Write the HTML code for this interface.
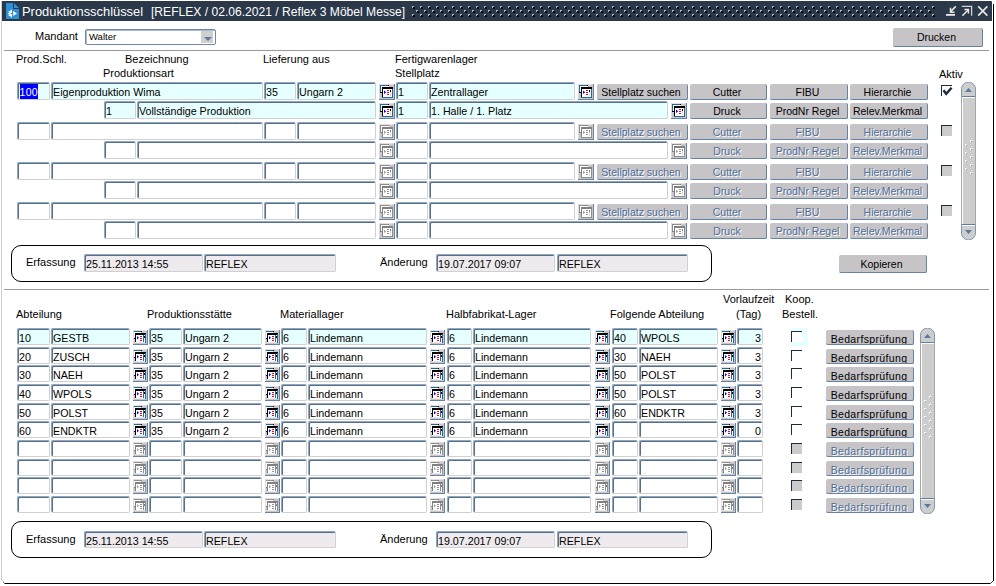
<!DOCTYPE html><html><head><meta charset="utf-8"><style>
html,body{margin:0;padding:0;background:#fff;width:996px;height:586px;overflow:hidden;position:relative;font-family:"Liberation Sans",sans-serif;font-size:10.5px;color:#000}
.a,.f,.b,.t,.ic{position:absolute}
.t{white-space:pre;line-height:12px}
.f{box-sizing:border-box;padding-top:2px;box-shadow:inset 1px 1px 0 #55708e;border-top:1px solid #93a6ba;border-left:1px solid #93a6ba;border-right:1px solid #d0d0d0;border-bottom:1px solid #d0d0d0;border-radius:2px;white-space:pre;overflow:hidden;font-size:10.7px}
.b{background:#c7c4c8;border-right:1px solid #6584a4;border-bottom:1px solid #6584a4;border-radius:2px;text-align:center;white-space:pre;overflow:hidden;font-size:10.5px}
.b.d{color:#4d6d97;text-shadow:1px 1px 0 #fff}
</style></head><body>

<div class="a" style="left:1px;top:1px;width:1px;height:579px;background:#cfcfcf"></div>
<div class="a" style="left:993px;top:4px;width:1px;height:577px;background:#000"></div>
<div class="a" style="left:5px;top:583px;width:985px;height:1px;background:#000"></div>
<svg class="ic" style="left:0;top:575px" width="996" height="11" shape-rendering="crispEdges"><rect x="2" y="5" width="1" height="1" fill="#d8d8d8"/><rect x="3" y="6" width="1" height="1" fill="#b8c0c8"/><rect x="3" y="7" width="1" height="1" fill="#5a7898"/><rect x="4" y="8" width="1" height="1" fill="#5a7898"/><rect x="992" y="6" width="1" height="1" fill="#203040"/><rect x="991" y="7" width="1" height="1" fill="#203040"/><rect x="990" y="8" width="1" height="1" fill="#4a6a90"/></svg>
<div class="a" style="left:2px;top:1px;width:990px;height:20px;background:#2a384a;border-top-right-radius:1px"></div>
<svg class="ic" style="left:0;top:0" width="996" height="22" shape-rendering="crispEdges"><rect x="412" y="6" width="2" height="2" fill="#9fb0c2"/><rect x="413" y="7" width="2" height="2" fill="#000"/><rect x="412" y="6" width="2" height="1" fill="#a8b8c8"/><rect x="412" y="6" width="1" height="2" fill="#a8b8c8"/><rect x="412" y="14" width="2" height="2" fill="#9fb0c2"/><rect x="413" y="15" width="2" height="2" fill="#000"/><rect x="412" y="14" width="2" height="1" fill="#a8b8c8"/><rect x="412" y="14" width="1" height="2" fill="#a8b8c8"/><rect x="416" y="10" width="2" height="2" fill="#9fb0c2"/><rect x="417" y="11" width="2" height="2" fill="#000"/><rect x="416" y="10" width="2" height="1" fill="#a8b8c8"/><rect x="416" y="10" width="1" height="2" fill="#a8b8c8"/><rect x="420" y="6" width="2" height="2" fill="#9fb0c2"/><rect x="421" y="7" width="2" height="2" fill="#000"/><rect x="420" y="6" width="2" height="1" fill="#a8b8c8"/><rect x="420" y="6" width="1" height="2" fill="#a8b8c8"/><rect x="420" y="14" width="2" height="2" fill="#9fb0c2"/><rect x="421" y="15" width="2" height="2" fill="#000"/><rect x="420" y="14" width="2" height="1" fill="#a8b8c8"/><rect x="420" y="14" width="1" height="2" fill="#a8b8c8"/><rect x="424" y="10" width="2" height="2" fill="#9fb0c2"/><rect x="425" y="11" width="2" height="2" fill="#000"/><rect x="424" y="10" width="2" height="1" fill="#a8b8c8"/><rect x="424" y="10" width="1" height="2" fill="#a8b8c8"/><rect x="428" y="6" width="2" height="2" fill="#9fb0c2"/><rect x="429" y="7" width="2" height="2" fill="#000"/><rect x="428" y="6" width="2" height="1" fill="#a8b8c8"/><rect x="428" y="6" width="1" height="2" fill="#a8b8c8"/><rect x="428" y="14" width="2" height="2" fill="#9fb0c2"/><rect x="429" y="15" width="2" height="2" fill="#000"/><rect x="428" y="14" width="2" height="1" fill="#a8b8c8"/><rect x="428" y="14" width="1" height="2" fill="#a8b8c8"/><rect x="432" y="10" width="2" height="2" fill="#9fb0c2"/><rect x="433" y="11" width="2" height="2" fill="#000"/><rect x="432" y="10" width="2" height="1" fill="#a8b8c8"/><rect x="432" y="10" width="1" height="2" fill="#a8b8c8"/><rect x="436" y="6" width="2" height="2" fill="#9fb0c2"/><rect x="437" y="7" width="2" height="2" fill="#000"/><rect x="436" y="6" width="2" height="1" fill="#a8b8c8"/><rect x="436" y="6" width="1" height="2" fill="#a8b8c8"/><rect x="436" y="14" width="2" height="2" fill="#9fb0c2"/><rect x="437" y="15" width="2" height="2" fill="#000"/><rect x="436" y="14" width="2" height="1" fill="#a8b8c8"/><rect x="436" y="14" width="1" height="2" fill="#a8b8c8"/><rect x="440" y="10" width="2" height="2" fill="#9fb0c2"/><rect x="441" y="11" width="2" height="2" fill="#000"/><rect x="440" y="10" width="2" height="1" fill="#a8b8c8"/><rect x="440" y="10" width="1" height="2" fill="#a8b8c8"/><rect x="444" y="6" width="2" height="2" fill="#9fb0c2"/><rect x="445" y="7" width="2" height="2" fill="#000"/><rect x="444" y="6" width="2" height="1" fill="#a8b8c8"/><rect x="444" y="6" width="1" height="2" fill="#a8b8c8"/><rect x="444" y="14" width="2" height="2" fill="#9fb0c2"/><rect x="445" y="15" width="2" height="2" fill="#000"/><rect x="444" y="14" width="2" height="1" fill="#a8b8c8"/><rect x="444" y="14" width="1" height="2" fill="#a8b8c8"/><rect x="448" y="10" width="2" height="2" fill="#9fb0c2"/><rect x="449" y="11" width="2" height="2" fill="#000"/><rect x="448" y="10" width="2" height="1" fill="#a8b8c8"/><rect x="448" y="10" width="1" height="2" fill="#a8b8c8"/><rect x="452" y="6" width="2" height="2" fill="#9fb0c2"/><rect x="453" y="7" width="2" height="2" fill="#000"/><rect x="452" y="6" width="2" height="1" fill="#a8b8c8"/><rect x="452" y="6" width="1" height="2" fill="#a8b8c8"/><rect x="452" y="14" width="2" height="2" fill="#9fb0c2"/><rect x="453" y="15" width="2" height="2" fill="#000"/><rect x="452" y="14" width="2" height="1" fill="#a8b8c8"/><rect x="452" y="14" width="1" height="2" fill="#a8b8c8"/><rect x="456" y="10" width="2" height="2" fill="#9fb0c2"/><rect x="457" y="11" width="2" height="2" fill="#000"/><rect x="456" y="10" width="2" height="1" fill="#a8b8c8"/><rect x="456" y="10" width="1" height="2" fill="#a8b8c8"/><rect x="460" y="6" width="2" height="2" fill="#9fb0c2"/><rect x="461" y="7" width="2" height="2" fill="#000"/><rect x="460" y="6" width="2" height="1" fill="#a8b8c8"/><rect x="460" y="6" width="1" height="2" fill="#a8b8c8"/><rect x="460" y="14" width="2" height="2" fill="#9fb0c2"/><rect x="461" y="15" width="2" height="2" fill="#000"/><rect x="460" y="14" width="2" height="1" fill="#a8b8c8"/><rect x="460" y="14" width="1" height="2" fill="#a8b8c8"/><rect x="464" y="10" width="2" height="2" fill="#9fb0c2"/><rect x="465" y="11" width="2" height="2" fill="#000"/><rect x="464" y="10" width="2" height="1" fill="#a8b8c8"/><rect x="464" y="10" width="1" height="2" fill="#a8b8c8"/><rect x="468" y="6" width="2" height="2" fill="#9fb0c2"/><rect x="469" y="7" width="2" height="2" fill="#000"/><rect x="468" y="6" width="2" height="1" fill="#a8b8c8"/><rect x="468" y="6" width="1" height="2" fill="#a8b8c8"/><rect x="468" y="14" width="2" height="2" fill="#9fb0c2"/><rect x="469" y="15" width="2" height="2" fill="#000"/><rect x="468" y="14" width="2" height="1" fill="#a8b8c8"/><rect x="468" y="14" width="1" height="2" fill="#a8b8c8"/><rect x="472" y="10" width="2" height="2" fill="#9fb0c2"/><rect x="473" y="11" width="2" height="2" fill="#000"/><rect x="472" y="10" width="2" height="1" fill="#a8b8c8"/><rect x="472" y="10" width="1" height="2" fill="#a8b8c8"/><rect x="476" y="6" width="2" height="2" fill="#9fb0c2"/><rect x="477" y="7" width="2" height="2" fill="#000"/><rect x="476" y="6" width="2" height="1" fill="#a8b8c8"/><rect x="476" y="6" width="1" height="2" fill="#a8b8c8"/><rect x="476" y="14" width="2" height="2" fill="#9fb0c2"/><rect x="477" y="15" width="2" height="2" fill="#000"/><rect x="476" y="14" width="2" height="1" fill="#a8b8c8"/><rect x="476" y="14" width="1" height="2" fill="#a8b8c8"/><rect x="480" y="10" width="2" height="2" fill="#9fb0c2"/><rect x="481" y="11" width="2" height="2" fill="#000"/><rect x="480" y="10" width="2" height="1" fill="#a8b8c8"/><rect x="480" y="10" width="1" height="2" fill="#a8b8c8"/><rect x="484" y="6" width="2" height="2" fill="#9fb0c2"/><rect x="485" y="7" width="2" height="2" fill="#000"/><rect x="484" y="6" width="2" height="1" fill="#a8b8c8"/><rect x="484" y="6" width="1" height="2" fill="#a8b8c8"/><rect x="484" y="14" width="2" height="2" fill="#9fb0c2"/><rect x="485" y="15" width="2" height="2" fill="#000"/><rect x="484" y="14" width="2" height="1" fill="#a8b8c8"/><rect x="484" y="14" width="1" height="2" fill="#a8b8c8"/><rect x="488" y="10" width="2" height="2" fill="#9fb0c2"/><rect x="489" y="11" width="2" height="2" fill="#000"/><rect x="488" y="10" width="2" height="1" fill="#a8b8c8"/><rect x="488" y="10" width="1" height="2" fill="#a8b8c8"/><rect x="492" y="6" width="2" height="2" fill="#9fb0c2"/><rect x="493" y="7" width="2" height="2" fill="#000"/><rect x="492" y="6" width="2" height="1" fill="#a8b8c8"/><rect x="492" y="6" width="1" height="2" fill="#a8b8c8"/><rect x="492" y="14" width="2" height="2" fill="#9fb0c2"/><rect x="493" y="15" width="2" height="2" fill="#000"/><rect x="492" y="14" width="2" height="1" fill="#a8b8c8"/><rect x="492" y="14" width="1" height="2" fill="#a8b8c8"/><rect x="496" y="10" width="2" height="2" fill="#9fb0c2"/><rect x="497" y="11" width="2" height="2" fill="#000"/><rect x="496" y="10" width="2" height="1" fill="#a8b8c8"/><rect x="496" y="10" width="1" height="2" fill="#a8b8c8"/><rect x="500" y="6" width="2" height="2" fill="#9fb0c2"/><rect x="501" y="7" width="2" height="2" fill="#000"/><rect x="500" y="6" width="2" height="1" fill="#a8b8c8"/><rect x="500" y="6" width="1" height="2" fill="#a8b8c8"/><rect x="500" y="14" width="2" height="2" fill="#9fb0c2"/><rect x="501" y="15" width="2" height="2" fill="#000"/><rect x="500" y="14" width="2" height="1" fill="#a8b8c8"/><rect x="500" y="14" width="1" height="2" fill="#a8b8c8"/><rect x="504" y="10" width="2" height="2" fill="#9fb0c2"/><rect x="505" y="11" width="2" height="2" fill="#000"/><rect x="504" y="10" width="2" height="1" fill="#a8b8c8"/><rect x="504" y="10" width="1" height="2" fill="#a8b8c8"/><rect x="508" y="6" width="2" height="2" fill="#9fb0c2"/><rect x="509" y="7" width="2" height="2" fill="#000"/><rect x="508" y="6" width="2" height="1" fill="#a8b8c8"/><rect x="508" y="6" width="1" height="2" fill="#a8b8c8"/><rect x="508" y="14" width="2" height="2" fill="#9fb0c2"/><rect x="509" y="15" width="2" height="2" fill="#000"/><rect x="508" y="14" width="2" height="1" fill="#a8b8c8"/><rect x="508" y="14" width="1" height="2" fill="#a8b8c8"/><rect x="512" y="10" width="2" height="2" fill="#9fb0c2"/><rect x="513" y="11" width="2" height="2" fill="#000"/><rect x="512" y="10" width="2" height="1" fill="#a8b8c8"/><rect x="512" y="10" width="1" height="2" fill="#a8b8c8"/><rect x="516" y="6" width="2" height="2" fill="#9fb0c2"/><rect x="517" y="7" width="2" height="2" fill="#000"/><rect x="516" y="6" width="2" height="1" fill="#a8b8c8"/><rect x="516" y="6" width="1" height="2" fill="#a8b8c8"/><rect x="516" y="14" width="2" height="2" fill="#9fb0c2"/><rect x="517" y="15" width="2" height="2" fill="#000"/><rect x="516" y="14" width="2" height="1" fill="#a8b8c8"/><rect x="516" y="14" width="1" height="2" fill="#a8b8c8"/><rect x="520" y="10" width="2" height="2" fill="#9fb0c2"/><rect x="521" y="11" width="2" height="2" fill="#000"/><rect x="520" y="10" width="2" height="1" fill="#a8b8c8"/><rect x="520" y="10" width="1" height="2" fill="#a8b8c8"/><rect x="524" y="6" width="2" height="2" fill="#9fb0c2"/><rect x="525" y="7" width="2" height="2" fill="#000"/><rect x="524" y="6" width="2" height="1" fill="#a8b8c8"/><rect x="524" y="6" width="1" height="2" fill="#a8b8c8"/><rect x="524" y="14" width="2" height="2" fill="#9fb0c2"/><rect x="525" y="15" width="2" height="2" fill="#000"/><rect x="524" y="14" width="2" height="1" fill="#a8b8c8"/><rect x="524" y="14" width="1" height="2" fill="#a8b8c8"/><rect x="528" y="10" width="2" height="2" fill="#9fb0c2"/><rect x="529" y="11" width="2" height="2" fill="#000"/><rect x="528" y="10" width="2" height="1" fill="#a8b8c8"/><rect x="528" y="10" width="1" height="2" fill="#a8b8c8"/><rect x="532" y="6" width="2" height="2" fill="#9fb0c2"/><rect x="533" y="7" width="2" height="2" fill="#000"/><rect x="532" y="6" width="2" height="1" fill="#a8b8c8"/><rect x="532" y="6" width="1" height="2" fill="#a8b8c8"/><rect x="532" y="14" width="2" height="2" fill="#9fb0c2"/><rect x="533" y="15" width="2" height="2" fill="#000"/><rect x="532" y="14" width="2" height="1" fill="#a8b8c8"/><rect x="532" y="14" width="1" height="2" fill="#a8b8c8"/><rect x="536" y="10" width="2" height="2" fill="#9fb0c2"/><rect x="537" y="11" width="2" height="2" fill="#000"/><rect x="536" y="10" width="2" height="1" fill="#a8b8c8"/><rect x="536" y="10" width="1" height="2" fill="#a8b8c8"/><rect x="540" y="6" width="2" height="2" fill="#9fb0c2"/><rect x="541" y="7" width="2" height="2" fill="#000"/><rect x="540" y="6" width="2" height="1" fill="#a8b8c8"/><rect x="540" y="6" width="1" height="2" fill="#a8b8c8"/><rect x="540" y="14" width="2" height="2" fill="#9fb0c2"/><rect x="541" y="15" width="2" height="2" fill="#000"/><rect x="540" y="14" width="2" height="1" fill="#a8b8c8"/><rect x="540" y="14" width="1" height="2" fill="#a8b8c8"/><rect x="544" y="10" width="2" height="2" fill="#9fb0c2"/><rect x="545" y="11" width="2" height="2" fill="#000"/><rect x="544" y="10" width="2" height="1" fill="#a8b8c8"/><rect x="544" y="10" width="1" height="2" fill="#a8b8c8"/><rect x="548" y="6" width="2" height="2" fill="#9fb0c2"/><rect x="549" y="7" width="2" height="2" fill="#000"/><rect x="548" y="6" width="2" height="1" fill="#a8b8c8"/><rect x="548" y="6" width="1" height="2" fill="#a8b8c8"/><rect x="548" y="14" width="2" height="2" fill="#9fb0c2"/><rect x="549" y="15" width="2" height="2" fill="#000"/><rect x="548" y="14" width="2" height="1" fill="#a8b8c8"/><rect x="548" y="14" width="1" height="2" fill="#a8b8c8"/><rect x="552" y="10" width="2" height="2" fill="#9fb0c2"/><rect x="553" y="11" width="2" height="2" fill="#000"/><rect x="552" y="10" width="2" height="1" fill="#a8b8c8"/><rect x="552" y="10" width="1" height="2" fill="#a8b8c8"/><rect x="556" y="6" width="2" height="2" fill="#9fb0c2"/><rect x="557" y="7" width="2" height="2" fill="#000"/><rect x="556" y="6" width="2" height="1" fill="#a8b8c8"/><rect x="556" y="6" width="1" height="2" fill="#a8b8c8"/><rect x="556" y="14" width="2" height="2" fill="#9fb0c2"/><rect x="557" y="15" width="2" height="2" fill="#000"/><rect x="556" y="14" width="2" height="1" fill="#a8b8c8"/><rect x="556" y="14" width="1" height="2" fill="#a8b8c8"/><rect x="560" y="10" width="2" height="2" fill="#9fb0c2"/><rect x="561" y="11" width="2" height="2" fill="#000"/><rect x="560" y="10" width="2" height="1" fill="#a8b8c8"/><rect x="560" y="10" width="1" height="2" fill="#a8b8c8"/><rect x="564" y="6" width="2" height="2" fill="#9fb0c2"/><rect x="565" y="7" width="2" height="2" fill="#000"/><rect x="564" y="6" width="2" height="1" fill="#a8b8c8"/><rect x="564" y="6" width="1" height="2" fill="#a8b8c8"/><rect x="564" y="14" width="2" height="2" fill="#9fb0c2"/><rect x="565" y="15" width="2" height="2" fill="#000"/><rect x="564" y="14" width="2" height="1" fill="#a8b8c8"/><rect x="564" y="14" width="1" height="2" fill="#a8b8c8"/><rect x="568" y="10" width="2" height="2" fill="#9fb0c2"/><rect x="569" y="11" width="2" height="2" fill="#000"/><rect x="568" y="10" width="2" height="1" fill="#a8b8c8"/><rect x="568" y="10" width="1" height="2" fill="#a8b8c8"/><rect x="572" y="6" width="2" height="2" fill="#9fb0c2"/><rect x="573" y="7" width="2" height="2" fill="#000"/><rect x="572" y="6" width="2" height="1" fill="#a8b8c8"/><rect x="572" y="6" width="1" height="2" fill="#a8b8c8"/><rect x="572" y="14" width="2" height="2" fill="#9fb0c2"/><rect x="573" y="15" width="2" height="2" fill="#000"/><rect x="572" y="14" width="2" height="1" fill="#a8b8c8"/><rect x="572" y="14" width="1" height="2" fill="#a8b8c8"/><rect x="576" y="10" width="2" height="2" fill="#9fb0c2"/><rect x="577" y="11" width="2" height="2" fill="#000"/><rect x="576" y="10" width="2" height="1" fill="#a8b8c8"/><rect x="576" y="10" width="1" height="2" fill="#a8b8c8"/><rect x="580" y="6" width="2" height="2" fill="#9fb0c2"/><rect x="581" y="7" width="2" height="2" fill="#000"/><rect x="580" y="6" width="2" height="1" fill="#a8b8c8"/><rect x="580" y="6" width="1" height="2" fill="#a8b8c8"/><rect x="580" y="14" width="2" height="2" fill="#9fb0c2"/><rect x="581" y="15" width="2" height="2" fill="#000"/><rect x="580" y="14" width="2" height="1" fill="#a8b8c8"/><rect x="580" y="14" width="1" height="2" fill="#a8b8c8"/><rect x="584" y="10" width="2" height="2" fill="#9fb0c2"/><rect x="585" y="11" width="2" height="2" fill="#000"/><rect x="584" y="10" width="2" height="1" fill="#a8b8c8"/><rect x="584" y="10" width="1" height="2" fill="#a8b8c8"/><rect x="588" y="6" width="2" height="2" fill="#9fb0c2"/><rect x="589" y="7" width="2" height="2" fill="#000"/><rect x="588" y="6" width="2" height="1" fill="#a8b8c8"/><rect x="588" y="6" width="1" height="2" fill="#a8b8c8"/><rect x="588" y="14" width="2" height="2" fill="#9fb0c2"/><rect x="589" y="15" width="2" height="2" fill="#000"/><rect x="588" y="14" width="2" height="1" fill="#a8b8c8"/><rect x="588" y="14" width="1" height="2" fill="#a8b8c8"/><rect x="592" y="10" width="2" height="2" fill="#9fb0c2"/><rect x="593" y="11" width="2" height="2" fill="#000"/><rect x="592" y="10" width="2" height="1" fill="#a8b8c8"/><rect x="592" y="10" width="1" height="2" fill="#a8b8c8"/><rect x="596" y="6" width="2" height="2" fill="#9fb0c2"/><rect x="597" y="7" width="2" height="2" fill="#000"/><rect x="596" y="6" width="2" height="1" fill="#a8b8c8"/><rect x="596" y="6" width="1" height="2" fill="#a8b8c8"/><rect x="596" y="14" width="2" height="2" fill="#9fb0c2"/><rect x="597" y="15" width="2" height="2" fill="#000"/><rect x="596" y="14" width="2" height="1" fill="#a8b8c8"/><rect x="596" y="14" width="1" height="2" fill="#a8b8c8"/><rect x="600" y="10" width="2" height="2" fill="#9fb0c2"/><rect x="601" y="11" width="2" height="2" fill="#000"/><rect x="600" y="10" width="2" height="1" fill="#a8b8c8"/><rect x="600" y="10" width="1" height="2" fill="#a8b8c8"/><rect x="604" y="6" width="2" height="2" fill="#9fb0c2"/><rect x="605" y="7" width="2" height="2" fill="#000"/><rect x="604" y="6" width="2" height="1" fill="#a8b8c8"/><rect x="604" y="6" width="1" height="2" fill="#a8b8c8"/><rect x="604" y="14" width="2" height="2" fill="#9fb0c2"/><rect x="605" y="15" width="2" height="2" fill="#000"/><rect x="604" y="14" width="2" height="1" fill="#a8b8c8"/><rect x="604" y="14" width="1" height="2" fill="#a8b8c8"/><rect x="608" y="10" width="2" height="2" fill="#9fb0c2"/><rect x="609" y="11" width="2" height="2" fill="#000"/><rect x="608" y="10" width="2" height="1" fill="#a8b8c8"/><rect x="608" y="10" width="1" height="2" fill="#a8b8c8"/><rect x="612" y="6" width="2" height="2" fill="#9fb0c2"/><rect x="613" y="7" width="2" height="2" fill="#000"/><rect x="612" y="6" width="2" height="1" fill="#a8b8c8"/><rect x="612" y="6" width="1" height="2" fill="#a8b8c8"/><rect x="612" y="14" width="2" height="2" fill="#9fb0c2"/><rect x="613" y="15" width="2" height="2" fill="#000"/><rect x="612" y="14" width="2" height="1" fill="#a8b8c8"/><rect x="612" y="14" width="1" height="2" fill="#a8b8c8"/><rect x="616" y="10" width="2" height="2" fill="#9fb0c2"/><rect x="617" y="11" width="2" height="2" fill="#000"/><rect x="616" y="10" width="2" height="1" fill="#a8b8c8"/><rect x="616" y="10" width="1" height="2" fill="#a8b8c8"/><rect x="620" y="6" width="2" height="2" fill="#9fb0c2"/><rect x="621" y="7" width="2" height="2" fill="#000"/><rect x="620" y="6" width="2" height="1" fill="#a8b8c8"/><rect x="620" y="6" width="1" height="2" fill="#a8b8c8"/><rect x="620" y="14" width="2" height="2" fill="#9fb0c2"/><rect x="621" y="15" width="2" height="2" fill="#000"/><rect x="620" y="14" width="2" height="1" fill="#a8b8c8"/><rect x="620" y="14" width="1" height="2" fill="#a8b8c8"/><rect x="624" y="10" width="2" height="2" fill="#9fb0c2"/><rect x="625" y="11" width="2" height="2" fill="#000"/><rect x="624" y="10" width="2" height="1" fill="#a8b8c8"/><rect x="624" y="10" width="1" height="2" fill="#a8b8c8"/><rect x="628" y="6" width="2" height="2" fill="#9fb0c2"/><rect x="629" y="7" width="2" height="2" fill="#000"/><rect x="628" y="6" width="2" height="1" fill="#a8b8c8"/><rect x="628" y="6" width="1" height="2" fill="#a8b8c8"/><rect x="628" y="14" width="2" height="2" fill="#9fb0c2"/><rect x="629" y="15" width="2" height="2" fill="#000"/><rect x="628" y="14" width="2" height="1" fill="#a8b8c8"/><rect x="628" y="14" width="1" height="2" fill="#a8b8c8"/><rect x="632" y="10" width="2" height="2" fill="#9fb0c2"/><rect x="633" y="11" width="2" height="2" fill="#000"/><rect x="632" y="10" width="2" height="1" fill="#a8b8c8"/><rect x="632" y="10" width="1" height="2" fill="#a8b8c8"/><rect x="636" y="6" width="2" height="2" fill="#9fb0c2"/><rect x="637" y="7" width="2" height="2" fill="#000"/><rect x="636" y="6" width="2" height="1" fill="#a8b8c8"/><rect x="636" y="6" width="1" height="2" fill="#a8b8c8"/><rect x="636" y="14" width="2" height="2" fill="#9fb0c2"/><rect x="637" y="15" width="2" height="2" fill="#000"/><rect x="636" y="14" width="2" height="1" fill="#a8b8c8"/><rect x="636" y="14" width="1" height="2" fill="#a8b8c8"/><rect x="640" y="10" width="2" height="2" fill="#9fb0c2"/><rect x="641" y="11" width="2" height="2" fill="#000"/><rect x="640" y="10" width="2" height="1" fill="#a8b8c8"/><rect x="640" y="10" width="1" height="2" fill="#a8b8c8"/><rect x="644" y="6" width="2" height="2" fill="#9fb0c2"/><rect x="645" y="7" width="2" height="2" fill="#000"/><rect x="644" y="6" width="2" height="1" fill="#a8b8c8"/><rect x="644" y="6" width="1" height="2" fill="#a8b8c8"/><rect x="644" y="14" width="2" height="2" fill="#9fb0c2"/><rect x="645" y="15" width="2" height="2" fill="#000"/><rect x="644" y="14" width="2" height="1" fill="#a8b8c8"/><rect x="644" y="14" width="1" height="2" fill="#a8b8c8"/><rect x="648" y="10" width="2" height="2" fill="#9fb0c2"/><rect x="649" y="11" width="2" height="2" fill="#000"/><rect x="648" y="10" width="2" height="1" fill="#a8b8c8"/><rect x="648" y="10" width="1" height="2" fill="#a8b8c8"/><rect x="652" y="6" width="2" height="2" fill="#9fb0c2"/><rect x="653" y="7" width="2" height="2" fill="#000"/><rect x="652" y="6" width="2" height="1" fill="#a8b8c8"/><rect x="652" y="6" width="1" height="2" fill="#a8b8c8"/><rect x="652" y="14" width="2" height="2" fill="#9fb0c2"/><rect x="653" y="15" width="2" height="2" fill="#000"/><rect x="652" y="14" width="2" height="1" fill="#a8b8c8"/><rect x="652" y="14" width="1" height="2" fill="#a8b8c8"/><rect x="656" y="10" width="2" height="2" fill="#9fb0c2"/><rect x="657" y="11" width="2" height="2" fill="#000"/><rect x="656" y="10" width="2" height="1" fill="#a8b8c8"/><rect x="656" y="10" width="1" height="2" fill="#a8b8c8"/><rect x="660" y="6" width="2" height="2" fill="#9fb0c2"/><rect x="661" y="7" width="2" height="2" fill="#000"/><rect x="660" y="6" width="2" height="1" fill="#a8b8c8"/><rect x="660" y="6" width="1" height="2" fill="#a8b8c8"/><rect x="660" y="14" width="2" height="2" fill="#9fb0c2"/><rect x="661" y="15" width="2" height="2" fill="#000"/><rect x="660" y="14" width="2" height="1" fill="#a8b8c8"/><rect x="660" y="14" width="1" height="2" fill="#a8b8c8"/><rect x="664" y="10" width="2" height="2" fill="#9fb0c2"/><rect x="665" y="11" width="2" height="2" fill="#000"/><rect x="664" y="10" width="2" height="1" fill="#a8b8c8"/><rect x="664" y="10" width="1" height="2" fill="#a8b8c8"/><rect x="668" y="6" width="2" height="2" fill="#9fb0c2"/><rect x="669" y="7" width="2" height="2" fill="#000"/><rect x="668" y="6" width="2" height="1" fill="#a8b8c8"/><rect x="668" y="6" width="1" height="2" fill="#a8b8c8"/><rect x="668" y="14" width="2" height="2" fill="#9fb0c2"/><rect x="669" y="15" width="2" height="2" fill="#000"/><rect x="668" y="14" width="2" height="1" fill="#a8b8c8"/><rect x="668" y="14" width="1" height="2" fill="#a8b8c8"/><rect x="672" y="10" width="2" height="2" fill="#9fb0c2"/><rect x="673" y="11" width="2" height="2" fill="#000"/><rect x="672" y="10" width="2" height="1" fill="#a8b8c8"/><rect x="672" y="10" width="1" height="2" fill="#a8b8c8"/><rect x="676" y="6" width="2" height="2" fill="#9fb0c2"/><rect x="677" y="7" width="2" height="2" fill="#000"/><rect x="676" y="6" width="2" height="1" fill="#a8b8c8"/><rect x="676" y="6" width="1" height="2" fill="#a8b8c8"/><rect x="676" y="14" width="2" height="2" fill="#9fb0c2"/><rect x="677" y="15" width="2" height="2" fill="#000"/><rect x="676" y="14" width="2" height="1" fill="#a8b8c8"/><rect x="676" y="14" width="1" height="2" fill="#a8b8c8"/><rect x="680" y="10" width="2" height="2" fill="#9fb0c2"/><rect x="681" y="11" width="2" height="2" fill="#000"/><rect x="680" y="10" width="2" height="1" fill="#a8b8c8"/><rect x="680" y="10" width="1" height="2" fill="#a8b8c8"/><rect x="684" y="6" width="2" height="2" fill="#9fb0c2"/><rect x="685" y="7" width="2" height="2" fill="#000"/><rect x="684" y="6" width="2" height="1" fill="#a8b8c8"/><rect x="684" y="6" width="1" height="2" fill="#a8b8c8"/><rect x="684" y="14" width="2" height="2" fill="#9fb0c2"/><rect x="685" y="15" width="2" height="2" fill="#000"/><rect x="684" y="14" width="2" height="1" fill="#a8b8c8"/><rect x="684" y="14" width="1" height="2" fill="#a8b8c8"/><rect x="688" y="10" width="2" height="2" fill="#9fb0c2"/><rect x="689" y="11" width="2" height="2" fill="#000"/><rect x="688" y="10" width="2" height="1" fill="#a8b8c8"/><rect x="688" y="10" width="1" height="2" fill="#a8b8c8"/><rect x="692" y="6" width="2" height="2" fill="#9fb0c2"/><rect x="693" y="7" width="2" height="2" fill="#000"/><rect x="692" y="6" width="2" height="1" fill="#a8b8c8"/><rect x="692" y="6" width="1" height="2" fill="#a8b8c8"/><rect x="692" y="14" width="2" height="2" fill="#9fb0c2"/><rect x="693" y="15" width="2" height="2" fill="#000"/><rect x="692" y="14" width="2" height="1" fill="#a8b8c8"/><rect x="692" y="14" width="1" height="2" fill="#a8b8c8"/><rect x="696" y="10" width="2" height="2" fill="#9fb0c2"/><rect x="697" y="11" width="2" height="2" fill="#000"/><rect x="696" y="10" width="2" height="1" fill="#a8b8c8"/><rect x="696" y="10" width="1" height="2" fill="#a8b8c8"/><rect x="700" y="6" width="2" height="2" fill="#9fb0c2"/><rect x="701" y="7" width="2" height="2" fill="#000"/><rect x="700" y="6" width="2" height="1" fill="#a8b8c8"/><rect x="700" y="6" width="1" height="2" fill="#a8b8c8"/><rect x="700" y="14" width="2" height="2" fill="#9fb0c2"/><rect x="701" y="15" width="2" height="2" fill="#000"/><rect x="700" y="14" width="2" height="1" fill="#a8b8c8"/><rect x="700" y="14" width="1" height="2" fill="#a8b8c8"/><rect x="704" y="10" width="2" height="2" fill="#9fb0c2"/><rect x="705" y="11" width="2" height="2" fill="#000"/><rect x="704" y="10" width="2" height="1" fill="#a8b8c8"/><rect x="704" y="10" width="1" height="2" fill="#a8b8c8"/><rect x="708" y="6" width="2" height="2" fill="#9fb0c2"/><rect x="709" y="7" width="2" height="2" fill="#000"/><rect x="708" y="6" width="2" height="1" fill="#a8b8c8"/><rect x="708" y="6" width="1" height="2" fill="#a8b8c8"/><rect x="708" y="14" width="2" height="2" fill="#9fb0c2"/><rect x="709" y="15" width="2" height="2" fill="#000"/><rect x="708" y="14" width="2" height="1" fill="#a8b8c8"/><rect x="708" y="14" width="1" height="2" fill="#a8b8c8"/><rect x="712" y="10" width="2" height="2" fill="#9fb0c2"/><rect x="713" y="11" width="2" height="2" fill="#000"/><rect x="712" y="10" width="2" height="1" fill="#a8b8c8"/><rect x="712" y="10" width="1" height="2" fill="#a8b8c8"/><rect x="716" y="6" width="2" height="2" fill="#9fb0c2"/><rect x="717" y="7" width="2" height="2" fill="#000"/><rect x="716" y="6" width="2" height="1" fill="#a8b8c8"/><rect x="716" y="6" width="1" height="2" fill="#a8b8c8"/><rect x="716" y="14" width="2" height="2" fill="#9fb0c2"/><rect x="717" y="15" width="2" height="2" fill="#000"/><rect x="716" y="14" width="2" height="1" fill="#a8b8c8"/><rect x="716" y="14" width="1" height="2" fill="#a8b8c8"/><rect x="720" y="10" width="2" height="2" fill="#9fb0c2"/><rect x="721" y="11" width="2" height="2" fill="#000"/><rect x="720" y="10" width="2" height="1" fill="#a8b8c8"/><rect x="720" y="10" width="1" height="2" fill="#a8b8c8"/><rect x="724" y="6" width="2" height="2" fill="#9fb0c2"/><rect x="725" y="7" width="2" height="2" fill="#000"/><rect x="724" y="6" width="2" height="1" fill="#a8b8c8"/><rect x="724" y="6" width="1" height="2" fill="#a8b8c8"/><rect x="724" y="14" width="2" height="2" fill="#9fb0c2"/><rect x="725" y="15" width="2" height="2" fill="#000"/><rect x="724" y="14" width="2" height="1" fill="#a8b8c8"/><rect x="724" y="14" width="1" height="2" fill="#a8b8c8"/><rect x="728" y="10" width="2" height="2" fill="#9fb0c2"/><rect x="729" y="11" width="2" height="2" fill="#000"/><rect x="728" y="10" width="2" height="1" fill="#a8b8c8"/><rect x="728" y="10" width="1" height="2" fill="#a8b8c8"/><rect x="732" y="6" width="2" height="2" fill="#9fb0c2"/><rect x="733" y="7" width="2" height="2" fill="#000"/><rect x="732" y="6" width="2" height="1" fill="#a8b8c8"/><rect x="732" y="6" width="1" height="2" fill="#a8b8c8"/><rect x="732" y="14" width="2" height="2" fill="#9fb0c2"/><rect x="733" y="15" width="2" height="2" fill="#000"/><rect x="732" y="14" width="2" height="1" fill="#a8b8c8"/><rect x="732" y="14" width="1" height="2" fill="#a8b8c8"/><rect x="736" y="10" width="2" height="2" fill="#9fb0c2"/><rect x="737" y="11" width="2" height="2" fill="#000"/><rect x="736" y="10" width="2" height="1" fill="#a8b8c8"/><rect x="736" y="10" width="1" height="2" fill="#a8b8c8"/><rect x="740" y="6" width="2" height="2" fill="#9fb0c2"/><rect x="741" y="7" width="2" height="2" fill="#000"/><rect x="740" y="6" width="2" height="1" fill="#a8b8c8"/><rect x="740" y="6" width="1" height="2" fill="#a8b8c8"/><rect x="740" y="14" width="2" height="2" fill="#9fb0c2"/><rect x="741" y="15" width="2" height="2" fill="#000"/><rect x="740" y="14" width="2" height="1" fill="#a8b8c8"/><rect x="740" y="14" width="1" height="2" fill="#a8b8c8"/><rect x="744" y="10" width="2" height="2" fill="#9fb0c2"/><rect x="745" y="11" width="2" height="2" fill="#000"/><rect x="744" y="10" width="2" height="1" fill="#a8b8c8"/><rect x="744" y="10" width="1" height="2" fill="#a8b8c8"/><rect x="748" y="6" width="2" height="2" fill="#9fb0c2"/><rect x="749" y="7" width="2" height="2" fill="#000"/><rect x="748" y="6" width="2" height="1" fill="#a8b8c8"/><rect x="748" y="6" width="1" height="2" fill="#a8b8c8"/><rect x="748" y="14" width="2" height="2" fill="#9fb0c2"/><rect x="749" y="15" width="2" height="2" fill="#000"/><rect x="748" y="14" width="2" height="1" fill="#a8b8c8"/><rect x="748" y="14" width="1" height="2" fill="#a8b8c8"/><rect x="752" y="10" width="2" height="2" fill="#9fb0c2"/><rect x="753" y="11" width="2" height="2" fill="#000"/><rect x="752" y="10" width="2" height="1" fill="#a8b8c8"/><rect x="752" y="10" width="1" height="2" fill="#a8b8c8"/><rect x="756" y="6" width="2" height="2" fill="#9fb0c2"/><rect x="757" y="7" width="2" height="2" fill="#000"/><rect x="756" y="6" width="2" height="1" fill="#a8b8c8"/><rect x="756" y="6" width="1" height="2" fill="#a8b8c8"/><rect x="756" y="14" width="2" height="2" fill="#9fb0c2"/><rect x="757" y="15" width="2" height="2" fill="#000"/><rect x="756" y="14" width="2" height="1" fill="#a8b8c8"/><rect x="756" y="14" width="1" height="2" fill="#a8b8c8"/><rect x="760" y="10" width="2" height="2" fill="#9fb0c2"/><rect x="761" y="11" width="2" height="2" fill="#000"/><rect x="760" y="10" width="2" height="1" fill="#a8b8c8"/><rect x="760" y="10" width="1" height="2" fill="#a8b8c8"/><rect x="764" y="6" width="2" height="2" fill="#9fb0c2"/><rect x="765" y="7" width="2" height="2" fill="#000"/><rect x="764" y="6" width="2" height="1" fill="#a8b8c8"/><rect x="764" y="6" width="1" height="2" fill="#a8b8c8"/><rect x="764" y="14" width="2" height="2" fill="#9fb0c2"/><rect x="765" y="15" width="2" height="2" fill="#000"/><rect x="764" y="14" width="2" height="1" fill="#a8b8c8"/><rect x="764" y="14" width="1" height="2" fill="#a8b8c8"/><rect x="768" y="10" width="2" height="2" fill="#9fb0c2"/><rect x="769" y="11" width="2" height="2" fill="#000"/><rect x="768" y="10" width="2" height="1" fill="#a8b8c8"/><rect x="768" y="10" width="1" height="2" fill="#a8b8c8"/><rect x="772" y="6" width="2" height="2" fill="#9fb0c2"/><rect x="773" y="7" width="2" height="2" fill="#000"/><rect x="772" y="6" width="2" height="1" fill="#a8b8c8"/><rect x="772" y="6" width="1" height="2" fill="#a8b8c8"/><rect x="772" y="14" width="2" height="2" fill="#9fb0c2"/><rect x="773" y="15" width="2" height="2" fill="#000"/><rect x="772" y="14" width="2" height="1" fill="#a8b8c8"/><rect x="772" y="14" width="1" height="2" fill="#a8b8c8"/><rect x="776" y="10" width="2" height="2" fill="#9fb0c2"/><rect x="777" y="11" width="2" height="2" fill="#000"/><rect x="776" y="10" width="2" height="1" fill="#a8b8c8"/><rect x="776" y="10" width="1" height="2" fill="#a8b8c8"/><rect x="780" y="6" width="2" height="2" fill="#9fb0c2"/><rect x="781" y="7" width="2" height="2" fill="#000"/><rect x="780" y="6" width="2" height="1" fill="#a8b8c8"/><rect x="780" y="6" width="1" height="2" fill="#a8b8c8"/><rect x="780" y="14" width="2" height="2" fill="#9fb0c2"/><rect x="781" y="15" width="2" height="2" fill="#000"/><rect x="780" y="14" width="2" height="1" fill="#a8b8c8"/><rect x="780" y="14" width="1" height="2" fill="#a8b8c8"/><rect x="784" y="10" width="2" height="2" fill="#9fb0c2"/><rect x="785" y="11" width="2" height="2" fill="#000"/><rect x="784" y="10" width="2" height="1" fill="#a8b8c8"/><rect x="784" y="10" width="1" height="2" fill="#a8b8c8"/><rect x="788" y="6" width="2" height="2" fill="#9fb0c2"/><rect x="789" y="7" width="2" height="2" fill="#000"/><rect x="788" y="6" width="2" height="1" fill="#a8b8c8"/><rect x="788" y="6" width="1" height="2" fill="#a8b8c8"/><rect x="788" y="14" width="2" height="2" fill="#9fb0c2"/><rect x="789" y="15" width="2" height="2" fill="#000"/><rect x="788" y="14" width="2" height="1" fill="#a8b8c8"/><rect x="788" y="14" width="1" height="2" fill="#a8b8c8"/><rect x="792" y="10" width="2" height="2" fill="#9fb0c2"/><rect x="793" y="11" width="2" height="2" fill="#000"/><rect x="792" y="10" width="2" height="1" fill="#a8b8c8"/><rect x="792" y="10" width="1" height="2" fill="#a8b8c8"/><rect x="796" y="6" width="2" height="2" fill="#9fb0c2"/><rect x="797" y="7" width="2" height="2" fill="#000"/><rect x="796" y="6" width="2" height="1" fill="#a8b8c8"/><rect x="796" y="6" width="1" height="2" fill="#a8b8c8"/><rect x="796" y="14" width="2" height="2" fill="#9fb0c2"/><rect x="797" y="15" width="2" height="2" fill="#000"/><rect x="796" y="14" width="2" height="1" fill="#a8b8c8"/><rect x="796" y="14" width="1" height="2" fill="#a8b8c8"/><rect x="800" y="10" width="2" height="2" fill="#9fb0c2"/><rect x="801" y="11" width="2" height="2" fill="#000"/><rect x="800" y="10" width="2" height="1" fill="#a8b8c8"/><rect x="800" y="10" width="1" height="2" fill="#a8b8c8"/><rect x="804" y="6" width="2" height="2" fill="#9fb0c2"/><rect x="805" y="7" width="2" height="2" fill="#000"/><rect x="804" y="6" width="2" height="1" fill="#a8b8c8"/><rect x="804" y="6" width="1" height="2" fill="#a8b8c8"/><rect x="804" y="14" width="2" height="2" fill="#9fb0c2"/><rect x="805" y="15" width="2" height="2" fill="#000"/><rect x="804" y="14" width="2" height="1" fill="#a8b8c8"/><rect x="804" y="14" width="1" height="2" fill="#a8b8c8"/><rect x="808" y="10" width="2" height="2" fill="#9fb0c2"/><rect x="809" y="11" width="2" height="2" fill="#000"/><rect x="808" y="10" width="2" height="1" fill="#a8b8c8"/><rect x="808" y="10" width="1" height="2" fill="#a8b8c8"/><rect x="812" y="6" width="2" height="2" fill="#9fb0c2"/><rect x="813" y="7" width="2" height="2" fill="#000"/><rect x="812" y="6" width="2" height="1" fill="#a8b8c8"/><rect x="812" y="6" width="1" height="2" fill="#a8b8c8"/><rect x="812" y="14" width="2" height="2" fill="#9fb0c2"/><rect x="813" y="15" width="2" height="2" fill="#000"/><rect x="812" y="14" width="2" height="1" fill="#a8b8c8"/><rect x="812" y="14" width="1" height="2" fill="#a8b8c8"/><rect x="816" y="10" width="2" height="2" fill="#9fb0c2"/><rect x="817" y="11" width="2" height="2" fill="#000"/><rect x="816" y="10" width="2" height="1" fill="#a8b8c8"/><rect x="816" y="10" width="1" height="2" fill="#a8b8c8"/><rect x="820" y="6" width="2" height="2" fill="#9fb0c2"/><rect x="821" y="7" width="2" height="2" fill="#000"/><rect x="820" y="6" width="2" height="1" fill="#a8b8c8"/><rect x="820" y="6" width="1" height="2" fill="#a8b8c8"/><rect x="820" y="14" width="2" height="2" fill="#9fb0c2"/><rect x="821" y="15" width="2" height="2" fill="#000"/><rect x="820" y="14" width="2" height="1" fill="#a8b8c8"/><rect x="820" y="14" width="1" height="2" fill="#a8b8c8"/><rect x="824" y="10" width="2" height="2" fill="#9fb0c2"/><rect x="825" y="11" width="2" height="2" fill="#000"/><rect x="824" y="10" width="2" height="1" fill="#a8b8c8"/><rect x="824" y="10" width="1" height="2" fill="#a8b8c8"/><rect x="828" y="6" width="2" height="2" fill="#9fb0c2"/><rect x="829" y="7" width="2" height="2" fill="#000"/><rect x="828" y="6" width="2" height="1" fill="#a8b8c8"/><rect x="828" y="6" width="1" height="2" fill="#a8b8c8"/><rect x="828" y="14" width="2" height="2" fill="#9fb0c2"/><rect x="829" y="15" width="2" height="2" fill="#000"/><rect x="828" y="14" width="2" height="1" fill="#a8b8c8"/><rect x="828" y="14" width="1" height="2" fill="#a8b8c8"/><rect x="832" y="10" width="2" height="2" fill="#9fb0c2"/><rect x="833" y="11" width="2" height="2" fill="#000"/><rect x="832" y="10" width="2" height="1" fill="#a8b8c8"/><rect x="832" y="10" width="1" height="2" fill="#a8b8c8"/><rect x="836" y="6" width="2" height="2" fill="#9fb0c2"/><rect x="837" y="7" width="2" height="2" fill="#000"/><rect x="836" y="6" width="2" height="1" fill="#a8b8c8"/><rect x="836" y="6" width="1" height="2" fill="#a8b8c8"/><rect x="836" y="14" width="2" height="2" fill="#9fb0c2"/><rect x="837" y="15" width="2" height="2" fill="#000"/><rect x="836" y="14" width="2" height="1" fill="#a8b8c8"/><rect x="836" y="14" width="1" height="2" fill="#a8b8c8"/><rect x="840" y="10" width="2" height="2" fill="#9fb0c2"/><rect x="841" y="11" width="2" height="2" fill="#000"/><rect x="840" y="10" width="2" height="1" fill="#a8b8c8"/><rect x="840" y="10" width="1" height="2" fill="#a8b8c8"/><rect x="844" y="6" width="2" height="2" fill="#9fb0c2"/><rect x="845" y="7" width="2" height="2" fill="#000"/><rect x="844" y="6" width="2" height="1" fill="#a8b8c8"/><rect x="844" y="6" width="1" height="2" fill="#a8b8c8"/><rect x="844" y="14" width="2" height="2" fill="#9fb0c2"/><rect x="845" y="15" width="2" height="2" fill="#000"/><rect x="844" y="14" width="2" height="1" fill="#a8b8c8"/><rect x="844" y="14" width="1" height="2" fill="#a8b8c8"/><rect x="848" y="10" width="2" height="2" fill="#9fb0c2"/><rect x="849" y="11" width="2" height="2" fill="#000"/><rect x="848" y="10" width="2" height="1" fill="#a8b8c8"/><rect x="848" y="10" width="1" height="2" fill="#a8b8c8"/><rect x="852" y="6" width="2" height="2" fill="#9fb0c2"/><rect x="853" y="7" width="2" height="2" fill="#000"/><rect x="852" y="6" width="2" height="1" fill="#a8b8c8"/><rect x="852" y="6" width="1" height="2" fill="#a8b8c8"/><rect x="852" y="14" width="2" height="2" fill="#9fb0c2"/><rect x="853" y="15" width="2" height="2" fill="#000"/><rect x="852" y="14" width="2" height="1" fill="#a8b8c8"/><rect x="852" y="14" width="1" height="2" fill="#a8b8c8"/><rect x="856" y="10" width="2" height="2" fill="#9fb0c2"/><rect x="857" y="11" width="2" height="2" fill="#000"/><rect x="856" y="10" width="2" height="1" fill="#a8b8c8"/><rect x="856" y="10" width="1" height="2" fill="#a8b8c8"/><rect x="860" y="6" width="2" height="2" fill="#9fb0c2"/><rect x="861" y="7" width="2" height="2" fill="#000"/><rect x="860" y="6" width="2" height="1" fill="#a8b8c8"/><rect x="860" y="6" width="1" height="2" fill="#a8b8c8"/><rect x="860" y="14" width="2" height="2" fill="#9fb0c2"/><rect x="861" y="15" width="2" height="2" fill="#000"/><rect x="860" y="14" width="2" height="1" fill="#a8b8c8"/><rect x="860" y="14" width="1" height="2" fill="#a8b8c8"/><rect x="864" y="10" width="2" height="2" fill="#9fb0c2"/><rect x="865" y="11" width="2" height="2" fill="#000"/><rect x="864" y="10" width="2" height="1" fill="#a8b8c8"/><rect x="864" y="10" width="1" height="2" fill="#a8b8c8"/><rect x="868" y="6" width="2" height="2" fill="#9fb0c2"/><rect x="869" y="7" width="2" height="2" fill="#000"/><rect x="868" y="6" width="2" height="1" fill="#a8b8c8"/><rect x="868" y="6" width="1" height="2" fill="#a8b8c8"/><rect x="868" y="14" width="2" height="2" fill="#9fb0c2"/><rect x="869" y="15" width="2" height="2" fill="#000"/><rect x="868" y="14" width="2" height="1" fill="#a8b8c8"/><rect x="868" y="14" width="1" height="2" fill="#a8b8c8"/><rect x="872" y="10" width="2" height="2" fill="#9fb0c2"/><rect x="873" y="11" width="2" height="2" fill="#000"/><rect x="872" y="10" width="2" height="1" fill="#a8b8c8"/><rect x="872" y="10" width="1" height="2" fill="#a8b8c8"/><rect x="876" y="6" width="2" height="2" fill="#9fb0c2"/><rect x="877" y="7" width="2" height="2" fill="#000"/><rect x="876" y="6" width="2" height="1" fill="#a8b8c8"/><rect x="876" y="6" width="1" height="2" fill="#a8b8c8"/><rect x="876" y="14" width="2" height="2" fill="#9fb0c2"/><rect x="877" y="15" width="2" height="2" fill="#000"/><rect x="876" y="14" width="2" height="1" fill="#a8b8c8"/><rect x="876" y="14" width="1" height="2" fill="#a8b8c8"/><rect x="880" y="10" width="2" height="2" fill="#9fb0c2"/><rect x="881" y="11" width="2" height="2" fill="#000"/><rect x="880" y="10" width="2" height="1" fill="#a8b8c8"/><rect x="880" y="10" width="1" height="2" fill="#a8b8c8"/><rect x="884" y="6" width="2" height="2" fill="#9fb0c2"/><rect x="885" y="7" width="2" height="2" fill="#000"/><rect x="884" y="6" width="2" height="1" fill="#a8b8c8"/><rect x="884" y="6" width="1" height="2" fill="#a8b8c8"/><rect x="884" y="14" width="2" height="2" fill="#9fb0c2"/><rect x="885" y="15" width="2" height="2" fill="#000"/><rect x="884" y="14" width="2" height="1" fill="#a8b8c8"/><rect x="884" y="14" width="1" height="2" fill="#a8b8c8"/><rect x="888" y="10" width="2" height="2" fill="#9fb0c2"/><rect x="889" y="11" width="2" height="2" fill="#000"/><rect x="888" y="10" width="2" height="1" fill="#a8b8c8"/><rect x="888" y="10" width="1" height="2" fill="#a8b8c8"/><rect x="892" y="6" width="2" height="2" fill="#9fb0c2"/><rect x="893" y="7" width="2" height="2" fill="#000"/><rect x="892" y="6" width="2" height="1" fill="#a8b8c8"/><rect x="892" y="6" width="1" height="2" fill="#a8b8c8"/><rect x="892" y="14" width="2" height="2" fill="#9fb0c2"/><rect x="893" y="15" width="2" height="2" fill="#000"/><rect x="892" y="14" width="2" height="1" fill="#a8b8c8"/><rect x="892" y="14" width="1" height="2" fill="#a8b8c8"/><rect x="896" y="10" width="2" height="2" fill="#9fb0c2"/><rect x="897" y="11" width="2" height="2" fill="#000"/><rect x="896" y="10" width="2" height="1" fill="#a8b8c8"/><rect x="896" y="10" width="1" height="2" fill="#a8b8c8"/><rect x="900" y="6" width="2" height="2" fill="#9fb0c2"/><rect x="901" y="7" width="2" height="2" fill="#000"/><rect x="900" y="6" width="2" height="1" fill="#a8b8c8"/><rect x="900" y="6" width="1" height="2" fill="#a8b8c8"/><rect x="900" y="14" width="2" height="2" fill="#9fb0c2"/><rect x="901" y="15" width="2" height="2" fill="#000"/><rect x="900" y="14" width="2" height="1" fill="#a8b8c8"/><rect x="900" y="14" width="1" height="2" fill="#a8b8c8"/><rect x="904" y="10" width="2" height="2" fill="#9fb0c2"/><rect x="905" y="11" width="2" height="2" fill="#000"/><rect x="904" y="10" width="2" height="1" fill="#a8b8c8"/><rect x="904" y="10" width="1" height="2" fill="#a8b8c8"/><rect x="908" y="6" width="2" height="2" fill="#9fb0c2"/><rect x="909" y="7" width="2" height="2" fill="#000"/><rect x="908" y="6" width="2" height="1" fill="#a8b8c8"/><rect x="908" y="6" width="1" height="2" fill="#a8b8c8"/><rect x="908" y="14" width="2" height="2" fill="#9fb0c2"/><rect x="909" y="15" width="2" height="2" fill="#000"/><rect x="908" y="14" width="2" height="1" fill="#a8b8c8"/><rect x="908" y="14" width="1" height="2" fill="#a8b8c8"/><rect x="912" y="10" width="2" height="2" fill="#9fb0c2"/><rect x="913" y="11" width="2" height="2" fill="#000"/><rect x="912" y="10" width="2" height="1" fill="#a8b8c8"/><rect x="912" y="10" width="1" height="2" fill="#a8b8c8"/><rect x="916" y="6" width="2" height="2" fill="#9fb0c2"/><rect x="917" y="7" width="2" height="2" fill="#000"/><rect x="916" y="6" width="2" height="1" fill="#a8b8c8"/><rect x="916" y="6" width="1" height="2" fill="#a8b8c8"/><rect x="916" y="14" width="2" height="2" fill="#9fb0c2"/><rect x="917" y="15" width="2" height="2" fill="#000"/><rect x="916" y="14" width="2" height="1" fill="#a8b8c8"/><rect x="916" y="14" width="1" height="2" fill="#a8b8c8"/><rect x="920" y="10" width="2" height="2" fill="#9fb0c2"/><rect x="921" y="11" width="2" height="2" fill="#000"/><rect x="920" y="10" width="2" height="1" fill="#a8b8c8"/><rect x="920" y="10" width="1" height="2" fill="#a8b8c8"/><rect x="924" y="6" width="2" height="2" fill="#9fb0c2"/><rect x="925" y="7" width="2" height="2" fill="#000"/><rect x="924" y="6" width="2" height="1" fill="#a8b8c8"/><rect x="924" y="6" width="1" height="2" fill="#a8b8c8"/><rect x="924" y="14" width="2" height="2" fill="#9fb0c2"/><rect x="925" y="15" width="2" height="2" fill="#000"/><rect x="924" y="14" width="2" height="1" fill="#a8b8c8"/><rect x="924" y="14" width="1" height="2" fill="#a8b8c8"/><rect x="928" y="10" width="2" height="2" fill="#9fb0c2"/><rect x="929" y="11" width="2" height="2" fill="#000"/><rect x="928" y="10" width="2" height="1" fill="#a8b8c8"/><rect x="928" y="10" width="1" height="2" fill="#a8b8c8"/><rect x="932" y="6" width="2" height="2" fill="#9fb0c2"/><rect x="933" y="7" width="2" height="2" fill="#000"/><rect x="932" y="6" width="2" height="1" fill="#a8b8c8"/><rect x="932" y="6" width="1" height="2" fill="#a8b8c8"/><rect x="932" y="14" width="2" height="2" fill="#9fb0c2"/><rect x="933" y="15" width="2" height="2" fill="#000"/><rect x="932" y="14" width="2" height="1" fill="#a8b8c8"/><rect x="932" y="14" width="1" height="2" fill="#a8b8c8"/></svg>
<svg class="ic" style="left:4px;top:1px" width="18" height="20" viewBox="0 0 18 20">
<path d="M2 2 H9 V8 H15 V18 H2 Z" fill="#2e90d8"/>
<polygon points="10,2 15,7 10,7" fill="#2e90d8"/>
<path d="M8 9.8 A2.7 2.7 0 0 0 8 15.2 Z" fill="#fff"/>
<rect x="4" y="12" width="2" height="1.2" fill="#fff"/>
<rect x="6.6" y="8.8" width="1.4" height="1.6" fill="#fff"/><rect x="6.6" y="14.6" width="1.4" height="1.6" fill="#fff"/>
<path d="M4.8 10.2 L6 11 M4.8 14.8 L6 14" stroke="#fff" stroke-width="1.2"/>
<circle cx="7.3" cy="12.5" r="0.8" fill="#2e90d8"/>
<polygon points="9.2,10 13,12.5 9.2,15" fill="#fff"/>
</svg>
<div class="t" style="left:22px;top:5px;font-size:12.9px;color:#fff;line-height:14px">Produktionsschlüssel</div>
<div class="t" style="left:151px;top:5px;font-size:12.1px;color:#fff;line-height:14px">[REFLEX / 02.06.2021 / Reflex 3 Möbel Messe]</div>
<svg class="ic" style="left:944px;top:4px" width="46" height="14" viewBox="0 0 46 14">
<rect x="2" y="10" width="9" height="1.8" fill="#ece8e4"/>
<path d="M11.8 2.4 L6.6 7.6" stroke="#ece8e4" stroke-width="1.5" fill="none"/>
<path d="M6.5 3.8 V8.3 H10.5" stroke="#ece8e4" stroke-width="1.5" fill="none"/>
<path d="M17.8 2.4 H27.6 V11.8" stroke="#d8d4d0" stroke-width="1.3" fill="none"/>
<path d="M18.4 11.8 L24 6" stroke="#ece8e4" stroke-width="1.5" fill="none"/>
<path d="M20.4 5.4 H24.4 V9.6" stroke="#ece8e4" stroke-width="1.5" fill="none"/>
<path d="M34.2 2.4 L43.4 11.6 M43.4 2.4 L34.2 11.6" stroke="#ece8e4" stroke-width="1.6"/>
</svg>
<div class="t" style="left:35px;top:29.7px;font-size:11px;color:#000;">Mandant</div>
<div class="a" style="left:85px;top:29px;width:129px;height:14px;border:1px solid #7088a8;border-radius:2px;box-shadow:inset 1px 1px 0 #aabbd0;background:#fff"></div>
<div class="t" style="left:89px;top:31px;font-size:9.5px;line-height:11px">Walter</div>
<div class="a" style="left:201px;top:31px;width:12px;height:12px;background:#cfcfcf"></div>
<svg class="ic" style="left:204px;top:37px" width="9" height="5"><polygon points="0,0 8,0 4,4" fill="#5b7aa0"/></svg>
<div class="b" style="left:893px;top:28px;width:87px;padding-right:2px;height:18px;line-height:18px;">Drucken</div>
<div class="a" style="left:4px;top:50px;width:985px;height:1px;background:#9a9a9a"></div>
<div class="t" style="left:16px;top:52.7px;font-size:11px;color:#000;">Prod.Schl.</div>
<div class="t" style="left:125px;top:52.7px;font-size:11px;color:#000;">Bezeichnung</div>
<div class="t" style="left:103px;top:66.7px;font-size:11px;color:#000;">Produktionsart</div>
<div class="t" style="left:263px;top:52.7px;font-size:11px;color:#000;">Lieferung aus</div>
<div class="t" style="left:395px;top:52.7px;font-size:11px;color:#000;">Fertigwarenlager</div>
<div class="t" style="left:395px;top:66.7px;font-size:11px;color:#000;">Stellplatz</div>
<div class="t" style="left:939px;top:67.7px;font-size:11px;color:#000;">Aktiv</div>
<div class="f" style="left:17px;top:82px;width:33px;height:18px;background:#e6ffff;line-height:15px;padding-left:1px;"></div>
<div class="f" style="left:51px;top:82px;width:212px;height:18px;background:#e6ffff;line-height:15px;padding-left:1px;">Eigenproduktion Wima</div>
<div class="f" style="left:264px;top:82px;width:32px;height:18px;background:#e6ffff;line-height:15px;padding-left:1px;">35</div>
<div class="f" style="left:297px;top:82px;width:79px;height:18px;background:#e6ffff;line-height:15px;padding-left:1px;">Ungarn 2</div>
<svg class="ic" style="left:379px;top:84px" width="16" height="16" viewBox="0 0 16 16" shape-rendering="crispEdges">
<rect x="0" y="0" width="16" height="16" rx="1" fill="#c9c5c9"/>
<rect x="0" y="0" width="16" height="1" fill="#e6dede"/><rect x="0" y="0" width="1" height="16" fill="#e0dada"/>
<rect x="15" y="0" width="1" height="16" fill="#6584a4"/><rect x="0" y="15" width="16" height="1" fill="#6584a4"/>
<rect x="2" y="2" width="8" height="7" fill="#fff"/><rect x="1" y="1" width="9" height="1" fill="#1d6b9c"/><rect x="9" y="1" width="1" height="1" fill="#000"/>
<rect x="1" y="1" width="1" height="8" fill="#1d6b9c"/><rect x="1" y="8" width="2" height="1" fill="#000"/>
<rect x="3" y="3" width="11" height="2" fill="#000"/>
<rect x="3" y="5" width="1" height="8" fill="#000"/>
<rect x="3" y="13" width="11" height="1" fill="#1d6b9c"/>
<rect x="13" y="5" width="1" height="8" fill="#1d6b9c"/>
<rect x="4" y="5" width="9" height="8" fill="#fff"/>
<polygon points="5,6.5 7.2,8.2 5,10" fill="#0000ff" shape-rendering="auto"/>
<rect x="8" y="6" width="2" height="1" fill="#ff0000"/><rect x="8" y="8" width="2" height="1" fill="#ff0000"/><rect x="8" y="10" width="2" height="1" fill="#ff0000"/>
<rect x="11" y="6" width="1" height="2" fill="#000"/><rect x="11" y="8" width="1" height="4" fill="#d8d8d8"/>
</svg>
<div class="f" style="left:396px;top:82px;width:32px;height:18px;background:#e6ffff;line-height:15px;padding-left:1px;">1</div>
<div class="f" style="left:429px;top:82px;width:146px;height:18px;background:#e6ffff;line-height:15px;padding-left:1px;">Zentrallager</div>
<svg class="ic" style="left:578px;top:84px" width="16" height="16" viewBox="0 0 16 16" shape-rendering="crispEdges">
<rect x="0" y="0" width="16" height="16" rx="1" fill="#c9c5c9"/>
<rect x="0" y="0" width="16" height="1" fill="#e6dede"/><rect x="0" y="0" width="1" height="16" fill="#e0dada"/>
<rect x="15" y="0" width="1" height="16" fill="#6584a4"/><rect x="0" y="15" width="16" height="1" fill="#6584a4"/>
<rect x="2" y="2" width="8" height="7" fill="#fff"/><rect x="1" y="1" width="9" height="1" fill="#1d6b9c"/><rect x="9" y="1" width="1" height="1" fill="#000"/>
<rect x="1" y="1" width="1" height="8" fill="#1d6b9c"/><rect x="1" y="8" width="2" height="1" fill="#000"/>
<rect x="3" y="3" width="11" height="2" fill="#000"/>
<rect x="3" y="5" width="1" height="8" fill="#000"/>
<rect x="3" y="13" width="11" height="1" fill="#1d6b9c"/>
<rect x="13" y="5" width="1" height="8" fill="#1d6b9c"/>
<rect x="4" y="5" width="9" height="8" fill="#fff"/>
<polygon points="5,6.5 7.2,8.2 5,10" fill="#0000ff" shape-rendering="auto"/>
<rect x="8" y="6" width="2" height="1" fill="#ff0000"/><rect x="8" y="8" width="2" height="1" fill="#ff0000"/><rect x="8" y="10" width="2" height="1" fill="#ff0000"/>
<rect x="11" y="6" width="1" height="2" fill="#000"/><rect x="11" y="8" width="1" height="4" fill="#d8d8d8"/>
</svg>
<div class="b" style="left:597px;top:84px;width:88px;padding-right:2px;height:15px;line-height:17px;">Stellplatz suchen</div>
<div class="b" style="left:690px;top:84px;width:74px;padding-right:2px;height:15px;line-height:17px;">Cutter</div>
<div class="b" style="left:770px;top:84px;width:75px;padding-right:2px;height:15px;line-height:17px;">FIBU</div>
<div class="b" style="left:850px;top:84px;width:75px;padding-right:2px;height:15px;line-height:17px;">Hierarchie</div>
<div class="a" style="left:941px;top:85px;width:10px;height:10px;border-left:1px solid #1c2b40;border-top:1px solid #1c2b40;background:transparent"></div>
<svg class="ic" style="left:942px;top:86px" width="12" height="11" viewBox="0 0 12 11"><path d="M1.5 4.2 L4.2 7.8 L9.6 1.8" stroke="#1c2b40" stroke-width="2.4" fill="none"/></svg>
<div class="f" style="left:104px;top:101px;width:32px;height:18px;background:#e6ffff;line-height:15px;padding-left:1px;">1</div>
<div class="f" style="left:137px;top:101px;width:239px;height:18px;background:#e6ffff;line-height:15px;padding-left:1px;">Vollständige Produktion</div>
<svg class="ic" style="left:379px;top:103px" width="16" height="16" viewBox="0 0 16 16" shape-rendering="crispEdges">
<rect x="0" y="0" width="16" height="16" rx="1" fill="#c9c5c9"/>
<rect x="0" y="0" width="16" height="1" fill="#e6dede"/><rect x="0" y="0" width="1" height="16" fill="#e0dada"/>
<rect x="15" y="0" width="1" height="16" fill="#6584a4"/><rect x="0" y="15" width="16" height="1" fill="#6584a4"/>
<rect x="2" y="2" width="8" height="7" fill="#fff"/><rect x="1" y="1" width="9" height="1" fill="#1d6b9c"/><rect x="9" y="1" width="1" height="1" fill="#000"/>
<rect x="1" y="1" width="1" height="8" fill="#1d6b9c"/><rect x="1" y="8" width="2" height="1" fill="#000"/>
<rect x="3" y="3" width="11" height="2" fill="#000"/>
<rect x="3" y="5" width="1" height="8" fill="#000"/>
<rect x="3" y="13" width="11" height="1" fill="#1d6b9c"/>
<rect x="13" y="5" width="1" height="8" fill="#1d6b9c"/>
<rect x="4" y="5" width="9" height="8" fill="#fff"/>
<polygon points="5,6.5 7.2,8.2 5,10" fill="#0000ff" shape-rendering="auto"/>
<rect x="8" y="6" width="2" height="1" fill="#ff0000"/><rect x="8" y="8" width="2" height="1" fill="#ff0000"/><rect x="8" y="10" width="2" height="1" fill="#ff0000"/>
<rect x="11" y="6" width="1" height="2" fill="#000"/><rect x="11" y="8" width="1" height="4" fill="#d8d8d8"/>
</svg>
<div class="f" style="left:396px;top:101px;width:32px;height:18px;background:#e6ffff;line-height:15px;padding-left:1px;">1</div>
<div class="f" style="left:429px;top:101px;width:239px;height:18px;background:#e6ffff;line-height:15px;padding-left:1px;">1. Halle / 1. Platz</div>
<svg class="ic" style="left:671px;top:103px" width="16" height="16" viewBox="0 0 16 16" shape-rendering="crispEdges">
<rect x="0" y="0" width="16" height="16" rx="1" fill="#c9c5c9"/>
<rect x="0" y="0" width="16" height="1" fill="#e6dede"/><rect x="0" y="0" width="1" height="16" fill="#e0dada"/>
<rect x="15" y="0" width="1" height="16" fill="#6584a4"/><rect x="0" y="15" width="16" height="1" fill="#6584a4"/>
<rect x="2" y="2" width="8" height="7" fill="#fff"/><rect x="1" y="1" width="9" height="1" fill="#1d6b9c"/><rect x="9" y="1" width="1" height="1" fill="#000"/>
<rect x="1" y="1" width="1" height="8" fill="#1d6b9c"/><rect x="1" y="8" width="2" height="1" fill="#000"/>
<rect x="3" y="3" width="11" height="2" fill="#000"/>
<rect x="3" y="5" width="1" height="8" fill="#000"/>
<rect x="3" y="13" width="11" height="1" fill="#1d6b9c"/>
<rect x="13" y="5" width="1" height="8" fill="#1d6b9c"/>
<rect x="4" y="5" width="9" height="8" fill="#fff"/>
<polygon points="5,6.5 7.2,8.2 5,10" fill="#0000ff" shape-rendering="auto"/>
<rect x="8" y="6" width="2" height="1" fill="#ff0000"/><rect x="8" y="8" width="2" height="1" fill="#ff0000"/><rect x="8" y="10" width="2" height="1" fill="#ff0000"/>
<rect x="11" y="6" width="1" height="2" fill="#000"/><rect x="11" y="8" width="1" height="4" fill="#d8d8d8"/>
</svg>
<div class="b" style="left:690px;top:103px;width:74px;padding-right:2px;height:15px;line-height:17px;">Druck</div>
<div class="b" style="left:770px;top:103px;width:75px;padding-right:2px;height:15px;line-height:17px;">ProdNr Regel</div>
<div class="b" style="left:850px;top:103px;width:75px;padding-right:2px;height:15px;line-height:17px;">Relev.Merkmal</div>
<div class="f" style="left:17px;top:122px;width:33px;height:18px;background:#fff;line-height:15px;padding-left:1px;"></div>
<div class="f" style="left:51px;top:122px;width:212px;height:18px;background:#fff;line-height:15px;padding-left:1px;"></div>
<div class="f" style="left:264px;top:122px;width:32px;height:18px;background:#fff;line-height:15px;padding-left:1px;"></div>
<div class="f" style="left:297px;top:122px;width:79px;height:18px;background:#fff;line-height:15px;padding-left:1px;"></div>
<svg class="ic" style="left:379px;top:124px" width="16" height="16" viewBox="0 0 16 16" shape-rendering="crispEdges">
<rect x="0" y="0" width="16" height="16" rx="1" fill="#c9c5c9"/>
<rect x="0" y="0" width="16" height="1" fill="#e6dede"/><rect x="0" y="0" width="1" height="16" fill="#e0dada"/>
<rect x="15" y="0" width="1" height="16" fill="#6584a4"/><rect x="0" y="15" width="16" height="1" fill="#6584a4"/>
<rect x="2" y="2" width="8" height="7" fill="#fff"/><rect x="1" y="1" width="9" height="1" fill="#8e8e8e"/><rect x="9" y="1" width="1" height="1" fill="#808080"/>
<rect x="1" y="1" width="1" height="8" fill="#8e8e8e"/><rect x="1" y="8" width="2" height="1" fill="#808080"/>
<rect x="3" y="3" width="11" height="2" fill="#808080"/>
<rect x="3" y="5" width="1" height="8" fill="#808080"/>
<rect x="3" y="13" width="11" height="1" fill="#8e8e8e"/>
<rect x="13" y="5" width="1" height="8" fill="#8e8e8e"/>
<rect x="4" y="5" width="9" height="8" fill="#fff"/>
<polygon points="5,6.5 7.2,8.2 5,10" fill="#a0a0a0" shape-rendering="auto"/>
<rect x="8" y="6" width="2" height="1" fill="#909090"/><rect x="8" y="8" width="2" height="1" fill="#909090"/><rect x="8" y="10" width="2" height="1" fill="#909090"/>
<rect x="11" y="6" width="1" height="2" fill="#808080"/><rect x="11" y="8" width="1" height="4" fill="#d8d8d8"/>
</svg>
<div class="f" style="left:396px;top:122px;width:32px;height:18px;background:#fff;line-height:15px;padding-left:1px;"></div>
<div class="f" style="left:429px;top:122px;width:146px;height:18px;background:#fff;line-height:15px;padding-left:1px;"></div>
<svg class="ic" style="left:578px;top:124px" width="16" height="16" viewBox="0 0 16 16" shape-rendering="crispEdges">
<rect x="0" y="0" width="16" height="16" rx="1" fill="#c9c5c9"/>
<rect x="0" y="0" width="16" height="1" fill="#e6dede"/><rect x="0" y="0" width="1" height="16" fill="#e0dada"/>
<rect x="15" y="0" width="1" height="16" fill="#6584a4"/><rect x="0" y="15" width="16" height="1" fill="#6584a4"/>
<rect x="2" y="2" width="8" height="7" fill="#fff"/><rect x="1" y="1" width="9" height="1" fill="#8e8e8e"/><rect x="9" y="1" width="1" height="1" fill="#808080"/>
<rect x="1" y="1" width="1" height="8" fill="#8e8e8e"/><rect x="1" y="8" width="2" height="1" fill="#808080"/>
<rect x="3" y="3" width="11" height="2" fill="#808080"/>
<rect x="3" y="5" width="1" height="8" fill="#808080"/>
<rect x="3" y="13" width="11" height="1" fill="#8e8e8e"/>
<rect x="13" y="5" width="1" height="8" fill="#8e8e8e"/>
<rect x="4" y="5" width="9" height="8" fill="#fff"/>
<polygon points="5,6.5 7.2,8.2 5,10" fill="#a0a0a0" shape-rendering="auto"/>
<rect x="8" y="6" width="2" height="1" fill="#909090"/><rect x="8" y="8" width="2" height="1" fill="#909090"/><rect x="8" y="10" width="2" height="1" fill="#909090"/>
<rect x="11" y="6" width="1" height="2" fill="#808080"/><rect x="11" y="8" width="1" height="4" fill="#d8d8d8"/>
</svg>
<div class="b d" style="left:597px;top:124px;width:88px;padding-right:2px;height:15px;line-height:17px;">Stellplatz suchen</div>
<div class="b d" style="left:690px;top:124px;width:74px;padding-right:2px;height:15px;line-height:17px;">Cutter</div>
<div class="b d" style="left:770px;top:124px;width:75px;padding-right:2px;height:15px;line-height:17px;">FIBU</div>
<div class="b d" style="left:850px;top:124px;width:75px;padding-right:2px;height:15px;line-height:17px;">Hierarchie</div>
<div class="a" style="left:941px;top:125px;width:10px;height:10px;border-left:1px solid #1c2b40;border-top:1px solid #1c2b40;background:#cbcbcb"></div>
<div class="f" style="left:104px;top:141px;width:32px;height:18px;background:#fff;line-height:15px;padding-left:1px;"></div>
<div class="f" style="left:137px;top:141px;width:239px;height:18px;background:#fff;line-height:15px;padding-left:1px;"></div>
<svg class="ic" style="left:379px;top:143px" width="16" height="16" viewBox="0 0 16 16" shape-rendering="crispEdges">
<rect x="0" y="0" width="16" height="16" rx="1" fill="#c9c5c9"/>
<rect x="0" y="0" width="16" height="1" fill="#e6dede"/><rect x="0" y="0" width="1" height="16" fill="#e0dada"/>
<rect x="15" y="0" width="1" height="16" fill="#6584a4"/><rect x="0" y="15" width="16" height="1" fill="#6584a4"/>
<rect x="2" y="2" width="8" height="7" fill="#fff"/><rect x="1" y="1" width="9" height="1" fill="#8e8e8e"/><rect x="9" y="1" width="1" height="1" fill="#808080"/>
<rect x="1" y="1" width="1" height="8" fill="#8e8e8e"/><rect x="1" y="8" width="2" height="1" fill="#808080"/>
<rect x="3" y="3" width="11" height="2" fill="#808080"/>
<rect x="3" y="5" width="1" height="8" fill="#808080"/>
<rect x="3" y="13" width="11" height="1" fill="#8e8e8e"/>
<rect x="13" y="5" width="1" height="8" fill="#8e8e8e"/>
<rect x="4" y="5" width="9" height="8" fill="#fff"/>
<polygon points="5,6.5 7.2,8.2 5,10" fill="#a0a0a0" shape-rendering="auto"/>
<rect x="8" y="6" width="2" height="1" fill="#909090"/><rect x="8" y="8" width="2" height="1" fill="#909090"/><rect x="8" y="10" width="2" height="1" fill="#909090"/>
<rect x="11" y="6" width="1" height="2" fill="#808080"/><rect x="11" y="8" width="1" height="4" fill="#d8d8d8"/>
</svg>
<div class="f" style="left:396px;top:141px;width:32px;height:18px;background:#fff;line-height:15px;padding-left:1px;"></div>
<div class="f" style="left:429px;top:141px;width:239px;height:18px;background:#fff;line-height:15px;padding-left:1px;"></div>
<svg class="ic" style="left:671px;top:143px" width="16" height="16" viewBox="0 0 16 16" shape-rendering="crispEdges">
<rect x="0" y="0" width="16" height="16" rx="1" fill="#c9c5c9"/>
<rect x="0" y="0" width="16" height="1" fill="#e6dede"/><rect x="0" y="0" width="1" height="16" fill="#e0dada"/>
<rect x="15" y="0" width="1" height="16" fill="#6584a4"/><rect x="0" y="15" width="16" height="1" fill="#6584a4"/>
<rect x="2" y="2" width="8" height="7" fill="#fff"/><rect x="1" y="1" width="9" height="1" fill="#8e8e8e"/><rect x="9" y="1" width="1" height="1" fill="#808080"/>
<rect x="1" y="1" width="1" height="8" fill="#8e8e8e"/><rect x="1" y="8" width="2" height="1" fill="#808080"/>
<rect x="3" y="3" width="11" height="2" fill="#808080"/>
<rect x="3" y="5" width="1" height="8" fill="#808080"/>
<rect x="3" y="13" width="11" height="1" fill="#8e8e8e"/>
<rect x="13" y="5" width="1" height="8" fill="#8e8e8e"/>
<rect x="4" y="5" width="9" height="8" fill="#fff"/>
<polygon points="5,6.5 7.2,8.2 5,10" fill="#a0a0a0" shape-rendering="auto"/>
<rect x="8" y="6" width="2" height="1" fill="#909090"/><rect x="8" y="8" width="2" height="1" fill="#909090"/><rect x="8" y="10" width="2" height="1" fill="#909090"/>
<rect x="11" y="6" width="1" height="2" fill="#808080"/><rect x="11" y="8" width="1" height="4" fill="#d8d8d8"/>
</svg>
<div class="b d" style="left:690px;top:143px;width:74px;padding-right:2px;height:15px;line-height:17px;">Druck</div>
<div class="b d" style="left:770px;top:143px;width:75px;padding-right:2px;height:15px;line-height:17px;">ProdNr Regel</div>
<div class="b d" style="left:850px;top:143px;width:75px;padding-right:2px;height:15px;line-height:17px;">Relev.Merkmal</div>
<div class="f" style="left:17px;top:162px;width:33px;height:18px;background:#fff;line-height:15px;padding-left:1px;"></div>
<div class="f" style="left:51px;top:162px;width:212px;height:18px;background:#fff;line-height:15px;padding-left:1px;"></div>
<div class="f" style="left:264px;top:162px;width:32px;height:18px;background:#fff;line-height:15px;padding-left:1px;"></div>
<div class="f" style="left:297px;top:162px;width:79px;height:18px;background:#fff;line-height:15px;padding-left:1px;"></div>
<svg class="ic" style="left:379px;top:164px" width="16" height="16" viewBox="0 0 16 16" shape-rendering="crispEdges">
<rect x="0" y="0" width="16" height="16" rx="1" fill="#c9c5c9"/>
<rect x="0" y="0" width="16" height="1" fill="#e6dede"/><rect x="0" y="0" width="1" height="16" fill="#e0dada"/>
<rect x="15" y="0" width="1" height="16" fill="#6584a4"/><rect x="0" y="15" width="16" height="1" fill="#6584a4"/>
<rect x="2" y="2" width="8" height="7" fill="#fff"/><rect x="1" y="1" width="9" height="1" fill="#8e8e8e"/><rect x="9" y="1" width="1" height="1" fill="#808080"/>
<rect x="1" y="1" width="1" height="8" fill="#8e8e8e"/><rect x="1" y="8" width="2" height="1" fill="#808080"/>
<rect x="3" y="3" width="11" height="2" fill="#808080"/>
<rect x="3" y="5" width="1" height="8" fill="#808080"/>
<rect x="3" y="13" width="11" height="1" fill="#8e8e8e"/>
<rect x="13" y="5" width="1" height="8" fill="#8e8e8e"/>
<rect x="4" y="5" width="9" height="8" fill="#fff"/>
<polygon points="5,6.5 7.2,8.2 5,10" fill="#a0a0a0" shape-rendering="auto"/>
<rect x="8" y="6" width="2" height="1" fill="#909090"/><rect x="8" y="8" width="2" height="1" fill="#909090"/><rect x="8" y="10" width="2" height="1" fill="#909090"/>
<rect x="11" y="6" width="1" height="2" fill="#808080"/><rect x="11" y="8" width="1" height="4" fill="#d8d8d8"/>
</svg>
<div class="f" style="left:396px;top:162px;width:32px;height:18px;background:#fff;line-height:15px;padding-left:1px;"></div>
<div class="f" style="left:429px;top:162px;width:146px;height:18px;background:#fff;line-height:15px;padding-left:1px;"></div>
<svg class="ic" style="left:578px;top:164px" width="16" height="16" viewBox="0 0 16 16" shape-rendering="crispEdges">
<rect x="0" y="0" width="16" height="16" rx="1" fill="#c9c5c9"/>
<rect x="0" y="0" width="16" height="1" fill="#e6dede"/><rect x="0" y="0" width="1" height="16" fill="#e0dada"/>
<rect x="15" y="0" width="1" height="16" fill="#6584a4"/><rect x="0" y="15" width="16" height="1" fill="#6584a4"/>
<rect x="2" y="2" width="8" height="7" fill="#fff"/><rect x="1" y="1" width="9" height="1" fill="#8e8e8e"/><rect x="9" y="1" width="1" height="1" fill="#808080"/>
<rect x="1" y="1" width="1" height="8" fill="#8e8e8e"/><rect x="1" y="8" width="2" height="1" fill="#808080"/>
<rect x="3" y="3" width="11" height="2" fill="#808080"/>
<rect x="3" y="5" width="1" height="8" fill="#808080"/>
<rect x="3" y="13" width="11" height="1" fill="#8e8e8e"/>
<rect x="13" y="5" width="1" height="8" fill="#8e8e8e"/>
<rect x="4" y="5" width="9" height="8" fill="#fff"/>
<polygon points="5,6.5 7.2,8.2 5,10" fill="#a0a0a0" shape-rendering="auto"/>
<rect x="8" y="6" width="2" height="1" fill="#909090"/><rect x="8" y="8" width="2" height="1" fill="#909090"/><rect x="8" y="10" width="2" height="1" fill="#909090"/>
<rect x="11" y="6" width="1" height="2" fill="#808080"/><rect x="11" y="8" width="1" height="4" fill="#d8d8d8"/>
</svg>
<div class="b d" style="left:597px;top:164px;width:88px;padding-right:2px;height:15px;line-height:17px;">Stellplatz suchen</div>
<div class="b d" style="left:690px;top:164px;width:74px;padding-right:2px;height:15px;line-height:17px;">Cutter</div>
<div class="b d" style="left:770px;top:164px;width:75px;padding-right:2px;height:15px;line-height:17px;">FIBU</div>
<div class="b d" style="left:850px;top:164px;width:75px;padding-right:2px;height:15px;line-height:17px;">Hierarchie</div>
<div class="a" style="left:941px;top:165px;width:10px;height:10px;border-left:1px solid #1c2b40;border-top:1px solid #1c2b40;background:#cbcbcb"></div>
<div class="f" style="left:104px;top:181px;width:32px;height:18px;background:#fff;line-height:15px;padding-left:1px;"></div>
<div class="f" style="left:137px;top:181px;width:239px;height:18px;background:#fff;line-height:15px;padding-left:1px;"></div>
<svg class="ic" style="left:379px;top:183px" width="16" height="16" viewBox="0 0 16 16" shape-rendering="crispEdges">
<rect x="0" y="0" width="16" height="16" rx="1" fill="#c9c5c9"/>
<rect x="0" y="0" width="16" height="1" fill="#e6dede"/><rect x="0" y="0" width="1" height="16" fill="#e0dada"/>
<rect x="15" y="0" width="1" height="16" fill="#6584a4"/><rect x="0" y="15" width="16" height="1" fill="#6584a4"/>
<rect x="2" y="2" width="8" height="7" fill="#fff"/><rect x="1" y="1" width="9" height="1" fill="#8e8e8e"/><rect x="9" y="1" width="1" height="1" fill="#808080"/>
<rect x="1" y="1" width="1" height="8" fill="#8e8e8e"/><rect x="1" y="8" width="2" height="1" fill="#808080"/>
<rect x="3" y="3" width="11" height="2" fill="#808080"/>
<rect x="3" y="5" width="1" height="8" fill="#808080"/>
<rect x="3" y="13" width="11" height="1" fill="#8e8e8e"/>
<rect x="13" y="5" width="1" height="8" fill="#8e8e8e"/>
<rect x="4" y="5" width="9" height="8" fill="#fff"/>
<polygon points="5,6.5 7.2,8.2 5,10" fill="#a0a0a0" shape-rendering="auto"/>
<rect x="8" y="6" width="2" height="1" fill="#909090"/><rect x="8" y="8" width="2" height="1" fill="#909090"/><rect x="8" y="10" width="2" height="1" fill="#909090"/>
<rect x="11" y="6" width="1" height="2" fill="#808080"/><rect x="11" y="8" width="1" height="4" fill="#d8d8d8"/>
</svg>
<div class="f" style="left:396px;top:181px;width:32px;height:18px;background:#fff;line-height:15px;padding-left:1px;"></div>
<div class="f" style="left:429px;top:181px;width:239px;height:18px;background:#fff;line-height:15px;padding-left:1px;"></div>
<svg class="ic" style="left:671px;top:183px" width="16" height="16" viewBox="0 0 16 16" shape-rendering="crispEdges">
<rect x="0" y="0" width="16" height="16" rx="1" fill="#c9c5c9"/>
<rect x="0" y="0" width="16" height="1" fill="#e6dede"/><rect x="0" y="0" width="1" height="16" fill="#e0dada"/>
<rect x="15" y="0" width="1" height="16" fill="#6584a4"/><rect x="0" y="15" width="16" height="1" fill="#6584a4"/>
<rect x="2" y="2" width="8" height="7" fill="#fff"/><rect x="1" y="1" width="9" height="1" fill="#8e8e8e"/><rect x="9" y="1" width="1" height="1" fill="#808080"/>
<rect x="1" y="1" width="1" height="8" fill="#8e8e8e"/><rect x="1" y="8" width="2" height="1" fill="#808080"/>
<rect x="3" y="3" width="11" height="2" fill="#808080"/>
<rect x="3" y="5" width="1" height="8" fill="#808080"/>
<rect x="3" y="13" width="11" height="1" fill="#8e8e8e"/>
<rect x="13" y="5" width="1" height="8" fill="#8e8e8e"/>
<rect x="4" y="5" width="9" height="8" fill="#fff"/>
<polygon points="5,6.5 7.2,8.2 5,10" fill="#a0a0a0" shape-rendering="auto"/>
<rect x="8" y="6" width="2" height="1" fill="#909090"/><rect x="8" y="8" width="2" height="1" fill="#909090"/><rect x="8" y="10" width="2" height="1" fill="#909090"/>
<rect x="11" y="6" width="1" height="2" fill="#808080"/><rect x="11" y="8" width="1" height="4" fill="#d8d8d8"/>
</svg>
<div class="b d" style="left:690px;top:183px;width:74px;padding-right:2px;height:15px;line-height:17px;">Druck</div>
<div class="b d" style="left:770px;top:183px;width:75px;padding-right:2px;height:15px;line-height:17px;">ProdNr Regel</div>
<div class="b d" style="left:850px;top:183px;width:75px;padding-right:2px;height:15px;line-height:17px;">Relev.Merkmal</div>
<div class="f" style="left:17px;top:202px;width:33px;height:18px;background:#fff;line-height:15px;padding-left:1px;"></div>
<div class="f" style="left:51px;top:202px;width:212px;height:18px;background:#fff;line-height:15px;padding-left:1px;"></div>
<div class="f" style="left:264px;top:202px;width:32px;height:18px;background:#fff;line-height:15px;padding-left:1px;"></div>
<div class="f" style="left:297px;top:202px;width:79px;height:18px;background:#fff;line-height:15px;padding-left:1px;"></div>
<svg class="ic" style="left:379px;top:204px" width="16" height="16" viewBox="0 0 16 16" shape-rendering="crispEdges">
<rect x="0" y="0" width="16" height="16" rx="1" fill="#c9c5c9"/>
<rect x="0" y="0" width="16" height="1" fill="#e6dede"/><rect x="0" y="0" width="1" height="16" fill="#e0dada"/>
<rect x="15" y="0" width="1" height="16" fill="#6584a4"/><rect x="0" y="15" width="16" height="1" fill="#6584a4"/>
<rect x="2" y="2" width="8" height="7" fill="#fff"/><rect x="1" y="1" width="9" height="1" fill="#8e8e8e"/><rect x="9" y="1" width="1" height="1" fill="#808080"/>
<rect x="1" y="1" width="1" height="8" fill="#8e8e8e"/><rect x="1" y="8" width="2" height="1" fill="#808080"/>
<rect x="3" y="3" width="11" height="2" fill="#808080"/>
<rect x="3" y="5" width="1" height="8" fill="#808080"/>
<rect x="3" y="13" width="11" height="1" fill="#8e8e8e"/>
<rect x="13" y="5" width="1" height="8" fill="#8e8e8e"/>
<rect x="4" y="5" width="9" height="8" fill="#fff"/>
<polygon points="5,6.5 7.2,8.2 5,10" fill="#a0a0a0" shape-rendering="auto"/>
<rect x="8" y="6" width="2" height="1" fill="#909090"/><rect x="8" y="8" width="2" height="1" fill="#909090"/><rect x="8" y="10" width="2" height="1" fill="#909090"/>
<rect x="11" y="6" width="1" height="2" fill="#808080"/><rect x="11" y="8" width="1" height="4" fill="#d8d8d8"/>
</svg>
<div class="f" style="left:396px;top:202px;width:32px;height:18px;background:#fff;line-height:15px;padding-left:1px;"></div>
<div class="f" style="left:429px;top:202px;width:146px;height:18px;background:#fff;line-height:15px;padding-left:1px;"></div>
<svg class="ic" style="left:578px;top:204px" width="16" height="16" viewBox="0 0 16 16" shape-rendering="crispEdges">
<rect x="0" y="0" width="16" height="16" rx="1" fill="#c9c5c9"/>
<rect x="0" y="0" width="16" height="1" fill="#e6dede"/><rect x="0" y="0" width="1" height="16" fill="#e0dada"/>
<rect x="15" y="0" width="1" height="16" fill="#6584a4"/><rect x="0" y="15" width="16" height="1" fill="#6584a4"/>
<rect x="2" y="2" width="8" height="7" fill="#fff"/><rect x="1" y="1" width="9" height="1" fill="#8e8e8e"/><rect x="9" y="1" width="1" height="1" fill="#808080"/>
<rect x="1" y="1" width="1" height="8" fill="#8e8e8e"/><rect x="1" y="8" width="2" height="1" fill="#808080"/>
<rect x="3" y="3" width="11" height="2" fill="#808080"/>
<rect x="3" y="5" width="1" height="8" fill="#808080"/>
<rect x="3" y="13" width="11" height="1" fill="#8e8e8e"/>
<rect x="13" y="5" width="1" height="8" fill="#8e8e8e"/>
<rect x="4" y="5" width="9" height="8" fill="#fff"/>
<polygon points="5,6.5 7.2,8.2 5,10" fill="#a0a0a0" shape-rendering="auto"/>
<rect x="8" y="6" width="2" height="1" fill="#909090"/><rect x="8" y="8" width="2" height="1" fill="#909090"/><rect x="8" y="10" width="2" height="1" fill="#909090"/>
<rect x="11" y="6" width="1" height="2" fill="#808080"/><rect x="11" y="8" width="1" height="4" fill="#d8d8d8"/>
</svg>
<div class="b d" style="left:597px;top:204px;width:88px;padding-right:2px;height:15px;line-height:17px;">Stellplatz suchen</div>
<div class="b d" style="left:690px;top:204px;width:74px;padding-right:2px;height:15px;line-height:17px;">Cutter</div>
<div class="b d" style="left:770px;top:204px;width:75px;padding-right:2px;height:15px;line-height:17px;">FIBU</div>
<div class="b d" style="left:850px;top:204px;width:75px;padding-right:2px;height:15px;line-height:17px;">Hierarchie</div>
<div class="a" style="left:941px;top:205px;width:10px;height:10px;border-left:1px solid #1c2b40;border-top:1px solid #1c2b40;background:#cbcbcb"></div>
<div class="f" style="left:104px;top:221px;width:32px;height:18px;background:#fff;line-height:15px;padding-left:1px;"></div>
<div class="f" style="left:137px;top:221px;width:239px;height:18px;background:#fff;line-height:15px;padding-left:1px;"></div>
<svg class="ic" style="left:379px;top:223px" width="16" height="16" viewBox="0 0 16 16" shape-rendering="crispEdges">
<rect x="0" y="0" width="16" height="16" rx="1" fill="#c9c5c9"/>
<rect x="0" y="0" width="16" height="1" fill="#e6dede"/><rect x="0" y="0" width="1" height="16" fill="#e0dada"/>
<rect x="15" y="0" width="1" height="16" fill="#6584a4"/><rect x="0" y="15" width="16" height="1" fill="#6584a4"/>
<rect x="2" y="2" width="8" height="7" fill="#fff"/><rect x="1" y="1" width="9" height="1" fill="#8e8e8e"/><rect x="9" y="1" width="1" height="1" fill="#808080"/>
<rect x="1" y="1" width="1" height="8" fill="#8e8e8e"/><rect x="1" y="8" width="2" height="1" fill="#808080"/>
<rect x="3" y="3" width="11" height="2" fill="#808080"/>
<rect x="3" y="5" width="1" height="8" fill="#808080"/>
<rect x="3" y="13" width="11" height="1" fill="#8e8e8e"/>
<rect x="13" y="5" width="1" height="8" fill="#8e8e8e"/>
<rect x="4" y="5" width="9" height="8" fill="#fff"/>
<polygon points="5,6.5 7.2,8.2 5,10" fill="#a0a0a0" shape-rendering="auto"/>
<rect x="8" y="6" width="2" height="1" fill="#909090"/><rect x="8" y="8" width="2" height="1" fill="#909090"/><rect x="8" y="10" width="2" height="1" fill="#909090"/>
<rect x="11" y="6" width="1" height="2" fill="#808080"/><rect x="11" y="8" width="1" height="4" fill="#d8d8d8"/>
</svg>
<div class="f" style="left:396px;top:221px;width:32px;height:18px;background:#fff;line-height:15px;padding-left:1px;"></div>
<div class="f" style="left:429px;top:221px;width:239px;height:18px;background:#fff;line-height:15px;padding-left:1px;"></div>
<svg class="ic" style="left:671px;top:223px" width="16" height="16" viewBox="0 0 16 16" shape-rendering="crispEdges">
<rect x="0" y="0" width="16" height="16" rx="1" fill="#c9c5c9"/>
<rect x="0" y="0" width="16" height="1" fill="#e6dede"/><rect x="0" y="0" width="1" height="16" fill="#e0dada"/>
<rect x="15" y="0" width="1" height="16" fill="#6584a4"/><rect x="0" y="15" width="16" height="1" fill="#6584a4"/>
<rect x="2" y="2" width="8" height="7" fill="#fff"/><rect x="1" y="1" width="9" height="1" fill="#8e8e8e"/><rect x="9" y="1" width="1" height="1" fill="#808080"/>
<rect x="1" y="1" width="1" height="8" fill="#8e8e8e"/><rect x="1" y="8" width="2" height="1" fill="#808080"/>
<rect x="3" y="3" width="11" height="2" fill="#808080"/>
<rect x="3" y="5" width="1" height="8" fill="#808080"/>
<rect x="3" y="13" width="11" height="1" fill="#8e8e8e"/>
<rect x="13" y="5" width="1" height="8" fill="#8e8e8e"/>
<rect x="4" y="5" width="9" height="8" fill="#fff"/>
<polygon points="5,6.5 7.2,8.2 5,10" fill="#a0a0a0" shape-rendering="auto"/>
<rect x="8" y="6" width="2" height="1" fill="#909090"/><rect x="8" y="8" width="2" height="1" fill="#909090"/><rect x="8" y="10" width="2" height="1" fill="#909090"/>
<rect x="11" y="6" width="1" height="2" fill="#808080"/><rect x="11" y="8" width="1" height="4" fill="#d8d8d8"/>
</svg>
<div class="b d" style="left:690px;top:223px;width:74px;padding-right:2px;height:15px;line-height:17px;">Druck</div>
<div class="b d" style="left:770px;top:223px;width:75px;padding-right:2px;height:15px;line-height:17px;">ProdNr Regel</div>
<div class="b d" style="left:850px;top:223px;width:75px;padding-right:2px;height:15px;line-height:17px;">Relev.Merkmal</div>
<div class="a" style="left:20px;top:84px;width:18px;height:15px;background:#0000ff"></div>
<div class="t" style="left:19.5px;top:86px;color:#fff;line-height:12px;letter-spacing:0.3px">100</div>
<svg class="ic" style="left:961px;top:82px" width="15" height="158" viewBox="0 0 15 158" shape-rendering="crispEdges">
<rect x="0" y="8" width="15" height="142" fill="#cdcdcd"/>
<rect x="0" y="8" width="1" height="142" fill="#a6a6a6"/><rect x="1" y="8" width="1" height="142" fill="#fff"/>
<rect x="14" y="8" width="1" height="142" fill="#a6a6a6"/>
<path d="M0.5 14.5 V7 A7 7 0 0 1 14.5 7 V14.5 Z" fill="#cdcdcd" stroke="#7f98b4" stroke-width="1" shape-rendering="auto"/>
<rect x="1" y="14" width="13" height="1" fill="#5f7fa2"/><rect x="1" y="15" width="13" height="1" fill="#fff"/>
<polygon points="4,10 11,10 7.5,6" fill="#5b7aa0" shape-rendering="auto"/>
<path d="M0.5 142.5 V151 A7 7 0 0 0 14.5 151 V142.5 Z" fill="#cdcdcd" stroke="#7f98b4" stroke-width="1" shape-rendering="auto"/>
<rect x="1" y="142" width="13" height="1" fill="#5f7fa2"/><rect x="1" y="143" width="13" height="1" fill="#fff"/>
<polygon points="4,148 11,148 7.5,152" fill="#5b7aa0" shape-rendering="auto"/>

<rect x="9" y="58" width="2" height="2" fill="#fff"/><rect x="10" y="59" width="1" height="1" fill="#6f8cab"/>
<rect x="9" y="66" width="2" height="2" fill="#fff"/><rect x="10" y="67" width="1" height="1" fill="#6f8cab"/>
<rect x="9" y="74" width="2" height="2" fill="#fff"/><rect x="10" y="75" width="1" height="1" fill="#6f8cab"/>
<rect x="9" y="82" width="2" height="2" fill="#fff"/><rect x="10" y="83" width="1" height="1" fill="#6f8cab"/>
<rect x="9" y="90" width="2" height="2" fill="#fff"/><rect x="10" y="91" width="1" height="1" fill="#6f8cab"/>
<rect x="4" y="62" width="2" height="2" fill="#fff"/><rect x="5" y="63" width="1" height="1" fill="#6f8cab"/>
<rect x="4" y="70" width="2" height="2" fill="#fff"/><rect x="5" y="71" width="1" height="1" fill="#6f8cab"/>
<rect x="4" y="78" width="2" height="2" fill="#fff"/><rect x="5" y="79" width="1" height="1" fill="#6f8cab"/>
<rect x="4" y="86" width="2" height="2" fill="#fff"/><rect x="5" y="87" width="1" height="1" fill="#6f8cab"/>
</svg>
<div class="a" style="left:11px;top:245px;width:699px;height:35px;border:1px solid #000;border-radius:10px"></div>
<div class="t" style="left:26px;top:255.7px;font-size:11px;color:#000;">Erfassung</div>
<div class="f" style="left:84px;top:254px;width:119px;height:18px;background:#eeeaee;line-height:15px;padding-left:1px;">25.11.2013 14:55</div>
<div class="f" style="left:204px;top:254px;width:132px;height:18px;background:#eeeaee;line-height:15px;padding-left:1px;">REFLEX</div>
<div class="t" style="left:380px;top:255.7px;font-size:11px;color:#000;">Änderung</div>
<div class="f" style="left:436px;top:254px;width:119px;height:18px;background:#eeeaee;line-height:15px;padding-left:1px;">19.07.2017 09:07</div>
<div class="f" style="left:557px;top:254px;width:131px;height:18px;background:#eeeaee;line-height:15px;padding-left:1px;">REFLEX</div>
<div class="b" style="left:839px;top:255px;width:85px;padding-right:2px;height:17px;line-height:19px;">Kopieren</div>
<div class="a" style="left:4px;top:289px;width:985px;height:1px;background:#9a9a9a"></div>
<div class="t" style="left:16px;top:307.7px;font-size:11px;color:#000;">Abteilung</div>
<div class="t" style="left:147px;top:307.7px;font-size:11px;color:#000;">Produktionsstätte</div>
<div class="t" style="left:280px;top:307.7px;font-size:11px;color:#000;">Materiallager</div>
<div class="t" style="left:446px;top:307.7px;font-size:11px;color:#000;">Halbfabrikat-Lager</div>
<div class="t" style="left:610px;top:307.7px;font-size:11px;color:#000;">Folgende Abteilung</div>
<div class="t" style="left:723px;top:292.7px;font-size:11px;color:#000;">Vorlaufzeit</div>
<div class="t" style="left:736px;top:307.7px;font-size:11px;color:#000;">(Tag)</div>
<div class="t" style="left:785px;top:292.7px;font-size:11px;color:#000;">Koop.</div>
<div class="t" style="left:782px;top:307.7px;font-size:11px;color:#000;">Bestell.</div>
<div class="f" style="left:17px;top:328px;width:33px;height:17px;background:#e6ffff;line-height:14px;padding-left:1px;">10</div>
<div class="f" style="left:51px;top:328px;width:79px;height:17px;background:#e6ffff;line-height:14px;padding-left:1px;">GESTB</div>
<svg class="ic" style="left:133px;top:330px" width="15" height="15" viewBox="0 0 15 15" shape-rendering="crispEdges">
<rect x="0" y="0" width="15" height="15" rx="1" fill="#c9c5c9"/>
<rect x="0" y="0" width="15" height="1" fill="#e6dede"/><rect x="0" y="0" width="1" height="15" fill="#e0dada"/>
<rect x="14" y="0" width="1" height="15" fill="#6584a4"/><rect x="0" y="14" width="15" height="1" fill="#6584a4"/>
<rect x="1" y="2" width="7" height="6" fill="#fff"/><rect x="1" y="1" width="7" height="1" fill="#1d6b9c"/><rect x="8" y="1" width="1" height="1" fill="#000"/>
<rect x="1" y="8" width="2" height="1" fill="#000"/>
<rect x="2" y="3" width="11" height="2" fill="#000"/>
<rect x="2" y="5" width="1" height="7" fill="#000"/>
<rect x="3" y="5" width="7" height="7" fill="#fff"/>
<rect x="2" y="12" width="11" height="1" fill="#e8e8e8"/>
<polygon points="4,6 6,7.8 4,9.6" fill="#0000ff" shape-rendering="auto"/>
<rect x="7" y="6" width="2" height="1" fill="#ff0000"/><rect x="7" y="8" width="2" height="1" fill="#ff0000"/><rect x="7" y="10" width="2" height="1" fill="#ff0000"/>
<rect x="10" y="5" width="1" height="7" fill="#1d6b9c"/><rect x="11" y="5" width="1" height="7" fill="#fff"/><rect x="11" y="6" width="1" height="2" fill="#000"/>
<rect x="12" y="4" width="1" height="9" fill="#1d6b9c"/>
</svg>
<div class="f" style="left:149px;top:328px;width:33px;height:17px;background:#e6ffff;line-height:14px;padding-left:1px;">35</div>
<div class="f" style="left:183px;top:328px;width:79px;height:17px;background:#e6ffff;line-height:14px;padding-left:1px;">Ungarn 2</div>
<svg class="ic" style="left:265px;top:330px" width="15" height="15" viewBox="0 0 15 15" shape-rendering="crispEdges">
<rect x="0" y="0" width="15" height="15" rx="1" fill="#c9c5c9"/>
<rect x="0" y="0" width="15" height="1" fill="#e6dede"/><rect x="0" y="0" width="1" height="15" fill="#e0dada"/>
<rect x="14" y="0" width="1" height="15" fill="#6584a4"/><rect x="0" y="14" width="15" height="1" fill="#6584a4"/>
<rect x="1" y="2" width="7" height="6" fill="#fff"/><rect x="1" y="1" width="7" height="1" fill="#1d6b9c"/><rect x="8" y="1" width="1" height="1" fill="#000"/>
<rect x="1" y="8" width="2" height="1" fill="#000"/>
<rect x="2" y="3" width="11" height="2" fill="#000"/>
<rect x="2" y="5" width="1" height="7" fill="#000"/>
<rect x="3" y="5" width="7" height="7" fill="#fff"/>
<rect x="2" y="12" width="11" height="1" fill="#e8e8e8"/>
<polygon points="4,6 6,7.8 4,9.6" fill="#0000ff" shape-rendering="auto"/>
<rect x="7" y="6" width="2" height="1" fill="#ff0000"/><rect x="7" y="8" width="2" height="1" fill="#ff0000"/><rect x="7" y="10" width="2" height="1" fill="#ff0000"/>
<rect x="10" y="5" width="1" height="7" fill="#1d6b9c"/><rect x="11" y="5" width="1" height="7" fill="#fff"/><rect x="11" y="6" width="1" height="2" fill="#000"/>
<rect x="12" y="4" width="1" height="9" fill="#1d6b9c"/>
</svg>
<div class="f" style="left:281px;top:328px;width:26px;height:17px;background:#e6ffff;line-height:14px;padding-left:1px;">6</div>
<div class="f" style="left:308px;top:328px;width:119px;height:17px;background:#e6ffff;line-height:14px;padding-left:1px;">Lindemann</div>
<svg class="ic" style="left:430px;top:330px" width="15" height="15" viewBox="0 0 15 15" shape-rendering="crispEdges">
<rect x="0" y="0" width="15" height="15" rx="1" fill="#c9c5c9"/>
<rect x="0" y="0" width="15" height="1" fill="#e6dede"/><rect x="0" y="0" width="1" height="15" fill="#e0dada"/>
<rect x="14" y="0" width="1" height="15" fill="#6584a4"/><rect x="0" y="14" width="15" height="1" fill="#6584a4"/>
<rect x="1" y="2" width="7" height="6" fill="#fff"/><rect x="1" y="1" width="7" height="1" fill="#1d6b9c"/><rect x="8" y="1" width="1" height="1" fill="#000"/>
<rect x="1" y="8" width="2" height="1" fill="#000"/>
<rect x="2" y="3" width="11" height="2" fill="#000"/>
<rect x="2" y="5" width="1" height="7" fill="#000"/>
<rect x="3" y="5" width="7" height="7" fill="#fff"/>
<rect x="2" y="12" width="11" height="1" fill="#e8e8e8"/>
<polygon points="4,6 6,7.8 4,9.6" fill="#0000ff" shape-rendering="auto"/>
<rect x="7" y="6" width="2" height="1" fill="#ff0000"/><rect x="7" y="8" width="2" height="1" fill="#ff0000"/><rect x="7" y="10" width="2" height="1" fill="#ff0000"/>
<rect x="10" y="5" width="1" height="7" fill="#1d6b9c"/><rect x="11" y="5" width="1" height="7" fill="#fff"/><rect x="11" y="6" width="1" height="2" fill="#000"/>
<rect x="12" y="4" width="1" height="9" fill="#1d6b9c"/>
</svg>
<div class="f" style="left:447px;top:328px;width:25px;height:17px;background:#e6ffff;line-height:14px;padding-left:1px;">6</div>
<div class="f" style="left:473px;top:328px;width:118px;height:17px;background:#e6ffff;line-height:14px;padding-left:1px;">Lindemann</div>
<svg class="ic" style="left:595px;top:330px" width="15" height="15" viewBox="0 0 15 15" shape-rendering="crispEdges">
<rect x="0" y="0" width="15" height="15" rx="1" fill="#c9c5c9"/>
<rect x="0" y="0" width="15" height="1" fill="#e6dede"/><rect x="0" y="0" width="1" height="15" fill="#e0dada"/>
<rect x="14" y="0" width="1" height="15" fill="#6584a4"/><rect x="0" y="14" width="15" height="1" fill="#6584a4"/>
<rect x="1" y="2" width="7" height="6" fill="#fff"/><rect x="1" y="1" width="7" height="1" fill="#1d6b9c"/><rect x="8" y="1" width="1" height="1" fill="#000"/>
<rect x="1" y="8" width="2" height="1" fill="#000"/>
<rect x="2" y="3" width="11" height="2" fill="#000"/>
<rect x="2" y="5" width="1" height="7" fill="#000"/>
<rect x="3" y="5" width="7" height="7" fill="#fff"/>
<rect x="2" y="12" width="11" height="1" fill="#e8e8e8"/>
<polygon points="4,6 6,7.8 4,9.6" fill="#0000ff" shape-rendering="auto"/>
<rect x="7" y="6" width="2" height="1" fill="#ff0000"/><rect x="7" y="8" width="2" height="1" fill="#ff0000"/><rect x="7" y="10" width="2" height="1" fill="#ff0000"/>
<rect x="10" y="5" width="1" height="7" fill="#1d6b9c"/><rect x="11" y="5" width="1" height="7" fill="#fff"/><rect x="11" y="6" width="1" height="2" fill="#000"/>
<rect x="12" y="4" width="1" height="9" fill="#1d6b9c"/>
</svg>
<div class="f" style="left:612px;top:328px;width:26px;height:17px;background:#e6ffff;line-height:14px;padding-left:1px;">40</div>
<div class="f" style="left:639px;top:328px;width:79px;height:17px;background:#e6ffff;line-height:14px;padding-left:1px;">WPOLS</div>
<svg class="ic" style="left:721px;top:330px" width="15" height="15" viewBox="0 0 15 15" shape-rendering="crispEdges">
<rect x="0" y="0" width="15" height="15" rx="1" fill="#c9c5c9"/>
<rect x="0" y="0" width="15" height="1" fill="#e6dede"/><rect x="0" y="0" width="1" height="15" fill="#e0dada"/>
<rect x="14" y="0" width="1" height="15" fill="#6584a4"/><rect x="0" y="14" width="15" height="1" fill="#6584a4"/>
<rect x="1" y="2" width="7" height="6" fill="#fff"/><rect x="1" y="1" width="7" height="1" fill="#1d6b9c"/><rect x="8" y="1" width="1" height="1" fill="#000"/>
<rect x="1" y="8" width="2" height="1" fill="#000"/>
<rect x="2" y="3" width="11" height="2" fill="#000"/>
<rect x="2" y="5" width="1" height="7" fill="#000"/>
<rect x="3" y="5" width="7" height="7" fill="#fff"/>
<rect x="2" y="12" width="11" height="1" fill="#e8e8e8"/>
<polygon points="4,6 6,7.8 4,9.6" fill="#0000ff" shape-rendering="auto"/>
<rect x="7" y="6" width="2" height="1" fill="#ff0000"/><rect x="7" y="8" width="2" height="1" fill="#ff0000"/><rect x="7" y="10" width="2" height="1" fill="#ff0000"/>
<rect x="10" y="5" width="1" height="7" fill="#1d6b9c"/><rect x="11" y="5" width="1" height="7" fill="#fff"/><rect x="11" y="6" width="1" height="2" fill="#000"/>
<rect x="12" y="4" width="1" height="9" fill="#1d6b9c"/>
</svg>
<div class="f" style="left:737px;top:328px;width:26px;height:17px;background:#e6ffff;line-height:14px;text-align:right;padding-right:1px;">3</div>
<div class="a" style="left:791px;top:328px;width:17px;height:18px;background:#e6ffff"></div><div class="a" style="left:791px;top:331px;width:12px;height:11px;background:#fff"></div>
<div class="a" style="left:791px;top:331px;width:10px;height:10px;border-left:1px solid #1c2b40;border-top:1px solid #1c2b40;background:transparent"></div>
<div class="b" style="left:826px;top:330px;width:85px;padding-right:2px;height:14px;line-height:18px;letter-spacing:0.35px;text-indent:1px">Bedarfsprüfung</div>
<div class="f" style="left:17px;top:347px;width:33px;height:17px;background:#fff;line-height:14px;padding-left:1px;">20</div>
<div class="f" style="left:51px;top:347px;width:79px;height:17px;background:#fff;line-height:14px;padding-left:1px;">ZUSCH</div>
<svg class="ic" style="left:133px;top:349px" width="15" height="15" viewBox="0 0 15 15" shape-rendering="crispEdges">
<rect x="0" y="0" width="15" height="15" rx="1" fill="#c9c5c9"/>
<rect x="0" y="0" width="15" height="1" fill="#e6dede"/><rect x="0" y="0" width="1" height="15" fill="#e0dada"/>
<rect x="14" y="0" width="1" height="15" fill="#6584a4"/><rect x="0" y="14" width="15" height="1" fill="#6584a4"/>
<rect x="1" y="2" width="7" height="6" fill="#fff"/><rect x="1" y="1" width="7" height="1" fill="#1d6b9c"/><rect x="8" y="1" width="1" height="1" fill="#000"/>
<rect x="1" y="8" width="2" height="1" fill="#000"/>
<rect x="2" y="3" width="11" height="2" fill="#000"/>
<rect x="2" y="5" width="1" height="7" fill="#000"/>
<rect x="3" y="5" width="7" height="7" fill="#fff"/>
<rect x="2" y="12" width="11" height="1" fill="#e8e8e8"/>
<polygon points="4,6 6,7.8 4,9.6" fill="#0000ff" shape-rendering="auto"/>
<rect x="7" y="6" width="2" height="1" fill="#ff0000"/><rect x="7" y="8" width="2" height="1" fill="#ff0000"/><rect x="7" y="10" width="2" height="1" fill="#ff0000"/>
<rect x="10" y="5" width="1" height="7" fill="#1d6b9c"/><rect x="11" y="5" width="1" height="7" fill="#fff"/><rect x="11" y="6" width="1" height="2" fill="#000"/>
<rect x="12" y="4" width="1" height="9" fill="#1d6b9c"/>
</svg>
<div class="f" style="left:149px;top:347px;width:33px;height:17px;background:#fff;line-height:14px;padding-left:1px;">35</div>
<div class="f" style="left:183px;top:347px;width:79px;height:17px;background:#fff;line-height:14px;padding-left:1px;">Ungarn 2</div>
<svg class="ic" style="left:265px;top:349px" width="15" height="15" viewBox="0 0 15 15" shape-rendering="crispEdges">
<rect x="0" y="0" width="15" height="15" rx="1" fill="#c9c5c9"/>
<rect x="0" y="0" width="15" height="1" fill="#e6dede"/><rect x="0" y="0" width="1" height="15" fill="#e0dada"/>
<rect x="14" y="0" width="1" height="15" fill="#6584a4"/><rect x="0" y="14" width="15" height="1" fill="#6584a4"/>
<rect x="1" y="2" width="7" height="6" fill="#fff"/><rect x="1" y="1" width="7" height="1" fill="#1d6b9c"/><rect x="8" y="1" width="1" height="1" fill="#000"/>
<rect x="1" y="8" width="2" height="1" fill="#000"/>
<rect x="2" y="3" width="11" height="2" fill="#000"/>
<rect x="2" y="5" width="1" height="7" fill="#000"/>
<rect x="3" y="5" width="7" height="7" fill="#fff"/>
<rect x="2" y="12" width="11" height="1" fill="#e8e8e8"/>
<polygon points="4,6 6,7.8 4,9.6" fill="#0000ff" shape-rendering="auto"/>
<rect x="7" y="6" width="2" height="1" fill="#ff0000"/><rect x="7" y="8" width="2" height="1" fill="#ff0000"/><rect x="7" y="10" width="2" height="1" fill="#ff0000"/>
<rect x="10" y="5" width="1" height="7" fill="#1d6b9c"/><rect x="11" y="5" width="1" height="7" fill="#fff"/><rect x="11" y="6" width="1" height="2" fill="#000"/>
<rect x="12" y="4" width="1" height="9" fill="#1d6b9c"/>
</svg>
<div class="f" style="left:281px;top:347px;width:26px;height:17px;background:#fff;line-height:14px;padding-left:1px;">6</div>
<div class="f" style="left:308px;top:347px;width:119px;height:17px;background:#fff;line-height:14px;padding-left:1px;">Lindemann</div>
<svg class="ic" style="left:430px;top:349px" width="15" height="15" viewBox="0 0 15 15" shape-rendering="crispEdges">
<rect x="0" y="0" width="15" height="15" rx="1" fill="#c9c5c9"/>
<rect x="0" y="0" width="15" height="1" fill="#e6dede"/><rect x="0" y="0" width="1" height="15" fill="#e0dada"/>
<rect x="14" y="0" width="1" height="15" fill="#6584a4"/><rect x="0" y="14" width="15" height="1" fill="#6584a4"/>
<rect x="1" y="2" width="7" height="6" fill="#fff"/><rect x="1" y="1" width="7" height="1" fill="#1d6b9c"/><rect x="8" y="1" width="1" height="1" fill="#000"/>
<rect x="1" y="8" width="2" height="1" fill="#000"/>
<rect x="2" y="3" width="11" height="2" fill="#000"/>
<rect x="2" y="5" width="1" height="7" fill="#000"/>
<rect x="3" y="5" width="7" height="7" fill="#fff"/>
<rect x="2" y="12" width="11" height="1" fill="#e8e8e8"/>
<polygon points="4,6 6,7.8 4,9.6" fill="#0000ff" shape-rendering="auto"/>
<rect x="7" y="6" width="2" height="1" fill="#ff0000"/><rect x="7" y="8" width="2" height="1" fill="#ff0000"/><rect x="7" y="10" width="2" height="1" fill="#ff0000"/>
<rect x="10" y="5" width="1" height="7" fill="#1d6b9c"/><rect x="11" y="5" width="1" height="7" fill="#fff"/><rect x="11" y="6" width="1" height="2" fill="#000"/>
<rect x="12" y="4" width="1" height="9" fill="#1d6b9c"/>
</svg>
<div class="f" style="left:447px;top:347px;width:25px;height:17px;background:#fff;line-height:14px;padding-left:1px;">6</div>
<div class="f" style="left:473px;top:347px;width:118px;height:17px;background:#fff;line-height:14px;padding-left:1px;">Lindemann</div>
<svg class="ic" style="left:595px;top:349px" width="15" height="15" viewBox="0 0 15 15" shape-rendering="crispEdges">
<rect x="0" y="0" width="15" height="15" rx="1" fill="#c9c5c9"/>
<rect x="0" y="0" width="15" height="1" fill="#e6dede"/><rect x="0" y="0" width="1" height="15" fill="#e0dada"/>
<rect x="14" y="0" width="1" height="15" fill="#6584a4"/><rect x="0" y="14" width="15" height="1" fill="#6584a4"/>
<rect x="1" y="2" width="7" height="6" fill="#fff"/><rect x="1" y="1" width="7" height="1" fill="#1d6b9c"/><rect x="8" y="1" width="1" height="1" fill="#000"/>
<rect x="1" y="8" width="2" height="1" fill="#000"/>
<rect x="2" y="3" width="11" height="2" fill="#000"/>
<rect x="2" y="5" width="1" height="7" fill="#000"/>
<rect x="3" y="5" width="7" height="7" fill="#fff"/>
<rect x="2" y="12" width="11" height="1" fill="#e8e8e8"/>
<polygon points="4,6 6,7.8 4,9.6" fill="#0000ff" shape-rendering="auto"/>
<rect x="7" y="6" width="2" height="1" fill="#ff0000"/><rect x="7" y="8" width="2" height="1" fill="#ff0000"/><rect x="7" y="10" width="2" height="1" fill="#ff0000"/>
<rect x="10" y="5" width="1" height="7" fill="#1d6b9c"/><rect x="11" y="5" width="1" height="7" fill="#fff"/><rect x="11" y="6" width="1" height="2" fill="#000"/>
<rect x="12" y="4" width="1" height="9" fill="#1d6b9c"/>
</svg>
<div class="f" style="left:612px;top:347px;width:26px;height:17px;background:#fff;line-height:14px;padding-left:1px;">30</div>
<div class="f" style="left:639px;top:347px;width:79px;height:17px;background:#fff;line-height:14px;padding-left:1px;">NAEH</div>
<svg class="ic" style="left:721px;top:349px" width="15" height="15" viewBox="0 0 15 15" shape-rendering="crispEdges">
<rect x="0" y="0" width="15" height="15" rx="1" fill="#c9c5c9"/>
<rect x="0" y="0" width="15" height="1" fill="#e6dede"/><rect x="0" y="0" width="1" height="15" fill="#e0dada"/>
<rect x="14" y="0" width="1" height="15" fill="#6584a4"/><rect x="0" y="14" width="15" height="1" fill="#6584a4"/>
<rect x="1" y="2" width="7" height="6" fill="#fff"/><rect x="1" y="1" width="7" height="1" fill="#1d6b9c"/><rect x="8" y="1" width="1" height="1" fill="#000"/>
<rect x="1" y="8" width="2" height="1" fill="#000"/>
<rect x="2" y="3" width="11" height="2" fill="#000"/>
<rect x="2" y="5" width="1" height="7" fill="#000"/>
<rect x="3" y="5" width="7" height="7" fill="#fff"/>
<rect x="2" y="12" width="11" height="1" fill="#e8e8e8"/>
<polygon points="4,6 6,7.8 4,9.6" fill="#0000ff" shape-rendering="auto"/>
<rect x="7" y="6" width="2" height="1" fill="#ff0000"/><rect x="7" y="8" width="2" height="1" fill="#ff0000"/><rect x="7" y="10" width="2" height="1" fill="#ff0000"/>
<rect x="10" y="5" width="1" height="7" fill="#1d6b9c"/><rect x="11" y="5" width="1" height="7" fill="#fff"/><rect x="11" y="6" width="1" height="2" fill="#000"/>
<rect x="12" y="4" width="1" height="9" fill="#1d6b9c"/>
</svg>
<div class="f" style="left:737px;top:347px;width:26px;height:17px;background:#fff;line-height:14px;text-align:right;padding-right:1px;">3</div>
<div class="a" style="left:791px;top:350px;width:10px;height:10px;border-left:1px solid #1c2b40;border-top:1px solid #1c2b40;background:transparent"></div>
<div class="b" style="left:826px;top:349px;width:85px;padding-right:2px;height:14px;line-height:18px;letter-spacing:0.35px;text-indent:1px">Bedarfsprüfung</div>
<div class="f" style="left:17px;top:365px;width:33px;height:17px;background:#fff;line-height:14px;padding-left:1px;">30</div>
<div class="f" style="left:51px;top:365px;width:79px;height:17px;background:#fff;line-height:14px;padding-left:1px;">NAEH</div>
<svg class="ic" style="left:133px;top:367px" width="15" height="15" viewBox="0 0 15 15" shape-rendering="crispEdges">
<rect x="0" y="0" width="15" height="15" rx="1" fill="#c9c5c9"/>
<rect x="0" y="0" width="15" height="1" fill="#e6dede"/><rect x="0" y="0" width="1" height="15" fill="#e0dada"/>
<rect x="14" y="0" width="1" height="15" fill="#6584a4"/><rect x="0" y="14" width="15" height="1" fill="#6584a4"/>
<rect x="1" y="2" width="7" height="6" fill="#fff"/><rect x="1" y="1" width="7" height="1" fill="#1d6b9c"/><rect x="8" y="1" width="1" height="1" fill="#000"/>
<rect x="1" y="8" width="2" height="1" fill="#000"/>
<rect x="2" y="3" width="11" height="2" fill="#000"/>
<rect x="2" y="5" width="1" height="7" fill="#000"/>
<rect x="3" y="5" width="7" height="7" fill="#fff"/>
<rect x="2" y="12" width="11" height="1" fill="#e8e8e8"/>
<polygon points="4,6 6,7.8 4,9.6" fill="#0000ff" shape-rendering="auto"/>
<rect x="7" y="6" width="2" height="1" fill="#ff0000"/><rect x="7" y="8" width="2" height="1" fill="#ff0000"/><rect x="7" y="10" width="2" height="1" fill="#ff0000"/>
<rect x="10" y="5" width="1" height="7" fill="#1d6b9c"/><rect x="11" y="5" width="1" height="7" fill="#fff"/><rect x="11" y="6" width="1" height="2" fill="#000"/>
<rect x="12" y="4" width="1" height="9" fill="#1d6b9c"/>
</svg>
<div class="f" style="left:149px;top:365px;width:33px;height:17px;background:#fff;line-height:14px;padding-left:1px;">35</div>
<div class="f" style="left:183px;top:365px;width:79px;height:17px;background:#fff;line-height:14px;padding-left:1px;">Ungarn 2</div>
<svg class="ic" style="left:265px;top:367px" width="15" height="15" viewBox="0 0 15 15" shape-rendering="crispEdges">
<rect x="0" y="0" width="15" height="15" rx="1" fill="#c9c5c9"/>
<rect x="0" y="0" width="15" height="1" fill="#e6dede"/><rect x="0" y="0" width="1" height="15" fill="#e0dada"/>
<rect x="14" y="0" width="1" height="15" fill="#6584a4"/><rect x="0" y="14" width="15" height="1" fill="#6584a4"/>
<rect x="1" y="2" width="7" height="6" fill="#fff"/><rect x="1" y="1" width="7" height="1" fill="#1d6b9c"/><rect x="8" y="1" width="1" height="1" fill="#000"/>
<rect x="1" y="8" width="2" height="1" fill="#000"/>
<rect x="2" y="3" width="11" height="2" fill="#000"/>
<rect x="2" y="5" width="1" height="7" fill="#000"/>
<rect x="3" y="5" width="7" height="7" fill="#fff"/>
<rect x="2" y="12" width="11" height="1" fill="#e8e8e8"/>
<polygon points="4,6 6,7.8 4,9.6" fill="#0000ff" shape-rendering="auto"/>
<rect x="7" y="6" width="2" height="1" fill="#ff0000"/><rect x="7" y="8" width="2" height="1" fill="#ff0000"/><rect x="7" y="10" width="2" height="1" fill="#ff0000"/>
<rect x="10" y="5" width="1" height="7" fill="#1d6b9c"/><rect x="11" y="5" width="1" height="7" fill="#fff"/><rect x="11" y="6" width="1" height="2" fill="#000"/>
<rect x="12" y="4" width="1" height="9" fill="#1d6b9c"/>
</svg>
<div class="f" style="left:281px;top:365px;width:26px;height:17px;background:#fff;line-height:14px;padding-left:1px;">6</div>
<div class="f" style="left:308px;top:365px;width:119px;height:17px;background:#fff;line-height:14px;padding-left:1px;">Lindemann</div>
<svg class="ic" style="left:430px;top:367px" width="15" height="15" viewBox="0 0 15 15" shape-rendering="crispEdges">
<rect x="0" y="0" width="15" height="15" rx="1" fill="#c9c5c9"/>
<rect x="0" y="0" width="15" height="1" fill="#e6dede"/><rect x="0" y="0" width="1" height="15" fill="#e0dada"/>
<rect x="14" y="0" width="1" height="15" fill="#6584a4"/><rect x="0" y="14" width="15" height="1" fill="#6584a4"/>
<rect x="1" y="2" width="7" height="6" fill="#fff"/><rect x="1" y="1" width="7" height="1" fill="#1d6b9c"/><rect x="8" y="1" width="1" height="1" fill="#000"/>
<rect x="1" y="8" width="2" height="1" fill="#000"/>
<rect x="2" y="3" width="11" height="2" fill="#000"/>
<rect x="2" y="5" width="1" height="7" fill="#000"/>
<rect x="3" y="5" width="7" height="7" fill="#fff"/>
<rect x="2" y="12" width="11" height="1" fill="#e8e8e8"/>
<polygon points="4,6 6,7.8 4,9.6" fill="#0000ff" shape-rendering="auto"/>
<rect x="7" y="6" width="2" height="1" fill="#ff0000"/><rect x="7" y="8" width="2" height="1" fill="#ff0000"/><rect x="7" y="10" width="2" height="1" fill="#ff0000"/>
<rect x="10" y="5" width="1" height="7" fill="#1d6b9c"/><rect x="11" y="5" width="1" height="7" fill="#fff"/><rect x="11" y="6" width="1" height="2" fill="#000"/>
<rect x="12" y="4" width="1" height="9" fill="#1d6b9c"/>
</svg>
<div class="f" style="left:447px;top:365px;width:25px;height:17px;background:#fff;line-height:14px;padding-left:1px;">6</div>
<div class="f" style="left:473px;top:365px;width:118px;height:17px;background:#fff;line-height:14px;padding-left:1px;">Lindemann</div>
<svg class="ic" style="left:595px;top:367px" width="15" height="15" viewBox="0 0 15 15" shape-rendering="crispEdges">
<rect x="0" y="0" width="15" height="15" rx="1" fill="#c9c5c9"/>
<rect x="0" y="0" width="15" height="1" fill="#e6dede"/><rect x="0" y="0" width="1" height="15" fill="#e0dada"/>
<rect x="14" y="0" width="1" height="15" fill="#6584a4"/><rect x="0" y="14" width="15" height="1" fill="#6584a4"/>
<rect x="1" y="2" width="7" height="6" fill="#fff"/><rect x="1" y="1" width="7" height="1" fill="#1d6b9c"/><rect x="8" y="1" width="1" height="1" fill="#000"/>
<rect x="1" y="8" width="2" height="1" fill="#000"/>
<rect x="2" y="3" width="11" height="2" fill="#000"/>
<rect x="2" y="5" width="1" height="7" fill="#000"/>
<rect x="3" y="5" width="7" height="7" fill="#fff"/>
<rect x="2" y="12" width="11" height="1" fill="#e8e8e8"/>
<polygon points="4,6 6,7.8 4,9.6" fill="#0000ff" shape-rendering="auto"/>
<rect x="7" y="6" width="2" height="1" fill="#ff0000"/><rect x="7" y="8" width="2" height="1" fill="#ff0000"/><rect x="7" y="10" width="2" height="1" fill="#ff0000"/>
<rect x="10" y="5" width="1" height="7" fill="#1d6b9c"/><rect x="11" y="5" width="1" height="7" fill="#fff"/><rect x="11" y="6" width="1" height="2" fill="#000"/>
<rect x="12" y="4" width="1" height="9" fill="#1d6b9c"/>
</svg>
<div class="f" style="left:612px;top:365px;width:26px;height:17px;background:#fff;line-height:14px;padding-left:1px;">50</div>
<div class="f" style="left:639px;top:365px;width:79px;height:17px;background:#fff;line-height:14px;padding-left:1px;">POLST</div>
<svg class="ic" style="left:721px;top:367px" width="15" height="15" viewBox="0 0 15 15" shape-rendering="crispEdges">
<rect x="0" y="0" width="15" height="15" rx="1" fill="#c9c5c9"/>
<rect x="0" y="0" width="15" height="1" fill="#e6dede"/><rect x="0" y="0" width="1" height="15" fill="#e0dada"/>
<rect x="14" y="0" width="1" height="15" fill="#6584a4"/><rect x="0" y="14" width="15" height="1" fill="#6584a4"/>
<rect x="1" y="2" width="7" height="6" fill="#fff"/><rect x="1" y="1" width="7" height="1" fill="#1d6b9c"/><rect x="8" y="1" width="1" height="1" fill="#000"/>
<rect x="1" y="8" width="2" height="1" fill="#000"/>
<rect x="2" y="3" width="11" height="2" fill="#000"/>
<rect x="2" y="5" width="1" height="7" fill="#000"/>
<rect x="3" y="5" width="7" height="7" fill="#fff"/>
<rect x="2" y="12" width="11" height="1" fill="#e8e8e8"/>
<polygon points="4,6 6,7.8 4,9.6" fill="#0000ff" shape-rendering="auto"/>
<rect x="7" y="6" width="2" height="1" fill="#ff0000"/><rect x="7" y="8" width="2" height="1" fill="#ff0000"/><rect x="7" y="10" width="2" height="1" fill="#ff0000"/>
<rect x="10" y="5" width="1" height="7" fill="#1d6b9c"/><rect x="11" y="5" width="1" height="7" fill="#fff"/><rect x="11" y="6" width="1" height="2" fill="#000"/>
<rect x="12" y="4" width="1" height="9" fill="#1d6b9c"/>
</svg>
<div class="f" style="left:737px;top:365px;width:26px;height:17px;background:#fff;line-height:14px;text-align:right;padding-right:1px;">3</div>
<div class="a" style="left:791px;top:368px;width:10px;height:10px;border-left:1px solid #1c2b40;border-top:1px solid #1c2b40;background:transparent"></div>
<div class="b" style="left:826px;top:367px;width:85px;padding-right:2px;height:14px;line-height:18px;letter-spacing:0.35px;text-indent:1px">Bedarfsprüfung</div>
<div class="f" style="left:17px;top:384px;width:33px;height:17px;background:#fff;line-height:14px;padding-left:1px;">40</div>
<div class="f" style="left:51px;top:384px;width:79px;height:17px;background:#fff;line-height:14px;padding-left:1px;">WPOLS</div>
<svg class="ic" style="left:133px;top:386px" width="15" height="15" viewBox="0 0 15 15" shape-rendering="crispEdges">
<rect x="0" y="0" width="15" height="15" rx="1" fill="#c9c5c9"/>
<rect x="0" y="0" width="15" height="1" fill="#e6dede"/><rect x="0" y="0" width="1" height="15" fill="#e0dada"/>
<rect x="14" y="0" width="1" height="15" fill="#6584a4"/><rect x="0" y="14" width="15" height="1" fill="#6584a4"/>
<rect x="1" y="2" width="7" height="6" fill="#fff"/><rect x="1" y="1" width="7" height="1" fill="#1d6b9c"/><rect x="8" y="1" width="1" height="1" fill="#000"/>
<rect x="1" y="8" width="2" height="1" fill="#000"/>
<rect x="2" y="3" width="11" height="2" fill="#000"/>
<rect x="2" y="5" width="1" height="7" fill="#000"/>
<rect x="3" y="5" width="7" height="7" fill="#fff"/>
<rect x="2" y="12" width="11" height="1" fill="#e8e8e8"/>
<polygon points="4,6 6,7.8 4,9.6" fill="#0000ff" shape-rendering="auto"/>
<rect x="7" y="6" width="2" height="1" fill="#ff0000"/><rect x="7" y="8" width="2" height="1" fill="#ff0000"/><rect x="7" y="10" width="2" height="1" fill="#ff0000"/>
<rect x="10" y="5" width="1" height="7" fill="#1d6b9c"/><rect x="11" y="5" width="1" height="7" fill="#fff"/><rect x="11" y="6" width="1" height="2" fill="#000"/>
<rect x="12" y="4" width="1" height="9" fill="#1d6b9c"/>
</svg>
<div class="f" style="left:149px;top:384px;width:33px;height:17px;background:#fff;line-height:14px;padding-left:1px;">35</div>
<div class="f" style="left:183px;top:384px;width:79px;height:17px;background:#fff;line-height:14px;padding-left:1px;">Ungarn 2</div>
<svg class="ic" style="left:265px;top:386px" width="15" height="15" viewBox="0 0 15 15" shape-rendering="crispEdges">
<rect x="0" y="0" width="15" height="15" rx="1" fill="#c9c5c9"/>
<rect x="0" y="0" width="15" height="1" fill="#e6dede"/><rect x="0" y="0" width="1" height="15" fill="#e0dada"/>
<rect x="14" y="0" width="1" height="15" fill="#6584a4"/><rect x="0" y="14" width="15" height="1" fill="#6584a4"/>
<rect x="1" y="2" width="7" height="6" fill="#fff"/><rect x="1" y="1" width="7" height="1" fill="#1d6b9c"/><rect x="8" y="1" width="1" height="1" fill="#000"/>
<rect x="1" y="8" width="2" height="1" fill="#000"/>
<rect x="2" y="3" width="11" height="2" fill="#000"/>
<rect x="2" y="5" width="1" height="7" fill="#000"/>
<rect x="3" y="5" width="7" height="7" fill="#fff"/>
<rect x="2" y="12" width="11" height="1" fill="#e8e8e8"/>
<polygon points="4,6 6,7.8 4,9.6" fill="#0000ff" shape-rendering="auto"/>
<rect x="7" y="6" width="2" height="1" fill="#ff0000"/><rect x="7" y="8" width="2" height="1" fill="#ff0000"/><rect x="7" y="10" width="2" height="1" fill="#ff0000"/>
<rect x="10" y="5" width="1" height="7" fill="#1d6b9c"/><rect x="11" y="5" width="1" height="7" fill="#fff"/><rect x="11" y="6" width="1" height="2" fill="#000"/>
<rect x="12" y="4" width="1" height="9" fill="#1d6b9c"/>
</svg>
<div class="f" style="left:281px;top:384px;width:26px;height:17px;background:#fff;line-height:14px;padding-left:1px;">6</div>
<div class="f" style="left:308px;top:384px;width:119px;height:17px;background:#fff;line-height:14px;padding-left:1px;">Lindemann</div>
<svg class="ic" style="left:430px;top:386px" width="15" height="15" viewBox="0 0 15 15" shape-rendering="crispEdges">
<rect x="0" y="0" width="15" height="15" rx="1" fill="#c9c5c9"/>
<rect x="0" y="0" width="15" height="1" fill="#e6dede"/><rect x="0" y="0" width="1" height="15" fill="#e0dada"/>
<rect x="14" y="0" width="1" height="15" fill="#6584a4"/><rect x="0" y="14" width="15" height="1" fill="#6584a4"/>
<rect x="1" y="2" width="7" height="6" fill="#fff"/><rect x="1" y="1" width="7" height="1" fill="#1d6b9c"/><rect x="8" y="1" width="1" height="1" fill="#000"/>
<rect x="1" y="8" width="2" height="1" fill="#000"/>
<rect x="2" y="3" width="11" height="2" fill="#000"/>
<rect x="2" y="5" width="1" height="7" fill="#000"/>
<rect x="3" y="5" width="7" height="7" fill="#fff"/>
<rect x="2" y="12" width="11" height="1" fill="#e8e8e8"/>
<polygon points="4,6 6,7.8 4,9.6" fill="#0000ff" shape-rendering="auto"/>
<rect x="7" y="6" width="2" height="1" fill="#ff0000"/><rect x="7" y="8" width="2" height="1" fill="#ff0000"/><rect x="7" y="10" width="2" height="1" fill="#ff0000"/>
<rect x="10" y="5" width="1" height="7" fill="#1d6b9c"/><rect x="11" y="5" width="1" height="7" fill="#fff"/><rect x="11" y="6" width="1" height="2" fill="#000"/>
<rect x="12" y="4" width="1" height="9" fill="#1d6b9c"/>
</svg>
<div class="f" style="left:447px;top:384px;width:25px;height:17px;background:#fff;line-height:14px;padding-left:1px;">6</div>
<div class="f" style="left:473px;top:384px;width:118px;height:17px;background:#fff;line-height:14px;padding-left:1px;">Lindemann</div>
<svg class="ic" style="left:595px;top:386px" width="15" height="15" viewBox="0 0 15 15" shape-rendering="crispEdges">
<rect x="0" y="0" width="15" height="15" rx="1" fill="#c9c5c9"/>
<rect x="0" y="0" width="15" height="1" fill="#e6dede"/><rect x="0" y="0" width="1" height="15" fill="#e0dada"/>
<rect x="14" y="0" width="1" height="15" fill="#6584a4"/><rect x="0" y="14" width="15" height="1" fill="#6584a4"/>
<rect x="1" y="2" width="7" height="6" fill="#fff"/><rect x="1" y="1" width="7" height="1" fill="#1d6b9c"/><rect x="8" y="1" width="1" height="1" fill="#000"/>
<rect x="1" y="8" width="2" height="1" fill="#000"/>
<rect x="2" y="3" width="11" height="2" fill="#000"/>
<rect x="2" y="5" width="1" height="7" fill="#000"/>
<rect x="3" y="5" width="7" height="7" fill="#fff"/>
<rect x="2" y="12" width="11" height="1" fill="#e8e8e8"/>
<polygon points="4,6 6,7.8 4,9.6" fill="#0000ff" shape-rendering="auto"/>
<rect x="7" y="6" width="2" height="1" fill="#ff0000"/><rect x="7" y="8" width="2" height="1" fill="#ff0000"/><rect x="7" y="10" width="2" height="1" fill="#ff0000"/>
<rect x="10" y="5" width="1" height="7" fill="#1d6b9c"/><rect x="11" y="5" width="1" height="7" fill="#fff"/><rect x="11" y="6" width="1" height="2" fill="#000"/>
<rect x="12" y="4" width="1" height="9" fill="#1d6b9c"/>
</svg>
<div class="f" style="left:612px;top:384px;width:26px;height:17px;background:#fff;line-height:14px;padding-left:1px;">50</div>
<div class="f" style="left:639px;top:384px;width:79px;height:17px;background:#fff;line-height:14px;padding-left:1px;">POLST</div>
<svg class="ic" style="left:721px;top:386px" width="15" height="15" viewBox="0 0 15 15" shape-rendering="crispEdges">
<rect x="0" y="0" width="15" height="15" rx="1" fill="#c9c5c9"/>
<rect x="0" y="0" width="15" height="1" fill="#e6dede"/><rect x="0" y="0" width="1" height="15" fill="#e0dada"/>
<rect x="14" y="0" width="1" height="15" fill="#6584a4"/><rect x="0" y="14" width="15" height="1" fill="#6584a4"/>
<rect x="1" y="2" width="7" height="6" fill="#fff"/><rect x="1" y="1" width="7" height="1" fill="#1d6b9c"/><rect x="8" y="1" width="1" height="1" fill="#000"/>
<rect x="1" y="8" width="2" height="1" fill="#000"/>
<rect x="2" y="3" width="11" height="2" fill="#000"/>
<rect x="2" y="5" width="1" height="7" fill="#000"/>
<rect x="3" y="5" width="7" height="7" fill="#fff"/>
<rect x="2" y="12" width="11" height="1" fill="#e8e8e8"/>
<polygon points="4,6 6,7.8 4,9.6" fill="#0000ff" shape-rendering="auto"/>
<rect x="7" y="6" width="2" height="1" fill="#ff0000"/><rect x="7" y="8" width="2" height="1" fill="#ff0000"/><rect x="7" y="10" width="2" height="1" fill="#ff0000"/>
<rect x="10" y="5" width="1" height="7" fill="#1d6b9c"/><rect x="11" y="5" width="1" height="7" fill="#fff"/><rect x="11" y="6" width="1" height="2" fill="#000"/>
<rect x="12" y="4" width="1" height="9" fill="#1d6b9c"/>
</svg>
<div class="f" style="left:737px;top:384px;width:26px;height:17px;background:#fff;line-height:14px;text-align:right;padding-right:1px;">3</div>
<div class="a" style="left:791px;top:387px;width:10px;height:10px;border-left:1px solid #1c2b40;border-top:1px solid #1c2b40;background:transparent"></div>
<div class="b" style="left:826px;top:386px;width:85px;padding-right:2px;height:14px;line-height:18px;letter-spacing:0.35px;text-indent:1px">Bedarfsprüfung</div>
<div class="f" style="left:17px;top:403px;width:33px;height:17px;background:#fff;line-height:14px;padding-left:1px;">50</div>
<div class="f" style="left:51px;top:403px;width:79px;height:17px;background:#fff;line-height:14px;padding-left:1px;">POLST</div>
<svg class="ic" style="left:133px;top:405px" width="15" height="15" viewBox="0 0 15 15" shape-rendering="crispEdges">
<rect x="0" y="0" width="15" height="15" rx="1" fill="#c9c5c9"/>
<rect x="0" y="0" width="15" height="1" fill="#e6dede"/><rect x="0" y="0" width="1" height="15" fill="#e0dada"/>
<rect x="14" y="0" width="1" height="15" fill="#6584a4"/><rect x="0" y="14" width="15" height="1" fill="#6584a4"/>
<rect x="1" y="2" width="7" height="6" fill="#fff"/><rect x="1" y="1" width="7" height="1" fill="#1d6b9c"/><rect x="8" y="1" width="1" height="1" fill="#000"/>
<rect x="1" y="8" width="2" height="1" fill="#000"/>
<rect x="2" y="3" width="11" height="2" fill="#000"/>
<rect x="2" y="5" width="1" height="7" fill="#000"/>
<rect x="3" y="5" width="7" height="7" fill="#fff"/>
<rect x="2" y="12" width="11" height="1" fill="#e8e8e8"/>
<polygon points="4,6 6,7.8 4,9.6" fill="#0000ff" shape-rendering="auto"/>
<rect x="7" y="6" width="2" height="1" fill="#ff0000"/><rect x="7" y="8" width="2" height="1" fill="#ff0000"/><rect x="7" y="10" width="2" height="1" fill="#ff0000"/>
<rect x="10" y="5" width="1" height="7" fill="#1d6b9c"/><rect x="11" y="5" width="1" height="7" fill="#fff"/><rect x="11" y="6" width="1" height="2" fill="#000"/>
<rect x="12" y="4" width="1" height="9" fill="#1d6b9c"/>
</svg>
<div class="f" style="left:149px;top:403px;width:33px;height:17px;background:#fff;line-height:14px;padding-left:1px;">35</div>
<div class="f" style="left:183px;top:403px;width:79px;height:17px;background:#fff;line-height:14px;padding-left:1px;">Ungarn 2</div>
<svg class="ic" style="left:265px;top:405px" width="15" height="15" viewBox="0 0 15 15" shape-rendering="crispEdges">
<rect x="0" y="0" width="15" height="15" rx="1" fill="#c9c5c9"/>
<rect x="0" y="0" width="15" height="1" fill="#e6dede"/><rect x="0" y="0" width="1" height="15" fill="#e0dada"/>
<rect x="14" y="0" width="1" height="15" fill="#6584a4"/><rect x="0" y="14" width="15" height="1" fill="#6584a4"/>
<rect x="1" y="2" width="7" height="6" fill="#fff"/><rect x="1" y="1" width="7" height="1" fill="#1d6b9c"/><rect x="8" y="1" width="1" height="1" fill="#000"/>
<rect x="1" y="8" width="2" height="1" fill="#000"/>
<rect x="2" y="3" width="11" height="2" fill="#000"/>
<rect x="2" y="5" width="1" height="7" fill="#000"/>
<rect x="3" y="5" width="7" height="7" fill="#fff"/>
<rect x="2" y="12" width="11" height="1" fill="#e8e8e8"/>
<polygon points="4,6 6,7.8 4,9.6" fill="#0000ff" shape-rendering="auto"/>
<rect x="7" y="6" width="2" height="1" fill="#ff0000"/><rect x="7" y="8" width="2" height="1" fill="#ff0000"/><rect x="7" y="10" width="2" height="1" fill="#ff0000"/>
<rect x="10" y="5" width="1" height="7" fill="#1d6b9c"/><rect x="11" y="5" width="1" height="7" fill="#fff"/><rect x="11" y="6" width="1" height="2" fill="#000"/>
<rect x="12" y="4" width="1" height="9" fill="#1d6b9c"/>
</svg>
<div class="f" style="left:281px;top:403px;width:26px;height:17px;background:#fff;line-height:14px;padding-left:1px;">6</div>
<div class="f" style="left:308px;top:403px;width:119px;height:17px;background:#fff;line-height:14px;padding-left:1px;">Lindemann</div>
<svg class="ic" style="left:430px;top:405px" width="15" height="15" viewBox="0 0 15 15" shape-rendering="crispEdges">
<rect x="0" y="0" width="15" height="15" rx="1" fill="#c9c5c9"/>
<rect x="0" y="0" width="15" height="1" fill="#e6dede"/><rect x="0" y="0" width="1" height="15" fill="#e0dada"/>
<rect x="14" y="0" width="1" height="15" fill="#6584a4"/><rect x="0" y="14" width="15" height="1" fill="#6584a4"/>
<rect x="1" y="2" width="7" height="6" fill="#fff"/><rect x="1" y="1" width="7" height="1" fill="#1d6b9c"/><rect x="8" y="1" width="1" height="1" fill="#000"/>
<rect x="1" y="8" width="2" height="1" fill="#000"/>
<rect x="2" y="3" width="11" height="2" fill="#000"/>
<rect x="2" y="5" width="1" height="7" fill="#000"/>
<rect x="3" y="5" width="7" height="7" fill="#fff"/>
<rect x="2" y="12" width="11" height="1" fill="#e8e8e8"/>
<polygon points="4,6 6,7.8 4,9.6" fill="#0000ff" shape-rendering="auto"/>
<rect x="7" y="6" width="2" height="1" fill="#ff0000"/><rect x="7" y="8" width="2" height="1" fill="#ff0000"/><rect x="7" y="10" width="2" height="1" fill="#ff0000"/>
<rect x="10" y="5" width="1" height="7" fill="#1d6b9c"/><rect x="11" y="5" width="1" height="7" fill="#fff"/><rect x="11" y="6" width="1" height="2" fill="#000"/>
<rect x="12" y="4" width="1" height="9" fill="#1d6b9c"/>
</svg>
<div class="f" style="left:447px;top:403px;width:25px;height:17px;background:#fff;line-height:14px;padding-left:1px;">6</div>
<div class="f" style="left:473px;top:403px;width:118px;height:17px;background:#fff;line-height:14px;padding-left:1px;">Lindemann</div>
<svg class="ic" style="left:595px;top:405px" width="15" height="15" viewBox="0 0 15 15" shape-rendering="crispEdges">
<rect x="0" y="0" width="15" height="15" rx="1" fill="#c9c5c9"/>
<rect x="0" y="0" width="15" height="1" fill="#e6dede"/><rect x="0" y="0" width="1" height="15" fill="#e0dada"/>
<rect x="14" y="0" width="1" height="15" fill="#6584a4"/><rect x="0" y="14" width="15" height="1" fill="#6584a4"/>
<rect x="1" y="2" width="7" height="6" fill="#fff"/><rect x="1" y="1" width="7" height="1" fill="#1d6b9c"/><rect x="8" y="1" width="1" height="1" fill="#000"/>
<rect x="1" y="8" width="2" height="1" fill="#000"/>
<rect x="2" y="3" width="11" height="2" fill="#000"/>
<rect x="2" y="5" width="1" height="7" fill="#000"/>
<rect x="3" y="5" width="7" height="7" fill="#fff"/>
<rect x="2" y="12" width="11" height="1" fill="#e8e8e8"/>
<polygon points="4,6 6,7.8 4,9.6" fill="#0000ff" shape-rendering="auto"/>
<rect x="7" y="6" width="2" height="1" fill="#ff0000"/><rect x="7" y="8" width="2" height="1" fill="#ff0000"/><rect x="7" y="10" width="2" height="1" fill="#ff0000"/>
<rect x="10" y="5" width="1" height="7" fill="#1d6b9c"/><rect x="11" y="5" width="1" height="7" fill="#fff"/><rect x="11" y="6" width="1" height="2" fill="#000"/>
<rect x="12" y="4" width="1" height="9" fill="#1d6b9c"/>
</svg>
<div class="f" style="left:612px;top:403px;width:26px;height:17px;background:#fff;line-height:14px;padding-left:1px;">60</div>
<div class="f" style="left:639px;top:403px;width:79px;height:17px;background:#fff;line-height:14px;padding-left:1px;">ENDKTR</div>
<svg class="ic" style="left:721px;top:405px" width="15" height="15" viewBox="0 0 15 15" shape-rendering="crispEdges">
<rect x="0" y="0" width="15" height="15" rx="1" fill="#c9c5c9"/>
<rect x="0" y="0" width="15" height="1" fill="#e6dede"/><rect x="0" y="0" width="1" height="15" fill="#e0dada"/>
<rect x="14" y="0" width="1" height="15" fill="#6584a4"/><rect x="0" y="14" width="15" height="1" fill="#6584a4"/>
<rect x="1" y="2" width="7" height="6" fill="#fff"/><rect x="1" y="1" width="7" height="1" fill="#1d6b9c"/><rect x="8" y="1" width="1" height="1" fill="#000"/>
<rect x="1" y="8" width="2" height="1" fill="#000"/>
<rect x="2" y="3" width="11" height="2" fill="#000"/>
<rect x="2" y="5" width="1" height="7" fill="#000"/>
<rect x="3" y="5" width="7" height="7" fill="#fff"/>
<rect x="2" y="12" width="11" height="1" fill="#e8e8e8"/>
<polygon points="4,6 6,7.8 4,9.6" fill="#0000ff" shape-rendering="auto"/>
<rect x="7" y="6" width="2" height="1" fill="#ff0000"/><rect x="7" y="8" width="2" height="1" fill="#ff0000"/><rect x="7" y="10" width="2" height="1" fill="#ff0000"/>
<rect x="10" y="5" width="1" height="7" fill="#1d6b9c"/><rect x="11" y="5" width="1" height="7" fill="#fff"/><rect x="11" y="6" width="1" height="2" fill="#000"/>
<rect x="12" y="4" width="1" height="9" fill="#1d6b9c"/>
</svg>
<div class="f" style="left:737px;top:403px;width:26px;height:17px;background:#fff;line-height:14px;text-align:right;padding-right:1px;">3</div>
<div class="a" style="left:791px;top:406px;width:10px;height:10px;border-left:1px solid #1c2b40;border-top:1px solid #1c2b40;background:transparent"></div>
<div class="b" style="left:826px;top:405px;width:85px;padding-right:2px;height:14px;line-height:18px;letter-spacing:0.35px;text-indent:1px">Bedarfsprüfung</div>
<div class="f" style="left:17px;top:421px;width:33px;height:17px;background:#fff;line-height:14px;padding-left:1px;">60</div>
<div class="f" style="left:51px;top:421px;width:79px;height:17px;background:#fff;line-height:14px;padding-left:1px;">ENDKTR</div>
<svg class="ic" style="left:133px;top:423px" width="15" height="15" viewBox="0 0 15 15" shape-rendering="crispEdges">
<rect x="0" y="0" width="15" height="15" rx="1" fill="#c9c5c9"/>
<rect x="0" y="0" width="15" height="1" fill="#e6dede"/><rect x="0" y="0" width="1" height="15" fill="#e0dada"/>
<rect x="14" y="0" width="1" height="15" fill="#6584a4"/><rect x="0" y="14" width="15" height="1" fill="#6584a4"/>
<rect x="1" y="2" width="7" height="6" fill="#fff"/><rect x="1" y="1" width="7" height="1" fill="#1d6b9c"/><rect x="8" y="1" width="1" height="1" fill="#000"/>
<rect x="1" y="8" width="2" height="1" fill="#000"/>
<rect x="2" y="3" width="11" height="2" fill="#000"/>
<rect x="2" y="5" width="1" height="7" fill="#000"/>
<rect x="3" y="5" width="7" height="7" fill="#fff"/>
<rect x="2" y="12" width="11" height="1" fill="#e8e8e8"/>
<polygon points="4,6 6,7.8 4,9.6" fill="#0000ff" shape-rendering="auto"/>
<rect x="7" y="6" width="2" height="1" fill="#ff0000"/><rect x="7" y="8" width="2" height="1" fill="#ff0000"/><rect x="7" y="10" width="2" height="1" fill="#ff0000"/>
<rect x="10" y="5" width="1" height="7" fill="#1d6b9c"/><rect x="11" y="5" width="1" height="7" fill="#fff"/><rect x="11" y="6" width="1" height="2" fill="#000"/>
<rect x="12" y="4" width="1" height="9" fill="#1d6b9c"/>
</svg>
<div class="f" style="left:149px;top:421px;width:33px;height:17px;background:#fff;line-height:14px;padding-left:1px;">35</div>
<div class="f" style="left:183px;top:421px;width:79px;height:17px;background:#fff;line-height:14px;padding-left:1px;">Ungarn 2</div>
<svg class="ic" style="left:265px;top:423px" width="15" height="15" viewBox="0 0 15 15" shape-rendering="crispEdges">
<rect x="0" y="0" width="15" height="15" rx="1" fill="#c9c5c9"/>
<rect x="0" y="0" width="15" height="1" fill="#e6dede"/><rect x="0" y="0" width="1" height="15" fill="#e0dada"/>
<rect x="14" y="0" width="1" height="15" fill="#6584a4"/><rect x="0" y="14" width="15" height="1" fill="#6584a4"/>
<rect x="1" y="2" width="7" height="6" fill="#fff"/><rect x="1" y="1" width="7" height="1" fill="#1d6b9c"/><rect x="8" y="1" width="1" height="1" fill="#000"/>
<rect x="1" y="8" width="2" height="1" fill="#000"/>
<rect x="2" y="3" width="11" height="2" fill="#000"/>
<rect x="2" y="5" width="1" height="7" fill="#000"/>
<rect x="3" y="5" width="7" height="7" fill="#fff"/>
<rect x="2" y="12" width="11" height="1" fill="#e8e8e8"/>
<polygon points="4,6 6,7.8 4,9.6" fill="#0000ff" shape-rendering="auto"/>
<rect x="7" y="6" width="2" height="1" fill="#ff0000"/><rect x="7" y="8" width="2" height="1" fill="#ff0000"/><rect x="7" y="10" width="2" height="1" fill="#ff0000"/>
<rect x="10" y="5" width="1" height="7" fill="#1d6b9c"/><rect x="11" y="5" width="1" height="7" fill="#fff"/><rect x="11" y="6" width="1" height="2" fill="#000"/>
<rect x="12" y="4" width="1" height="9" fill="#1d6b9c"/>
</svg>
<div class="f" style="left:281px;top:421px;width:26px;height:17px;background:#fff;line-height:14px;padding-left:1px;">6</div>
<div class="f" style="left:308px;top:421px;width:119px;height:17px;background:#fff;line-height:14px;padding-left:1px;">Lindemann</div>
<svg class="ic" style="left:430px;top:423px" width="15" height="15" viewBox="0 0 15 15" shape-rendering="crispEdges">
<rect x="0" y="0" width="15" height="15" rx="1" fill="#c9c5c9"/>
<rect x="0" y="0" width="15" height="1" fill="#e6dede"/><rect x="0" y="0" width="1" height="15" fill="#e0dada"/>
<rect x="14" y="0" width="1" height="15" fill="#6584a4"/><rect x="0" y="14" width="15" height="1" fill="#6584a4"/>
<rect x="1" y="2" width="7" height="6" fill="#fff"/><rect x="1" y="1" width="7" height="1" fill="#1d6b9c"/><rect x="8" y="1" width="1" height="1" fill="#000"/>
<rect x="1" y="8" width="2" height="1" fill="#000"/>
<rect x="2" y="3" width="11" height="2" fill="#000"/>
<rect x="2" y="5" width="1" height="7" fill="#000"/>
<rect x="3" y="5" width="7" height="7" fill="#fff"/>
<rect x="2" y="12" width="11" height="1" fill="#e8e8e8"/>
<polygon points="4,6 6,7.8 4,9.6" fill="#0000ff" shape-rendering="auto"/>
<rect x="7" y="6" width="2" height="1" fill="#ff0000"/><rect x="7" y="8" width="2" height="1" fill="#ff0000"/><rect x="7" y="10" width="2" height="1" fill="#ff0000"/>
<rect x="10" y="5" width="1" height="7" fill="#1d6b9c"/><rect x="11" y="5" width="1" height="7" fill="#fff"/><rect x="11" y="6" width="1" height="2" fill="#000"/>
<rect x="12" y="4" width="1" height="9" fill="#1d6b9c"/>
</svg>
<div class="f" style="left:447px;top:421px;width:25px;height:17px;background:#fff;line-height:14px;padding-left:1px;">6</div>
<div class="f" style="left:473px;top:421px;width:118px;height:17px;background:#fff;line-height:14px;padding-left:1px;">Lindemann</div>
<svg class="ic" style="left:595px;top:423px" width="15" height="15" viewBox="0 0 15 15" shape-rendering="crispEdges">
<rect x="0" y="0" width="15" height="15" rx="1" fill="#c9c5c9"/>
<rect x="0" y="0" width="15" height="1" fill="#e6dede"/><rect x="0" y="0" width="1" height="15" fill="#e0dada"/>
<rect x="14" y="0" width="1" height="15" fill="#6584a4"/><rect x="0" y="14" width="15" height="1" fill="#6584a4"/>
<rect x="1" y="2" width="7" height="6" fill="#fff"/><rect x="1" y="1" width="7" height="1" fill="#1d6b9c"/><rect x="8" y="1" width="1" height="1" fill="#000"/>
<rect x="1" y="8" width="2" height="1" fill="#000"/>
<rect x="2" y="3" width="11" height="2" fill="#000"/>
<rect x="2" y="5" width="1" height="7" fill="#000"/>
<rect x="3" y="5" width="7" height="7" fill="#fff"/>
<rect x="2" y="12" width="11" height="1" fill="#e8e8e8"/>
<polygon points="4,6 6,7.8 4,9.6" fill="#0000ff" shape-rendering="auto"/>
<rect x="7" y="6" width="2" height="1" fill="#ff0000"/><rect x="7" y="8" width="2" height="1" fill="#ff0000"/><rect x="7" y="10" width="2" height="1" fill="#ff0000"/>
<rect x="10" y="5" width="1" height="7" fill="#1d6b9c"/><rect x="11" y="5" width="1" height="7" fill="#fff"/><rect x="11" y="6" width="1" height="2" fill="#000"/>
<rect x="12" y="4" width="1" height="9" fill="#1d6b9c"/>
</svg>
<div class="f" style="left:612px;top:421px;width:26px;height:17px;background:#fff;line-height:14px;padding-left:1px;"></div>
<div class="f" style="left:639px;top:421px;width:79px;height:17px;background:#fff;line-height:14px;padding-left:1px;"></div>
<svg class="ic" style="left:721px;top:423px" width="15" height="15" viewBox="0 0 15 15" shape-rendering="crispEdges">
<rect x="0" y="0" width="15" height="15" rx="1" fill="#c9c5c9"/>
<rect x="0" y="0" width="15" height="1" fill="#e6dede"/><rect x="0" y="0" width="1" height="15" fill="#e0dada"/>
<rect x="14" y="0" width="1" height="15" fill="#6584a4"/><rect x="0" y="14" width="15" height="1" fill="#6584a4"/>
<rect x="1" y="2" width="7" height="6" fill="#fff"/><rect x="1" y="1" width="7" height="1" fill="#1d6b9c"/><rect x="8" y="1" width="1" height="1" fill="#000"/>
<rect x="1" y="8" width="2" height="1" fill="#000"/>
<rect x="2" y="3" width="11" height="2" fill="#000"/>
<rect x="2" y="5" width="1" height="7" fill="#000"/>
<rect x="3" y="5" width="7" height="7" fill="#fff"/>
<rect x="2" y="12" width="11" height="1" fill="#e8e8e8"/>
<polygon points="4,6 6,7.8 4,9.6" fill="#0000ff" shape-rendering="auto"/>
<rect x="7" y="6" width="2" height="1" fill="#ff0000"/><rect x="7" y="8" width="2" height="1" fill="#ff0000"/><rect x="7" y="10" width="2" height="1" fill="#ff0000"/>
<rect x="10" y="5" width="1" height="7" fill="#1d6b9c"/><rect x="11" y="5" width="1" height="7" fill="#fff"/><rect x="11" y="6" width="1" height="2" fill="#000"/>
<rect x="12" y="4" width="1" height="9" fill="#1d6b9c"/>
</svg>
<div class="f" style="left:737px;top:421px;width:26px;height:17px;background:#fff;line-height:14px;text-align:right;padding-right:1px;">0</div>
<div class="a" style="left:791px;top:424px;width:10px;height:10px;border-left:1px solid #1c2b40;border-top:1px solid #1c2b40;background:transparent"></div>
<div class="b" style="left:826px;top:423px;width:85px;padding-right:2px;height:14px;line-height:18px;letter-spacing:0.35px;text-indent:1px">Bedarfsprüfung</div>
<div class="f" style="left:17px;top:440px;width:33px;height:17px;background:#fff;line-height:14px;padding-left:1px;"></div>
<div class="f" style="left:51px;top:440px;width:79px;height:17px;background:#fff;line-height:14px;padding-left:1px;"></div>
<svg class="ic" style="left:133px;top:442px" width="15" height="15" viewBox="0 0 15 15" shape-rendering="crispEdges">
<rect x="0" y="0" width="15" height="15" rx="1" fill="#c9c5c9"/>
<rect x="0" y="0" width="15" height="1" fill="#e6dede"/><rect x="0" y="0" width="1" height="15" fill="#e0dada"/>
<rect x="14" y="0" width="1" height="15" fill="#6584a4"/><rect x="0" y="14" width="15" height="1" fill="#6584a4"/>
<rect x="1" y="2" width="7" height="6" fill="#fff"/><rect x="1" y="1" width="7" height="1" fill="#8e8e8e"/><rect x="8" y="1" width="1" height="1" fill="#808080"/>
<rect x="1" y="8" width="2" height="1" fill="#808080"/>
<rect x="2" y="3" width="11" height="2" fill="#808080"/>
<rect x="2" y="5" width="1" height="7" fill="#808080"/>
<rect x="3" y="5" width="7" height="7" fill="#fff"/>
<rect x="2" y="12" width="11" height="1" fill="#e8e8e8"/>
<polygon points="4,6 6,7.8 4,9.6" fill="#a0a0a0" shape-rendering="auto"/>
<rect x="7" y="6" width="2" height="1" fill="#909090"/><rect x="7" y="8" width="2" height="1" fill="#909090"/><rect x="7" y="10" width="2" height="1" fill="#909090"/>
<rect x="10" y="5" width="1" height="7" fill="#8e8e8e"/><rect x="11" y="5" width="1" height="7" fill="#fff"/><rect x="11" y="6" width="1" height="2" fill="#808080"/>
<rect x="12" y="4" width="1" height="9" fill="#8e8e8e"/>
</svg>
<div class="f" style="left:149px;top:440px;width:33px;height:17px;background:#fff;line-height:14px;padding-left:1px;"></div>
<div class="f" style="left:183px;top:440px;width:79px;height:17px;background:#fff;line-height:14px;padding-left:1px;"></div>
<svg class="ic" style="left:265px;top:442px" width="15" height="15" viewBox="0 0 15 15" shape-rendering="crispEdges">
<rect x="0" y="0" width="15" height="15" rx="1" fill="#c9c5c9"/>
<rect x="0" y="0" width="15" height="1" fill="#e6dede"/><rect x="0" y="0" width="1" height="15" fill="#e0dada"/>
<rect x="14" y="0" width="1" height="15" fill="#6584a4"/><rect x="0" y="14" width="15" height="1" fill="#6584a4"/>
<rect x="1" y="2" width="7" height="6" fill="#fff"/><rect x="1" y="1" width="7" height="1" fill="#8e8e8e"/><rect x="8" y="1" width="1" height="1" fill="#808080"/>
<rect x="1" y="8" width="2" height="1" fill="#808080"/>
<rect x="2" y="3" width="11" height="2" fill="#808080"/>
<rect x="2" y="5" width="1" height="7" fill="#808080"/>
<rect x="3" y="5" width="7" height="7" fill="#fff"/>
<rect x="2" y="12" width="11" height="1" fill="#e8e8e8"/>
<polygon points="4,6 6,7.8 4,9.6" fill="#a0a0a0" shape-rendering="auto"/>
<rect x="7" y="6" width="2" height="1" fill="#909090"/><rect x="7" y="8" width="2" height="1" fill="#909090"/><rect x="7" y="10" width="2" height="1" fill="#909090"/>
<rect x="10" y="5" width="1" height="7" fill="#8e8e8e"/><rect x="11" y="5" width="1" height="7" fill="#fff"/><rect x="11" y="6" width="1" height="2" fill="#808080"/>
<rect x="12" y="4" width="1" height="9" fill="#8e8e8e"/>
</svg>
<div class="f" style="left:281px;top:440px;width:26px;height:17px;background:#fff;line-height:14px;padding-left:1px;"></div>
<div class="f" style="left:308px;top:440px;width:119px;height:17px;background:#fff;line-height:14px;padding-left:1px;"></div>
<svg class="ic" style="left:430px;top:442px" width="15" height="15" viewBox="0 0 15 15" shape-rendering="crispEdges">
<rect x="0" y="0" width="15" height="15" rx="1" fill="#c9c5c9"/>
<rect x="0" y="0" width="15" height="1" fill="#e6dede"/><rect x="0" y="0" width="1" height="15" fill="#e0dada"/>
<rect x="14" y="0" width="1" height="15" fill="#6584a4"/><rect x="0" y="14" width="15" height="1" fill="#6584a4"/>
<rect x="1" y="2" width="7" height="6" fill="#fff"/><rect x="1" y="1" width="7" height="1" fill="#8e8e8e"/><rect x="8" y="1" width="1" height="1" fill="#808080"/>
<rect x="1" y="8" width="2" height="1" fill="#808080"/>
<rect x="2" y="3" width="11" height="2" fill="#808080"/>
<rect x="2" y="5" width="1" height="7" fill="#808080"/>
<rect x="3" y="5" width="7" height="7" fill="#fff"/>
<rect x="2" y="12" width="11" height="1" fill="#e8e8e8"/>
<polygon points="4,6 6,7.8 4,9.6" fill="#a0a0a0" shape-rendering="auto"/>
<rect x="7" y="6" width="2" height="1" fill="#909090"/><rect x="7" y="8" width="2" height="1" fill="#909090"/><rect x="7" y="10" width="2" height="1" fill="#909090"/>
<rect x="10" y="5" width="1" height="7" fill="#8e8e8e"/><rect x="11" y="5" width="1" height="7" fill="#fff"/><rect x="11" y="6" width="1" height="2" fill="#808080"/>
<rect x="12" y="4" width="1" height="9" fill="#8e8e8e"/>
</svg>
<div class="f" style="left:447px;top:440px;width:25px;height:17px;background:#fff;line-height:14px;padding-left:1px;"></div>
<div class="f" style="left:473px;top:440px;width:118px;height:17px;background:#fff;line-height:14px;padding-left:1px;"></div>
<svg class="ic" style="left:595px;top:442px" width="15" height="15" viewBox="0 0 15 15" shape-rendering="crispEdges">
<rect x="0" y="0" width="15" height="15" rx="1" fill="#c9c5c9"/>
<rect x="0" y="0" width="15" height="1" fill="#e6dede"/><rect x="0" y="0" width="1" height="15" fill="#e0dada"/>
<rect x="14" y="0" width="1" height="15" fill="#6584a4"/><rect x="0" y="14" width="15" height="1" fill="#6584a4"/>
<rect x="1" y="2" width="7" height="6" fill="#fff"/><rect x="1" y="1" width="7" height="1" fill="#8e8e8e"/><rect x="8" y="1" width="1" height="1" fill="#808080"/>
<rect x="1" y="8" width="2" height="1" fill="#808080"/>
<rect x="2" y="3" width="11" height="2" fill="#808080"/>
<rect x="2" y="5" width="1" height="7" fill="#808080"/>
<rect x="3" y="5" width="7" height="7" fill="#fff"/>
<rect x="2" y="12" width="11" height="1" fill="#e8e8e8"/>
<polygon points="4,6 6,7.8 4,9.6" fill="#a0a0a0" shape-rendering="auto"/>
<rect x="7" y="6" width="2" height="1" fill="#909090"/><rect x="7" y="8" width="2" height="1" fill="#909090"/><rect x="7" y="10" width="2" height="1" fill="#909090"/>
<rect x="10" y="5" width="1" height="7" fill="#8e8e8e"/><rect x="11" y="5" width="1" height="7" fill="#fff"/><rect x="11" y="6" width="1" height="2" fill="#808080"/>
<rect x="12" y="4" width="1" height="9" fill="#8e8e8e"/>
</svg>
<div class="f" style="left:612px;top:440px;width:26px;height:17px;background:#fff;line-height:14px;padding-left:1px;"></div>
<div class="f" style="left:639px;top:440px;width:79px;height:17px;background:#fff;line-height:14px;padding-left:1px;"></div>
<svg class="ic" style="left:721px;top:442px" width="15" height="15" viewBox="0 0 15 15" shape-rendering="crispEdges">
<rect x="0" y="0" width="15" height="15" rx="1" fill="#c9c5c9"/>
<rect x="0" y="0" width="15" height="1" fill="#e6dede"/><rect x="0" y="0" width="1" height="15" fill="#e0dada"/>
<rect x="14" y="0" width="1" height="15" fill="#6584a4"/><rect x="0" y="14" width="15" height="1" fill="#6584a4"/>
<rect x="1" y="2" width="7" height="6" fill="#fff"/><rect x="1" y="1" width="7" height="1" fill="#8e8e8e"/><rect x="8" y="1" width="1" height="1" fill="#808080"/>
<rect x="1" y="8" width="2" height="1" fill="#808080"/>
<rect x="2" y="3" width="11" height="2" fill="#808080"/>
<rect x="2" y="5" width="1" height="7" fill="#808080"/>
<rect x="3" y="5" width="7" height="7" fill="#fff"/>
<rect x="2" y="12" width="11" height="1" fill="#e8e8e8"/>
<polygon points="4,6 6,7.8 4,9.6" fill="#a0a0a0" shape-rendering="auto"/>
<rect x="7" y="6" width="2" height="1" fill="#909090"/><rect x="7" y="8" width="2" height="1" fill="#909090"/><rect x="7" y="10" width="2" height="1" fill="#909090"/>
<rect x="10" y="5" width="1" height="7" fill="#8e8e8e"/><rect x="11" y="5" width="1" height="7" fill="#fff"/><rect x="11" y="6" width="1" height="2" fill="#808080"/>
<rect x="12" y="4" width="1" height="9" fill="#8e8e8e"/>
</svg>
<div class="f" style="left:737px;top:440px;width:26px;height:17px;background:#fff;line-height:14px;text-align:right;padding-right:1px;"></div>
<div class="a" style="left:791px;top:443px;width:10px;height:10px;border-left:1px solid #1c2b40;border-top:1px solid #1c2b40;background:#cbcbcb"></div>
<div class="b d" style="left:826px;top:442px;width:85px;padding-right:2px;height:14px;line-height:18px;letter-spacing:0.35px;text-indent:1px">Bedarfsprüfung</div>
<div class="f" style="left:17px;top:459px;width:33px;height:17px;background:#fff;line-height:14px;padding-left:1px;"></div>
<div class="f" style="left:51px;top:459px;width:79px;height:17px;background:#fff;line-height:14px;padding-left:1px;"></div>
<svg class="ic" style="left:133px;top:461px" width="15" height="15" viewBox="0 0 15 15" shape-rendering="crispEdges">
<rect x="0" y="0" width="15" height="15" rx="1" fill="#c9c5c9"/>
<rect x="0" y="0" width="15" height="1" fill="#e6dede"/><rect x="0" y="0" width="1" height="15" fill="#e0dada"/>
<rect x="14" y="0" width="1" height="15" fill="#6584a4"/><rect x="0" y="14" width="15" height="1" fill="#6584a4"/>
<rect x="1" y="2" width="7" height="6" fill="#fff"/><rect x="1" y="1" width="7" height="1" fill="#8e8e8e"/><rect x="8" y="1" width="1" height="1" fill="#808080"/>
<rect x="1" y="8" width="2" height="1" fill="#808080"/>
<rect x="2" y="3" width="11" height="2" fill="#808080"/>
<rect x="2" y="5" width="1" height="7" fill="#808080"/>
<rect x="3" y="5" width="7" height="7" fill="#fff"/>
<rect x="2" y="12" width="11" height="1" fill="#e8e8e8"/>
<polygon points="4,6 6,7.8 4,9.6" fill="#a0a0a0" shape-rendering="auto"/>
<rect x="7" y="6" width="2" height="1" fill="#909090"/><rect x="7" y="8" width="2" height="1" fill="#909090"/><rect x="7" y="10" width="2" height="1" fill="#909090"/>
<rect x="10" y="5" width="1" height="7" fill="#8e8e8e"/><rect x="11" y="5" width="1" height="7" fill="#fff"/><rect x="11" y="6" width="1" height="2" fill="#808080"/>
<rect x="12" y="4" width="1" height="9" fill="#8e8e8e"/>
</svg>
<div class="f" style="left:149px;top:459px;width:33px;height:17px;background:#fff;line-height:14px;padding-left:1px;"></div>
<div class="f" style="left:183px;top:459px;width:79px;height:17px;background:#fff;line-height:14px;padding-left:1px;"></div>
<svg class="ic" style="left:265px;top:461px" width="15" height="15" viewBox="0 0 15 15" shape-rendering="crispEdges">
<rect x="0" y="0" width="15" height="15" rx="1" fill="#c9c5c9"/>
<rect x="0" y="0" width="15" height="1" fill="#e6dede"/><rect x="0" y="0" width="1" height="15" fill="#e0dada"/>
<rect x="14" y="0" width="1" height="15" fill="#6584a4"/><rect x="0" y="14" width="15" height="1" fill="#6584a4"/>
<rect x="1" y="2" width="7" height="6" fill="#fff"/><rect x="1" y="1" width="7" height="1" fill="#8e8e8e"/><rect x="8" y="1" width="1" height="1" fill="#808080"/>
<rect x="1" y="8" width="2" height="1" fill="#808080"/>
<rect x="2" y="3" width="11" height="2" fill="#808080"/>
<rect x="2" y="5" width="1" height="7" fill="#808080"/>
<rect x="3" y="5" width="7" height="7" fill="#fff"/>
<rect x="2" y="12" width="11" height="1" fill="#e8e8e8"/>
<polygon points="4,6 6,7.8 4,9.6" fill="#a0a0a0" shape-rendering="auto"/>
<rect x="7" y="6" width="2" height="1" fill="#909090"/><rect x="7" y="8" width="2" height="1" fill="#909090"/><rect x="7" y="10" width="2" height="1" fill="#909090"/>
<rect x="10" y="5" width="1" height="7" fill="#8e8e8e"/><rect x="11" y="5" width="1" height="7" fill="#fff"/><rect x="11" y="6" width="1" height="2" fill="#808080"/>
<rect x="12" y="4" width="1" height="9" fill="#8e8e8e"/>
</svg>
<div class="f" style="left:281px;top:459px;width:26px;height:17px;background:#fff;line-height:14px;padding-left:1px;"></div>
<div class="f" style="left:308px;top:459px;width:119px;height:17px;background:#fff;line-height:14px;padding-left:1px;"></div>
<svg class="ic" style="left:430px;top:461px" width="15" height="15" viewBox="0 0 15 15" shape-rendering="crispEdges">
<rect x="0" y="0" width="15" height="15" rx="1" fill="#c9c5c9"/>
<rect x="0" y="0" width="15" height="1" fill="#e6dede"/><rect x="0" y="0" width="1" height="15" fill="#e0dada"/>
<rect x="14" y="0" width="1" height="15" fill="#6584a4"/><rect x="0" y="14" width="15" height="1" fill="#6584a4"/>
<rect x="1" y="2" width="7" height="6" fill="#fff"/><rect x="1" y="1" width="7" height="1" fill="#8e8e8e"/><rect x="8" y="1" width="1" height="1" fill="#808080"/>
<rect x="1" y="8" width="2" height="1" fill="#808080"/>
<rect x="2" y="3" width="11" height="2" fill="#808080"/>
<rect x="2" y="5" width="1" height="7" fill="#808080"/>
<rect x="3" y="5" width="7" height="7" fill="#fff"/>
<rect x="2" y="12" width="11" height="1" fill="#e8e8e8"/>
<polygon points="4,6 6,7.8 4,9.6" fill="#a0a0a0" shape-rendering="auto"/>
<rect x="7" y="6" width="2" height="1" fill="#909090"/><rect x="7" y="8" width="2" height="1" fill="#909090"/><rect x="7" y="10" width="2" height="1" fill="#909090"/>
<rect x="10" y="5" width="1" height="7" fill="#8e8e8e"/><rect x="11" y="5" width="1" height="7" fill="#fff"/><rect x="11" y="6" width="1" height="2" fill="#808080"/>
<rect x="12" y="4" width="1" height="9" fill="#8e8e8e"/>
</svg>
<div class="f" style="left:447px;top:459px;width:25px;height:17px;background:#fff;line-height:14px;padding-left:1px;"></div>
<div class="f" style="left:473px;top:459px;width:118px;height:17px;background:#fff;line-height:14px;padding-left:1px;"></div>
<svg class="ic" style="left:595px;top:461px" width="15" height="15" viewBox="0 0 15 15" shape-rendering="crispEdges">
<rect x="0" y="0" width="15" height="15" rx="1" fill="#c9c5c9"/>
<rect x="0" y="0" width="15" height="1" fill="#e6dede"/><rect x="0" y="0" width="1" height="15" fill="#e0dada"/>
<rect x="14" y="0" width="1" height="15" fill="#6584a4"/><rect x="0" y="14" width="15" height="1" fill="#6584a4"/>
<rect x="1" y="2" width="7" height="6" fill="#fff"/><rect x="1" y="1" width="7" height="1" fill="#8e8e8e"/><rect x="8" y="1" width="1" height="1" fill="#808080"/>
<rect x="1" y="8" width="2" height="1" fill="#808080"/>
<rect x="2" y="3" width="11" height="2" fill="#808080"/>
<rect x="2" y="5" width="1" height="7" fill="#808080"/>
<rect x="3" y="5" width="7" height="7" fill="#fff"/>
<rect x="2" y="12" width="11" height="1" fill="#e8e8e8"/>
<polygon points="4,6 6,7.8 4,9.6" fill="#a0a0a0" shape-rendering="auto"/>
<rect x="7" y="6" width="2" height="1" fill="#909090"/><rect x="7" y="8" width="2" height="1" fill="#909090"/><rect x="7" y="10" width="2" height="1" fill="#909090"/>
<rect x="10" y="5" width="1" height="7" fill="#8e8e8e"/><rect x="11" y="5" width="1" height="7" fill="#fff"/><rect x="11" y="6" width="1" height="2" fill="#808080"/>
<rect x="12" y="4" width="1" height="9" fill="#8e8e8e"/>
</svg>
<div class="f" style="left:612px;top:459px;width:26px;height:17px;background:#fff;line-height:14px;padding-left:1px;"></div>
<div class="f" style="left:639px;top:459px;width:79px;height:17px;background:#fff;line-height:14px;padding-left:1px;"></div>
<svg class="ic" style="left:721px;top:461px" width="15" height="15" viewBox="0 0 15 15" shape-rendering="crispEdges">
<rect x="0" y="0" width="15" height="15" rx="1" fill="#c9c5c9"/>
<rect x="0" y="0" width="15" height="1" fill="#e6dede"/><rect x="0" y="0" width="1" height="15" fill="#e0dada"/>
<rect x="14" y="0" width="1" height="15" fill="#6584a4"/><rect x="0" y="14" width="15" height="1" fill="#6584a4"/>
<rect x="1" y="2" width="7" height="6" fill="#fff"/><rect x="1" y="1" width="7" height="1" fill="#8e8e8e"/><rect x="8" y="1" width="1" height="1" fill="#808080"/>
<rect x="1" y="8" width="2" height="1" fill="#808080"/>
<rect x="2" y="3" width="11" height="2" fill="#808080"/>
<rect x="2" y="5" width="1" height="7" fill="#808080"/>
<rect x="3" y="5" width="7" height="7" fill="#fff"/>
<rect x="2" y="12" width="11" height="1" fill="#e8e8e8"/>
<polygon points="4,6 6,7.8 4,9.6" fill="#a0a0a0" shape-rendering="auto"/>
<rect x="7" y="6" width="2" height="1" fill="#909090"/><rect x="7" y="8" width="2" height="1" fill="#909090"/><rect x="7" y="10" width="2" height="1" fill="#909090"/>
<rect x="10" y="5" width="1" height="7" fill="#8e8e8e"/><rect x="11" y="5" width="1" height="7" fill="#fff"/><rect x="11" y="6" width="1" height="2" fill="#808080"/>
<rect x="12" y="4" width="1" height="9" fill="#8e8e8e"/>
</svg>
<div class="f" style="left:737px;top:459px;width:26px;height:17px;background:#fff;line-height:14px;text-align:right;padding-right:1px;"></div>
<div class="a" style="left:791px;top:462px;width:10px;height:10px;border-left:1px solid #1c2b40;border-top:1px solid #1c2b40;background:#cbcbcb"></div>
<div class="b d" style="left:826px;top:461px;width:85px;padding-right:2px;height:14px;line-height:18px;letter-spacing:0.35px;text-indent:1px">Bedarfsprüfung</div>
<div class="f" style="left:17px;top:477px;width:33px;height:17px;background:#fff;line-height:14px;padding-left:1px;"></div>
<div class="f" style="left:51px;top:477px;width:79px;height:17px;background:#fff;line-height:14px;padding-left:1px;"></div>
<svg class="ic" style="left:133px;top:479px" width="15" height="15" viewBox="0 0 15 15" shape-rendering="crispEdges">
<rect x="0" y="0" width="15" height="15" rx="1" fill="#c9c5c9"/>
<rect x="0" y="0" width="15" height="1" fill="#e6dede"/><rect x="0" y="0" width="1" height="15" fill="#e0dada"/>
<rect x="14" y="0" width="1" height="15" fill="#6584a4"/><rect x="0" y="14" width="15" height="1" fill="#6584a4"/>
<rect x="1" y="2" width="7" height="6" fill="#fff"/><rect x="1" y="1" width="7" height="1" fill="#8e8e8e"/><rect x="8" y="1" width="1" height="1" fill="#808080"/>
<rect x="1" y="8" width="2" height="1" fill="#808080"/>
<rect x="2" y="3" width="11" height="2" fill="#808080"/>
<rect x="2" y="5" width="1" height="7" fill="#808080"/>
<rect x="3" y="5" width="7" height="7" fill="#fff"/>
<rect x="2" y="12" width="11" height="1" fill="#e8e8e8"/>
<polygon points="4,6 6,7.8 4,9.6" fill="#a0a0a0" shape-rendering="auto"/>
<rect x="7" y="6" width="2" height="1" fill="#909090"/><rect x="7" y="8" width="2" height="1" fill="#909090"/><rect x="7" y="10" width="2" height="1" fill="#909090"/>
<rect x="10" y="5" width="1" height="7" fill="#8e8e8e"/><rect x="11" y="5" width="1" height="7" fill="#fff"/><rect x="11" y="6" width="1" height="2" fill="#808080"/>
<rect x="12" y="4" width="1" height="9" fill="#8e8e8e"/>
</svg>
<div class="f" style="left:149px;top:477px;width:33px;height:17px;background:#fff;line-height:14px;padding-left:1px;"></div>
<div class="f" style="left:183px;top:477px;width:79px;height:17px;background:#fff;line-height:14px;padding-left:1px;"></div>
<svg class="ic" style="left:265px;top:479px" width="15" height="15" viewBox="0 0 15 15" shape-rendering="crispEdges">
<rect x="0" y="0" width="15" height="15" rx="1" fill="#c9c5c9"/>
<rect x="0" y="0" width="15" height="1" fill="#e6dede"/><rect x="0" y="0" width="1" height="15" fill="#e0dada"/>
<rect x="14" y="0" width="1" height="15" fill="#6584a4"/><rect x="0" y="14" width="15" height="1" fill="#6584a4"/>
<rect x="1" y="2" width="7" height="6" fill="#fff"/><rect x="1" y="1" width="7" height="1" fill="#8e8e8e"/><rect x="8" y="1" width="1" height="1" fill="#808080"/>
<rect x="1" y="8" width="2" height="1" fill="#808080"/>
<rect x="2" y="3" width="11" height="2" fill="#808080"/>
<rect x="2" y="5" width="1" height="7" fill="#808080"/>
<rect x="3" y="5" width="7" height="7" fill="#fff"/>
<rect x="2" y="12" width="11" height="1" fill="#e8e8e8"/>
<polygon points="4,6 6,7.8 4,9.6" fill="#a0a0a0" shape-rendering="auto"/>
<rect x="7" y="6" width="2" height="1" fill="#909090"/><rect x="7" y="8" width="2" height="1" fill="#909090"/><rect x="7" y="10" width="2" height="1" fill="#909090"/>
<rect x="10" y="5" width="1" height="7" fill="#8e8e8e"/><rect x="11" y="5" width="1" height="7" fill="#fff"/><rect x="11" y="6" width="1" height="2" fill="#808080"/>
<rect x="12" y="4" width="1" height="9" fill="#8e8e8e"/>
</svg>
<div class="f" style="left:281px;top:477px;width:26px;height:17px;background:#fff;line-height:14px;padding-left:1px;"></div>
<div class="f" style="left:308px;top:477px;width:119px;height:17px;background:#fff;line-height:14px;padding-left:1px;"></div>
<svg class="ic" style="left:430px;top:479px" width="15" height="15" viewBox="0 0 15 15" shape-rendering="crispEdges">
<rect x="0" y="0" width="15" height="15" rx="1" fill="#c9c5c9"/>
<rect x="0" y="0" width="15" height="1" fill="#e6dede"/><rect x="0" y="0" width="1" height="15" fill="#e0dada"/>
<rect x="14" y="0" width="1" height="15" fill="#6584a4"/><rect x="0" y="14" width="15" height="1" fill="#6584a4"/>
<rect x="1" y="2" width="7" height="6" fill="#fff"/><rect x="1" y="1" width="7" height="1" fill="#8e8e8e"/><rect x="8" y="1" width="1" height="1" fill="#808080"/>
<rect x="1" y="8" width="2" height="1" fill="#808080"/>
<rect x="2" y="3" width="11" height="2" fill="#808080"/>
<rect x="2" y="5" width="1" height="7" fill="#808080"/>
<rect x="3" y="5" width="7" height="7" fill="#fff"/>
<rect x="2" y="12" width="11" height="1" fill="#e8e8e8"/>
<polygon points="4,6 6,7.8 4,9.6" fill="#a0a0a0" shape-rendering="auto"/>
<rect x="7" y="6" width="2" height="1" fill="#909090"/><rect x="7" y="8" width="2" height="1" fill="#909090"/><rect x="7" y="10" width="2" height="1" fill="#909090"/>
<rect x="10" y="5" width="1" height="7" fill="#8e8e8e"/><rect x="11" y="5" width="1" height="7" fill="#fff"/><rect x="11" y="6" width="1" height="2" fill="#808080"/>
<rect x="12" y="4" width="1" height="9" fill="#8e8e8e"/>
</svg>
<div class="f" style="left:447px;top:477px;width:25px;height:17px;background:#fff;line-height:14px;padding-left:1px;"></div>
<div class="f" style="left:473px;top:477px;width:118px;height:17px;background:#fff;line-height:14px;padding-left:1px;"></div>
<svg class="ic" style="left:595px;top:479px" width="15" height="15" viewBox="0 0 15 15" shape-rendering="crispEdges">
<rect x="0" y="0" width="15" height="15" rx="1" fill="#c9c5c9"/>
<rect x="0" y="0" width="15" height="1" fill="#e6dede"/><rect x="0" y="0" width="1" height="15" fill="#e0dada"/>
<rect x="14" y="0" width="1" height="15" fill="#6584a4"/><rect x="0" y="14" width="15" height="1" fill="#6584a4"/>
<rect x="1" y="2" width="7" height="6" fill="#fff"/><rect x="1" y="1" width="7" height="1" fill="#8e8e8e"/><rect x="8" y="1" width="1" height="1" fill="#808080"/>
<rect x="1" y="8" width="2" height="1" fill="#808080"/>
<rect x="2" y="3" width="11" height="2" fill="#808080"/>
<rect x="2" y="5" width="1" height="7" fill="#808080"/>
<rect x="3" y="5" width="7" height="7" fill="#fff"/>
<rect x="2" y="12" width="11" height="1" fill="#e8e8e8"/>
<polygon points="4,6 6,7.8 4,9.6" fill="#a0a0a0" shape-rendering="auto"/>
<rect x="7" y="6" width="2" height="1" fill="#909090"/><rect x="7" y="8" width="2" height="1" fill="#909090"/><rect x="7" y="10" width="2" height="1" fill="#909090"/>
<rect x="10" y="5" width="1" height="7" fill="#8e8e8e"/><rect x="11" y="5" width="1" height="7" fill="#fff"/><rect x="11" y="6" width="1" height="2" fill="#808080"/>
<rect x="12" y="4" width="1" height="9" fill="#8e8e8e"/>
</svg>
<div class="f" style="left:612px;top:477px;width:26px;height:17px;background:#fff;line-height:14px;padding-left:1px;"></div>
<div class="f" style="left:639px;top:477px;width:79px;height:17px;background:#fff;line-height:14px;padding-left:1px;"></div>
<svg class="ic" style="left:721px;top:479px" width="15" height="15" viewBox="0 0 15 15" shape-rendering="crispEdges">
<rect x="0" y="0" width="15" height="15" rx="1" fill="#c9c5c9"/>
<rect x="0" y="0" width="15" height="1" fill="#e6dede"/><rect x="0" y="0" width="1" height="15" fill="#e0dada"/>
<rect x="14" y="0" width="1" height="15" fill="#6584a4"/><rect x="0" y="14" width="15" height="1" fill="#6584a4"/>
<rect x="1" y="2" width="7" height="6" fill="#fff"/><rect x="1" y="1" width="7" height="1" fill="#8e8e8e"/><rect x="8" y="1" width="1" height="1" fill="#808080"/>
<rect x="1" y="8" width="2" height="1" fill="#808080"/>
<rect x="2" y="3" width="11" height="2" fill="#808080"/>
<rect x="2" y="5" width="1" height="7" fill="#808080"/>
<rect x="3" y="5" width="7" height="7" fill="#fff"/>
<rect x="2" y="12" width="11" height="1" fill="#e8e8e8"/>
<polygon points="4,6 6,7.8 4,9.6" fill="#a0a0a0" shape-rendering="auto"/>
<rect x="7" y="6" width="2" height="1" fill="#909090"/><rect x="7" y="8" width="2" height="1" fill="#909090"/><rect x="7" y="10" width="2" height="1" fill="#909090"/>
<rect x="10" y="5" width="1" height="7" fill="#8e8e8e"/><rect x="11" y="5" width="1" height="7" fill="#fff"/><rect x="11" y="6" width="1" height="2" fill="#808080"/>
<rect x="12" y="4" width="1" height="9" fill="#8e8e8e"/>
</svg>
<div class="f" style="left:737px;top:477px;width:26px;height:17px;background:#fff;line-height:14px;text-align:right;padding-right:1px;"></div>
<div class="a" style="left:791px;top:480px;width:10px;height:10px;border-left:1px solid #1c2b40;border-top:1px solid #1c2b40;background:#cbcbcb"></div>
<div class="b d" style="left:826px;top:479px;width:85px;padding-right:2px;height:14px;line-height:18px;letter-spacing:0.35px;text-indent:1px">Bedarfsprüfung</div>
<div class="f" style="left:17px;top:496px;width:33px;height:17px;background:#fff;line-height:14px;padding-left:1px;"></div>
<div class="f" style="left:51px;top:496px;width:79px;height:17px;background:#fff;line-height:14px;padding-left:1px;"></div>
<svg class="ic" style="left:133px;top:498px" width="15" height="15" viewBox="0 0 15 15" shape-rendering="crispEdges">
<rect x="0" y="0" width="15" height="15" rx="1" fill="#c9c5c9"/>
<rect x="0" y="0" width="15" height="1" fill="#e6dede"/><rect x="0" y="0" width="1" height="15" fill="#e0dada"/>
<rect x="14" y="0" width="1" height="15" fill="#6584a4"/><rect x="0" y="14" width="15" height="1" fill="#6584a4"/>
<rect x="1" y="2" width="7" height="6" fill="#fff"/><rect x="1" y="1" width="7" height="1" fill="#8e8e8e"/><rect x="8" y="1" width="1" height="1" fill="#808080"/>
<rect x="1" y="8" width="2" height="1" fill="#808080"/>
<rect x="2" y="3" width="11" height="2" fill="#808080"/>
<rect x="2" y="5" width="1" height="7" fill="#808080"/>
<rect x="3" y="5" width="7" height="7" fill="#fff"/>
<rect x="2" y="12" width="11" height="1" fill="#e8e8e8"/>
<polygon points="4,6 6,7.8 4,9.6" fill="#a0a0a0" shape-rendering="auto"/>
<rect x="7" y="6" width="2" height="1" fill="#909090"/><rect x="7" y="8" width="2" height="1" fill="#909090"/><rect x="7" y="10" width="2" height="1" fill="#909090"/>
<rect x="10" y="5" width="1" height="7" fill="#8e8e8e"/><rect x="11" y="5" width="1" height="7" fill="#fff"/><rect x="11" y="6" width="1" height="2" fill="#808080"/>
<rect x="12" y="4" width="1" height="9" fill="#8e8e8e"/>
</svg>
<div class="f" style="left:149px;top:496px;width:33px;height:17px;background:#fff;line-height:14px;padding-left:1px;"></div>
<div class="f" style="left:183px;top:496px;width:79px;height:17px;background:#fff;line-height:14px;padding-left:1px;"></div>
<svg class="ic" style="left:265px;top:498px" width="15" height="15" viewBox="0 0 15 15" shape-rendering="crispEdges">
<rect x="0" y="0" width="15" height="15" rx="1" fill="#c9c5c9"/>
<rect x="0" y="0" width="15" height="1" fill="#e6dede"/><rect x="0" y="0" width="1" height="15" fill="#e0dada"/>
<rect x="14" y="0" width="1" height="15" fill="#6584a4"/><rect x="0" y="14" width="15" height="1" fill="#6584a4"/>
<rect x="1" y="2" width="7" height="6" fill="#fff"/><rect x="1" y="1" width="7" height="1" fill="#8e8e8e"/><rect x="8" y="1" width="1" height="1" fill="#808080"/>
<rect x="1" y="8" width="2" height="1" fill="#808080"/>
<rect x="2" y="3" width="11" height="2" fill="#808080"/>
<rect x="2" y="5" width="1" height="7" fill="#808080"/>
<rect x="3" y="5" width="7" height="7" fill="#fff"/>
<rect x="2" y="12" width="11" height="1" fill="#e8e8e8"/>
<polygon points="4,6 6,7.8 4,9.6" fill="#a0a0a0" shape-rendering="auto"/>
<rect x="7" y="6" width="2" height="1" fill="#909090"/><rect x="7" y="8" width="2" height="1" fill="#909090"/><rect x="7" y="10" width="2" height="1" fill="#909090"/>
<rect x="10" y="5" width="1" height="7" fill="#8e8e8e"/><rect x="11" y="5" width="1" height="7" fill="#fff"/><rect x="11" y="6" width="1" height="2" fill="#808080"/>
<rect x="12" y="4" width="1" height="9" fill="#8e8e8e"/>
</svg>
<div class="f" style="left:281px;top:496px;width:26px;height:17px;background:#fff;line-height:14px;padding-left:1px;"></div>
<div class="f" style="left:308px;top:496px;width:119px;height:17px;background:#fff;line-height:14px;padding-left:1px;"></div>
<svg class="ic" style="left:430px;top:498px" width="15" height="15" viewBox="0 0 15 15" shape-rendering="crispEdges">
<rect x="0" y="0" width="15" height="15" rx="1" fill="#c9c5c9"/>
<rect x="0" y="0" width="15" height="1" fill="#e6dede"/><rect x="0" y="0" width="1" height="15" fill="#e0dada"/>
<rect x="14" y="0" width="1" height="15" fill="#6584a4"/><rect x="0" y="14" width="15" height="1" fill="#6584a4"/>
<rect x="1" y="2" width="7" height="6" fill="#fff"/><rect x="1" y="1" width="7" height="1" fill="#8e8e8e"/><rect x="8" y="1" width="1" height="1" fill="#808080"/>
<rect x="1" y="8" width="2" height="1" fill="#808080"/>
<rect x="2" y="3" width="11" height="2" fill="#808080"/>
<rect x="2" y="5" width="1" height="7" fill="#808080"/>
<rect x="3" y="5" width="7" height="7" fill="#fff"/>
<rect x="2" y="12" width="11" height="1" fill="#e8e8e8"/>
<polygon points="4,6 6,7.8 4,9.6" fill="#a0a0a0" shape-rendering="auto"/>
<rect x="7" y="6" width="2" height="1" fill="#909090"/><rect x="7" y="8" width="2" height="1" fill="#909090"/><rect x="7" y="10" width="2" height="1" fill="#909090"/>
<rect x="10" y="5" width="1" height="7" fill="#8e8e8e"/><rect x="11" y="5" width="1" height="7" fill="#fff"/><rect x="11" y="6" width="1" height="2" fill="#808080"/>
<rect x="12" y="4" width="1" height="9" fill="#8e8e8e"/>
</svg>
<div class="f" style="left:447px;top:496px;width:25px;height:17px;background:#fff;line-height:14px;padding-left:1px;"></div>
<div class="f" style="left:473px;top:496px;width:118px;height:17px;background:#fff;line-height:14px;padding-left:1px;"></div>
<svg class="ic" style="left:595px;top:498px" width="15" height="15" viewBox="0 0 15 15" shape-rendering="crispEdges">
<rect x="0" y="0" width="15" height="15" rx="1" fill="#c9c5c9"/>
<rect x="0" y="0" width="15" height="1" fill="#e6dede"/><rect x="0" y="0" width="1" height="15" fill="#e0dada"/>
<rect x="14" y="0" width="1" height="15" fill="#6584a4"/><rect x="0" y="14" width="15" height="1" fill="#6584a4"/>
<rect x="1" y="2" width="7" height="6" fill="#fff"/><rect x="1" y="1" width="7" height="1" fill="#8e8e8e"/><rect x="8" y="1" width="1" height="1" fill="#808080"/>
<rect x="1" y="8" width="2" height="1" fill="#808080"/>
<rect x="2" y="3" width="11" height="2" fill="#808080"/>
<rect x="2" y="5" width="1" height="7" fill="#808080"/>
<rect x="3" y="5" width="7" height="7" fill="#fff"/>
<rect x="2" y="12" width="11" height="1" fill="#e8e8e8"/>
<polygon points="4,6 6,7.8 4,9.6" fill="#a0a0a0" shape-rendering="auto"/>
<rect x="7" y="6" width="2" height="1" fill="#909090"/><rect x="7" y="8" width="2" height="1" fill="#909090"/><rect x="7" y="10" width="2" height="1" fill="#909090"/>
<rect x="10" y="5" width="1" height="7" fill="#8e8e8e"/><rect x="11" y="5" width="1" height="7" fill="#fff"/><rect x="11" y="6" width="1" height="2" fill="#808080"/>
<rect x="12" y="4" width="1" height="9" fill="#8e8e8e"/>
</svg>
<div class="f" style="left:612px;top:496px;width:26px;height:17px;background:#fff;line-height:14px;padding-left:1px;"></div>
<div class="f" style="left:639px;top:496px;width:79px;height:17px;background:#fff;line-height:14px;padding-left:1px;"></div>
<svg class="ic" style="left:721px;top:498px" width="15" height="15" viewBox="0 0 15 15" shape-rendering="crispEdges">
<rect x="0" y="0" width="15" height="15" rx="1" fill="#c9c5c9"/>
<rect x="0" y="0" width="15" height="1" fill="#e6dede"/><rect x="0" y="0" width="1" height="15" fill="#e0dada"/>
<rect x="14" y="0" width="1" height="15" fill="#6584a4"/><rect x="0" y="14" width="15" height="1" fill="#6584a4"/>
<rect x="1" y="2" width="7" height="6" fill="#fff"/><rect x="1" y="1" width="7" height="1" fill="#8e8e8e"/><rect x="8" y="1" width="1" height="1" fill="#808080"/>
<rect x="1" y="8" width="2" height="1" fill="#808080"/>
<rect x="2" y="3" width="11" height="2" fill="#808080"/>
<rect x="2" y="5" width="1" height="7" fill="#808080"/>
<rect x="3" y="5" width="7" height="7" fill="#fff"/>
<rect x="2" y="12" width="11" height="1" fill="#e8e8e8"/>
<polygon points="4,6 6,7.8 4,9.6" fill="#a0a0a0" shape-rendering="auto"/>
<rect x="7" y="6" width="2" height="1" fill="#909090"/><rect x="7" y="8" width="2" height="1" fill="#909090"/><rect x="7" y="10" width="2" height="1" fill="#909090"/>
<rect x="10" y="5" width="1" height="7" fill="#8e8e8e"/><rect x="11" y="5" width="1" height="7" fill="#fff"/><rect x="11" y="6" width="1" height="2" fill="#808080"/>
<rect x="12" y="4" width="1" height="9" fill="#8e8e8e"/>
</svg>
<div class="f" style="left:737px;top:496px;width:26px;height:17px;background:#fff;line-height:14px;text-align:right;padding-right:1px;"></div>
<div class="a" style="left:791px;top:499px;width:10px;height:10px;border-left:1px solid #1c2b40;border-top:1px solid #1c2b40;background:#cbcbcb"></div>
<div class="b d" style="left:826px;top:498px;width:85px;padding-right:2px;height:14px;line-height:18px;letter-spacing:0.35px;text-indent:1px">Bedarfsprüfung</div>
<svg class="ic" style="left:920px;top:328px" width="15" height="186" viewBox="0 0 15 186" shape-rendering="crispEdges">
<rect x="0" y="8" width="15" height="170" fill="#cdcdcd"/>
<rect x="0" y="8" width="1" height="170" fill="#a6a6a6"/><rect x="1" y="8" width="1" height="170" fill="#fff"/>
<rect x="14" y="8" width="1" height="170" fill="#a6a6a6"/>
<path d="M0.5 14.5 V7 A7 7 0 0 1 14.5 7 V14.5 Z" fill="#cdcdcd" stroke="#7f98b4" stroke-width="1" shape-rendering="auto"/>
<rect x="1" y="14" width="13" height="1" fill="#5f7fa2"/><rect x="1" y="15" width="13" height="1" fill="#fff"/>
<polygon points="4,10 11,10 7.5,6" fill="#5b7aa0" shape-rendering="auto"/>
<path d="M0.5 170.5 V179 A7 7 0 0 0 14.5 179 V170.5 Z" fill="#cdcdcd" stroke="#7f98b4" stroke-width="1" shape-rendering="auto"/>
<rect x="1" y="170" width="13" height="1" fill="#5f7fa2"/><rect x="1" y="171" width="13" height="1" fill="#fff"/>
<polygon points="4,176 11,176 7.5,180" fill="#5b7aa0" shape-rendering="auto"/>

<rect x="9" y="68" width="2" height="2" fill="#fff"/><rect x="10" y="69" width="1" height="1" fill="#6f8cab"/>
<rect x="9" y="76" width="2" height="2" fill="#fff"/><rect x="10" y="77" width="1" height="1" fill="#6f8cab"/>
<rect x="9" y="84" width="2" height="2" fill="#fff"/><rect x="10" y="85" width="1" height="1" fill="#6f8cab"/>
<rect x="9" y="92" width="2" height="2" fill="#fff"/><rect x="10" y="93" width="1" height="1" fill="#6f8cab"/>
<rect x="9" y="100" width="2" height="2" fill="#fff"/><rect x="10" y="101" width="1" height="1" fill="#6f8cab"/>
<rect x="9" y="108" width="2" height="2" fill="#fff"/><rect x="10" y="109" width="1" height="1" fill="#6f8cab"/>
<rect x="4" y="72" width="2" height="2" fill="#fff"/><rect x="5" y="73" width="1" height="1" fill="#6f8cab"/>
<rect x="4" y="80" width="2" height="2" fill="#fff"/><rect x="5" y="81" width="1" height="1" fill="#6f8cab"/>
<rect x="4" y="88" width="2" height="2" fill="#fff"/><rect x="5" y="89" width="1" height="1" fill="#6f8cab"/>
<rect x="4" y="96" width="2" height="2" fill="#fff"/><rect x="5" y="97" width="1" height="1" fill="#6f8cab"/>
<rect x="4" y="104" width="2" height="2" fill="#fff"/><rect x="5" y="105" width="1" height="1" fill="#6f8cab"/>
</svg>
<div class="a" style="left:11px;top:521px;width:699px;height:35px;border:1px solid #000;border-radius:10px"></div>
<div class="t" style="left:26px;top:532.7px;font-size:11px;color:#000;">Erfassung</div>
<div class="f" style="left:84px;top:531px;width:119px;height:17px;background:#eeeaee;line-height:14px;padding-left:1px;">25.11.2013 14:55</div>
<div class="f" style="left:204px;top:531px;width:132px;height:17px;background:#eeeaee;line-height:14px;padding-left:1px;">REFLEX</div>
<div class="t" style="left:380px;top:532.7px;font-size:11px;color:#000;">Änderung</div>
<div class="f" style="left:436px;top:531px;width:119px;height:17px;background:#eeeaee;line-height:14px;padding-left:1px;">19.07.2017 09:07</div>
<div class="f" style="left:557px;top:531px;width:131px;height:17px;background:#eeeaee;line-height:14px;padding-left:1px;">REFLEX</div>
</body></html>
